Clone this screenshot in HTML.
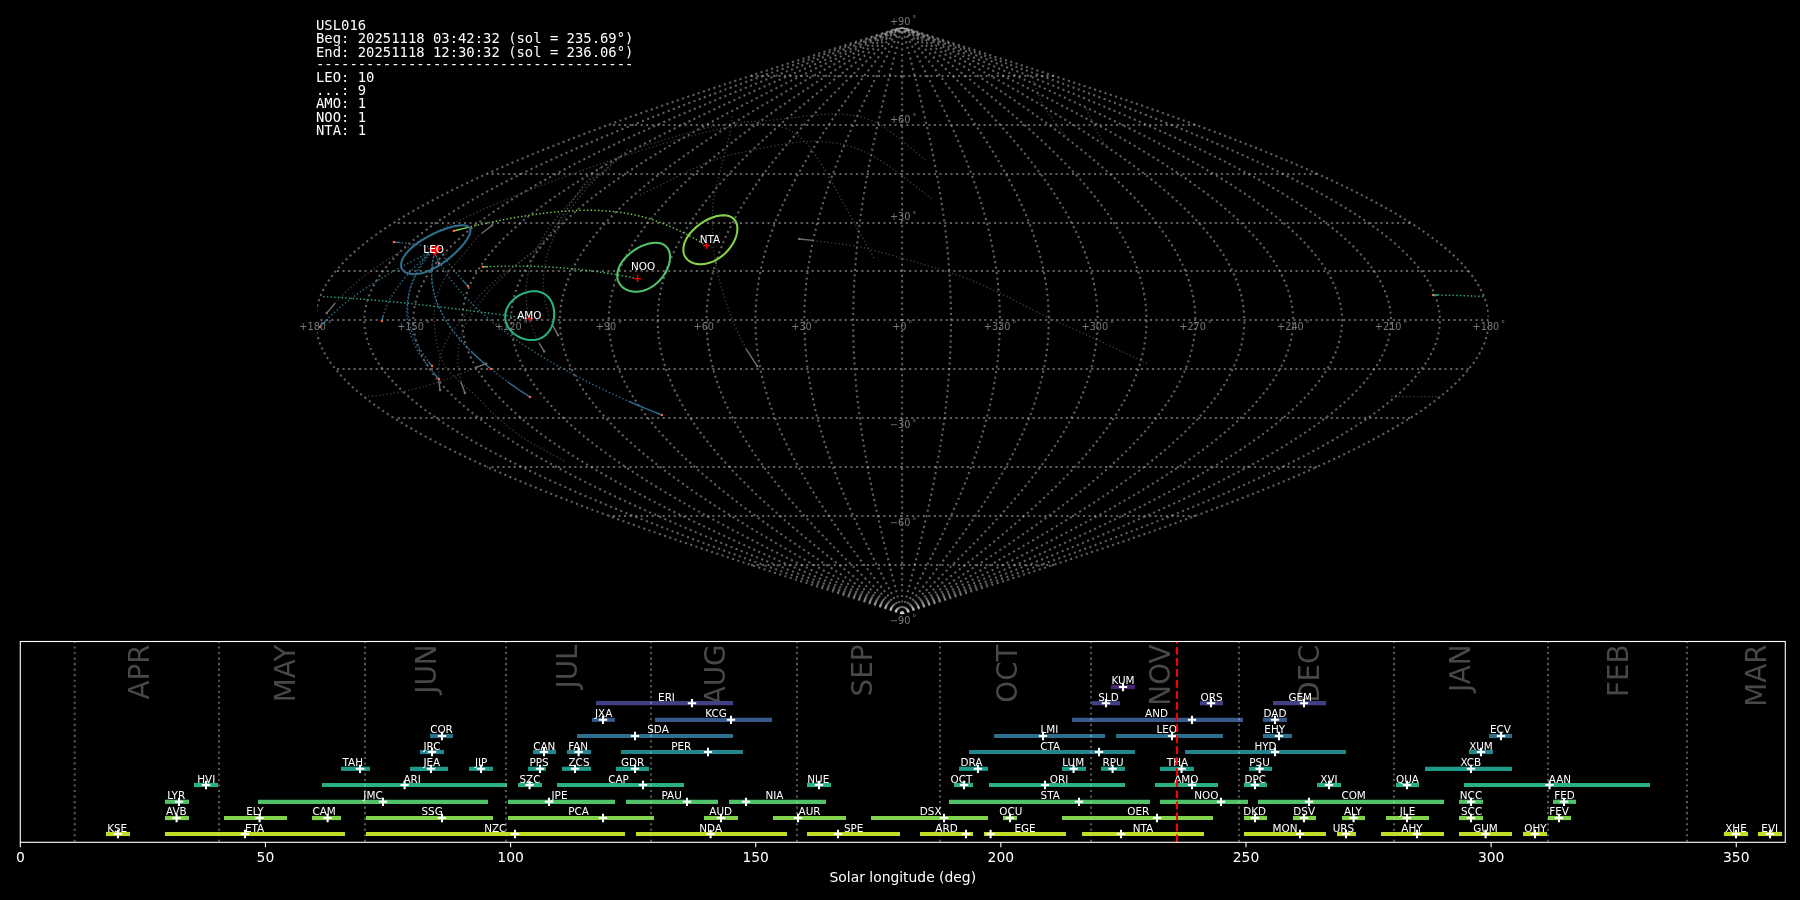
<!DOCTYPE html>
<html lang="en">
<head>
<meta charset="utf-8">
<title>USL016 meteor radiants</title>
<style>
html,body{margin:0;padding:0;background:#000;overflow:hidden}
body{width:1800px;height:900px}
svg{display:block;position:absolute;left:0;top:0;will-change:transform}
text{white-space:pre}
</style>
</head>
<body>
<svg width="1800" height="900" viewBox="0 0 1800 900">
<rect x="0" y="0" width="1800" height="900" fill="#000"/>
<defs><clipPath id="skyclip"><rect x="317" y="27.8" width="1171.7" height="586.4"/></clipPath></defs>
<g id="grid" clip-path="url(#skyclip)" fill="none" stroke="#c8c8c8" stroke-opacity="0.48" stroke-width="2.08" stroke-dasharray="2.08 3.44">
<path d="M902.1 613.61 L912.34 610.35 L922.57 607.09 L932.8 603.83 L943.02 600.57 L953.23 597.32 L963.42 594.06 L973.59 590.8 L983.74 587.54 L993.87 584.28 L1003.97 581.02 L1014.03 577.76 L1024.07 574.5 L1034.06 571.24 L1044.02 567.98 L1053.93 564.73 L1063.79 561.47 L1073.61 558.21 L1083.38 554.95 L1093.08 551.69 L1102.74 548.43 L1112.33 545.17 L1121.85 541.91 L1131.31 538.65 L1140.7 535.39 L1150.02 532.13 L1159.26 528.88 L1168.42 525.62 L1177.5 522.36 L1186.5 519.1 L1195.41 515.84 L1204.23 512.58 L1212.96 509.32 L1221.6 506.06 L1230.13 502.8 L1238.57 499.55 L1246.91 496.29 L1255.14 493.03 L1263.26 489.77 L1271.27 486.51 L1279.17 483.25 L1286.96 479.99 L1294.63 476.73 L1302.17 473.47 L1309.6 470.21 L1316.9 466.96 L1324.08 463.7 L1331.13 460.44 L1338.04 457.18 L1344.83 453.92 L1351.48 450.66 L1357.99 447.4 L1364.36 444.14 L1370.6 440.88 L1376.69 437.62 L1382.63 434.37 L1388.43 431.11 L1394.08 427.85 L1399.58 424.59 L1404.93 421.33 L1410.13 418.07 L1415.17 414.81 L1420.05 411.55 L1424.78 408.29 L1429.35 405.03 L1433.76 401.77 L1438 398.52 L1442.09 395.26 L1446 392 L1449.76 388.74 L1453.34 385.48 L1456.76 382.22 L1460.01 378.96 L1463.09 375.7 L1466 372.44 L1468.73 369.19 L1471.29 365.93 L1473.68 362.67 L1475.9 359.41 L1477.94 356.15 L1479.81 352.89 L1481.5 349.63 L1483.01 346.37 L1484.35 343.11 L1485.51 339.85 L1486.49 336.6 L1487.29 333.34 L1487.92 330.08 L1488.36 326.82 L1488.63 323.56 L1488.72 320.3 L1488.63 317.04 L1488.36 313.78 L1487.92 310.52 L1487.29 307.26 L1486.49 304 L1485.51 300.75 L1484.35 297.49 L1483.01 294.23 L1481.5 290.97 L1479.81 287.71 L1477.94 284.45 L1475.9 281.19 L1473.68 277.93 L1471.29 274.67 L1468.73 271.42 L1466 268.16 L1463.09 264.9 L1460.01 261.64 L1456.76 258.38 L1453.34 255.12 L1449.76 251.86 L1446 248.6 L1442.09 245.34 L1438 242.08 L1433.76 238.83 L1429.35 235.57 L1424.78 232.31 L1420.05 229.05 L1415.17 225.79 L1410.13 222.53 L1404.93 219.27 L1399.58 216.01 L1394.08 212.75 L1388.43 209.49 L1382.63 206.24 L1376.69 202.98 L1370.6 199.72 L1364.36 196.46 L1357.99 193.2 L1351.48 189.94 L1344.83 186.68 L1338.04 183.42 L1331.13 180.16 L1324.08 176.9 L1316.9 173.65 L1309.6 170.39 L1302.17 167.13 L1294.63 163.87 L1286.96 160.61 L1279.17 157.35 L1271.27 154.09 L1263.26 150.83 L1255.14 147.57 L1246.91 144.31 L1238.57 141.06 L1230.13 137.8 L1221.6 134.54 L1212.96 131.28 L1204.23 128.02 L1195.41 124.76 L1186.5 121.5 L1177.5 118.24 L1168.42 114.98 L1159.26 111.72 L1150.02 108.47 L1140.7 105.21 L1131.31 101.95 L1121.85 98.69 L1112.33 95.43 L1102.74 92.17 L1093.08 88.91 L1083.38 85.65 L1073.61 82.39 L1063.79 79.13 L1053.93 75.88 L1044.02 72.62 L1034.06 69.36 L1024.07 66.1 L1014.03 62.84 L1003.97 59.58 L993.87 56.32 L983.74 53.06 L973.59 49.8 L963.42 46.54 L953.23 43.29 L943.02 40.03 L932.8 36.77 L922.57 33.51 L912.34 30.25 L902.1 26.99"/>
<path d="M902.1 613.61 L911.48 610.35 L920.87 607.09 L930.24 603.83 L939.61 600.57 L948.97 597.32 L958.31 594.06 L967.63 590.8 L976.94 587.54 L986.22 584.28 L995.48 581.02 L1004.7 577.76 L1013.9 574.5 L1023.06 571.24 L1032.19 567.98 L1041.28 564.73 L1050.32 561.47 L1059.32 558.21 L1068.27 554.95 L1077.17 551.69 L1086.02 548.43 L1094.81 545.17 L1103.54 541.91 L1112.21 538.65 L1120.82 535.39 L1129.36 532.13 L1137.83 528.88 L1146.23 525.62 L1154.55 522.36 L1162.8 519.1 L1170.97 515.84 L1179.05 512.58 L1187.06 509.32 L1194.97 506.06 L1202.8 502.8 L1210.53 499.55 L1218.17 496.29 L1225.72 493.03 L1233.16 489.77 L1240.51 486.51 L1247.75 483.25 L1254.89 479.99 L1261.91 476.73 L1268.83 473.47 L1275.64 470.21 L1282.34 466.96 L1288.91 463.7 L1295.37 460.44 L1301.71 457.18 L1307.93 453.92 L1314.03 450.66 L1320 447.4 L1325.84 444.14 L1331.55 440.88 L1337.14 437.62 L1342.59 434.37 L1347.9 431.11 L1353.08 427.85 L1358.13 424.59 L1363.03 421.33 L1367.79 418.07 L1372.41 414.81 L1376.89 411.55 L1381.23 408.29 L1385.41 405.03 L1389.45 401.77 L1393.35 398.52 L1397.09 395.26 L1400.68 392 L1404.12 388.74 L1407.41 385.48 L1410.54 382.22 L1413.52 378.96 L1416.34 375.7 L1419 372.44 L1421.51 369.19 L1423.86 365.93 L1426.05 362.67 L1428.08 359.41 L1429.96 356.15 L1431.67 352.89 L1433.21 349.63 L1434.6 346.37 L1435.83 343.11 L1436.89 339.85 L1437.79 336.6 L1438.53 333.34 L1439.1 330.08 L1439.51 326.82 L1439.75 323.56 L1439.84 320.3 L1439.75 317.04 L1439.51 313.78 L1439.1 310.52 L1438.53 307.26 L1437.79 304 L1436.89 300.75 L1435.83 297.49 L1434.6 294.23 L1433.21 290.97 L1431.67 287.71 L1429.96 284.45 L1428.08 281.19 L1426.05 277.93 L1423.86 274.67 L1421.51 271.42 L1419 268.16 L1416.34 264.9 L1413.52 261.64 L1410.54 258.38 L1407.41 255.12 L1404.12 251.86 L1400.68 248.6 L1397.09 245.34 L1393.35 242.08 L1389.45 238.83 L1385.41 235.57 L1381.23 232.31 L1376.89 229.05 L1372.41 225.79 L1367.79 222.53 L1363.03 219.27 L1358.13 216.01 L1353.08 212.75 L1347.9 209.49 L1342.59 206.24 L1337.14 202.98 L1331.55 199.72 L1325.84 196.46 L1320 193.2 L1314.03 189.94 L1307.93 186.68 L1301.71 183.42 L1295.37 180.16 L1288.91 176.9 L1282.34 173.65 L1275.64 170.39 L1268.83 167.13 L1261.91 163.87 L1254.89 160.61 L1247.75 157.35 L1240.51 154.09 L1233.16 150.83 L1225.72 147.57 L1218.17 144.31 L1210.53 141.06 L1202.8 137.8 L1194.97 134.54 L1187.06 131.28 L1179.05 128.02 L1170.97 124.76 L1162.8 121.5 L1154.55 118.24 L1146.23 114.98 L1137.83 111.72 L1129.36 108.47 L1120.82 105.21 L1112.21 101.95 L1103.54 98.69 L1094.81 95.43 L1086.02 92.17 L1077.17 88.91 L1068.27 85.65 L1059.32 82.39 L1050.32 79.13 L1041.28 75.88 L1032.19 72.62 L1023.06 69.36 L1013.9 66.1 L1004.7 62.84 L995.48 59.58 L986.22 56.32 L976.94 53.06 L967.63 49.8 L958.31 46.54 L948.97 43.29 L939.61 40.03 L930.24 36.77 L920.87 33.51 L911.48 30.25 L902.1 26.99"/>
<path d="M902.1 613.61 L910.63 610.35 L919.16 607.09 L927.68 603.83 L936.2 600.57 L944.71 597.32 L953.2 594.06 L961.68 590.8 L970.13 587.54 L978.57 584.28 L986.99 581.02 L995.38 577.76 L1003.74 574.5 L1012.07 571.24 L1020.36 567.98 L1028.62 564.73 L1036.85 561.47 L1045.03 558.21 L1053.16 554.95 L1061.25 551.69 L1069.3 548.43 L1077.29 545.17 L1085.23 541.91 L1093.11 538.65 L1100.93 535.39 L1108.7 532.13 L1116.4 528.88 L1124.03 525.62 L1131.6 522.36 L1139.1 519.1 L1146.53 515.84 L1153.88 512.58 L1161.15 509.32 L1168.35 506.06 L1175.46 502.8 L1182.49 499.55 L1189.44 496.29 L1196.3 493.03 L1203.07 489.77 L1209.74 486.51 L1216.33 483.25 L1222.81 479.99 L1229.2 476.73 L1235.49 473.47 L1241.68 470.21 L1247.77 466.96 L1253.75 463.7 L1259.62 460.44 L1265.39 457.18 L1271.04 453.92 L1276.58 450.66 L1282.01 447.4 L1287.32 444.14 L1292.51 440.88 L1297.59 437.62 L1302.54 434.37 L1307.38 431.11 L1312.08 427.85 L1316.67 424.59 L1321.13 421.33 L1325.46 418.07 L1329.66 414.81 L1333.73 411.55 L1337.67 408.29 L1341.48 405.03 L1345.15 401.77 L1348.69 398.52 L1352.09 395.26 L1355.35 392 L1358.48 388.74 L1361.47 385.48 L1364.32 382.22 L1367.02 378.96 L1369.59 375.7 L1372.01 372.44 L1374.29 369.19 L1376.43 365.93 L1378.42 362.67 L1380.27 359.41 L1381.97 356.15 L1383.52 352.89 L1384.93 349.63 L1386.19 346.37 L1387.31 343.11 L1388.27 339.85 L1389.09 336.6 L1389.76 333.34 L1390.28 330.08 L1390.65 326.82 L1390.88 323.56 L1390.95 320.3 L1390.88 317.04 L1390.65 313.78 L1390.28 310.52 L1389.76 307.26 L1389.09 304 L1388.27 300.75 L1387.31 297.49 L1386.19 294.23 L1384.93 290.97 L1383.52 287.71 L1381.97 284.45 L1380.27 281.19 L1378.42 277.93 L1376.43 274.67 L1374.29 271.42 L1372.01 268.16 L1369.59 264.9 L1367.02 261.64 L1364.32 258.38 L1361.47 255.12 L1358.48 251.86 L1355.35 248.6 L1352.09 245.34 L1348.69 242.08 L1345.15 238.83 L1341.48 235.57 L1337.67 232.31 L1333.73 229.05 L1329.66 225.79 L1325.46 222.53 L1321.13 219.27 L1316.67 216.01 L1312.08 212.75 L1307.38 209.49 L1302.54 206.24 L1297.59 202.98 L1292.51 199.72 L1287.32 196.46 L1282.01 193.2 L1276.58 189.94 L1271.04 186.68 L1265.39 183.42 L1259.62 180.16 L1253.75 176.9 L1247.77 173.65 L1241.68 170.39 L1235.49 167.13 L1229.2 163.87 L1222.81 160.61 L1216.33 157.35 L1209.74 154.09 L1203.07 150.83 L1196.3 147.57 L1189.44 144.31 L1182.49 141.06 L1175.46 137.8 L1168.35 134.54 L1161.15 131.28 L1153.88 128.02 L1146.53 124.76 L1139.1 121.5 L1131.6 118.24 L1124.03 114.98 L1116.4 111.72 L1108.7 108.47 L1100.93 105.21 L1093.11 101.95 L1085.23 98.69 L1077.29 95.43 L1069.3 92.17 L1061.25 88.91 L1053.16 85.65 L1045.03 82.39 L1036.85 79.13 L1028.62 75.88 L1020.36 72.62 L1012.07 69.36 L1003.74 66.1 L995.38 62.84 L986.99 59.58 L978.57 56.32 L970.13 53.06 L961.68 49.8 L953.2 46.54 L944.71 43.29 L936.2 40.03 L927.68 36.77 L919.16 33.51 L910.63 30.25 L902.1 26.99"/>
<path d="M902.1 613.61 L909.78 610.35 L917.45 607.09 L925.13 603.83 L932.79 600.57 L940.45 597.32 L948.09 594.06 L955.72 590.8 L963.33 587.54 L970.93 584.28 L978.5 581.02 L986.05 577.76 L993.57 574.5 L1001.07 571.24 L1008.54 567.98 L1015.97 564.73 L1023.37 561.47 L1030.73 558.21 L1038.06 554.95 L1045.34 551.69 L1052.58 548.43 L1059.77 545.17 L1066.91 541.91 L1074.01 538.65 L1081.05 535.39 L1088.04 532.13 L1094.97 528.88 L1101.84 525.62 L1108.65 522.36 L1115.4 519.1 L1122.08 515.84 L1128.7 512.58 L1135.25 509.32 L1141.72 506.06 L1148.13 502.8 L1154.45 499.55 L1160.7 496.29 L1166.88 493.03 L1172.97 489.77 L1178.98 486.51 L1184.9 483.25 L1190.74 479.99 L1196.49 476.73 L1202.16 473.47 L1207.73 470.21 L1213.2 466.96 L1218.58 463.7 L1223.87 460.44 L1229.06 457.18 L1234.15 453.92 L1239.13 450.66 L1244.02 447.4 L1248.8 444.14 L1253.47 440.88 L1258.04 437.62 L1262.5 434.37 L1266.85 431.11 L1271.09 427.85 L1275.21 424.59 L1279.22 421.33 L1283.12 418.07 L1286.9 414.81 L1290.57 411.55 L1294.11 408.29 L1297.54 405.03 L1300.84 401.77 L1304.03 398.52 L1307.09 395.26 L1310.03 392 L1312.84 388.74 L1315.53 385.48 L1318.1 382.22 L1320.53 378.96 L1322.84 375.7 L1325.02 372.44 L1327.07 369.19 L1329 365.93 L1330.79 362.67 L1332.45 359.41 L1333.98 356.15 L1335.38 352.89 L1336.65 349.63 L1337.78 346.37 L1338.79 343.11 L1339.65 339.85 L1340.39 336.6 L1340.99 333.34 L1341.46 330.08 L1341.8 326.82 L1342 323.56 L1342.07 320.3 L1342 317.04 L1341.8 313.78 L1341.46 310.52 L1340.99 307.26 L1340.39 304 L1339.65 300.75 L1338.79 297.49 L1337.78 294.23 L1336.65 290.97 L1335.38 287.71 L1333.98 284.45 L1332.45 281.19 L1330.79 277.93 L1329 274.67 L1327.07 271.42 L1325.02 268.16 L1322.84 264.9 L1320.53 261.64 L1318.1 258.38 L1315.53 255.12 L1312.84 251.86 L1310.03 248.6 L1307.09 245.34 L1304.03 242.08 L1300.84 238.83 L1297.54 235.57 L1294.11 232.31 L1290.57 229.05 L1286.9 225.79 L1283.12 222.53 L1279.22 219.27 L1275.21 216.01 L1271.09 212.75 L1266.85 209.49 L1262.5 206.24 L1258.04 202.98 L1253.47 199.72 L1248.8 196.46 L1244.02 193.2 L1239.13 189.94 L1234.15 186.68 L1229.06 183.42 L1223.87 180.16 L1218.58 176.9 L1213.2 173.65 L1207.73 170.39 L1202.16 167.13 L1196.49 163.87 L1190.74 160.61 L1184.9 157.35 L1178.98 154.09 L1172.97 150.83 L1166.88 147.57 L1160.7 144.31 L1154.45 141.06 L1148.13 137.8 L1141.72 134.54 L1135.25 131.28 L1128.7 128.02 L1122.08 124.76 L1115.4 121.5 L1108.65 118.24 L1101.84 114.98 L1094.97 111.72 L1088.04 108.47 L1081.05 105.21 L1074.01 101.95 L1066.91 98.69 L1059.77 95.43 L1052.58 92.17 L1045.34 88.91 L1038.06 85.65 L1030.73 82.39 L1023.37 79.13 L1015.97 75.88 L1008.54 72.62 L1001.07 69.36 L993.57 66.1 L986.05 62.84 L978.5 59.58 L970.93 56.32 L963.33 53.06 L955.72 49.8 L948.09 46.54 L940.45 43.29 L932.79 40.03 L925.13 36.77 L917.45 33.51 L909.78 30.25 L902.1 26.99"/>
<path d="M902.1 613.61 L908.93 610.35 L915.75 607.09 L922.57 603.83 L929.38 600.57 L936.18 597.32 L942.98 594.06 L949.76 590.8 L956.53 587.54 L963.28 584.28 L970.01 581.02 L976.72 577.76 L983.41 574.5 L990.07 571.24 L996.71 567.98 L1003.32 564.73 L1009.9 561.47 L1016.44 558.21 L1022.95 554.95 L1029.42 551.69 L1035.86 548.43 L1042.25 545.17 L1048.6 541.91 L1054.91 538.65 L1061.17 535.39 L1067.38 532.13 L1073.54 528.88 L1079.65 525.62 L1085.7 522.36 L1091.7 519.1 L1097.64 515.84 L1103.52 512.58 L1109.34 509.32 L1115.1 506.06 L1120.79 502.8 L1126.41 499.55 L1131.97 496.29 L1137.46 493.03 L1142.87 489.77 L1148.21 486.51 L1153.48 483.25 L1158.67 479.99 L1163.78 476.73 L1168.82 473.47 L1173.77 470.21 L1178.64 466.96 L1183.42 463.7 L1188.12 460.44 L1192.73 457.18 L1197.25 453.92 L1201.68 450.66 L1206.03 447.4 L1210.28 444.14 L1214.43 440.88 L1218.49 437.62 L1222.45 434.37 L1226.32 431.11 L1230.09 427.85 L1233.75 424.59 L1237.32 421.33 L1240.79 418.07 L1244.15 414.81 L1247.4 411.55 L1250.55 408.29 L1253.6 405.03 L1256.54 401.77 L1259.37 398.52 L1262.09 395.26 L1264.7 392 L1267.2 388.74 L1269.59 385.48 L1271.87 382.22 L1274.04 378.96 L1276.09 375.7 L1278.03 372.44 L1279.85 369.19 L1281.56 365.93 L1283.16 362.67 L1284.63 359.41 L1285.99 356.15 L1287.24 352.89 L1288.37 349.63 L1289.37 346.37 L1290.26 343.11 L1291.04 339.85 L1291.69 336.6 L1292.23 333.34 L1292.64 330.08 L1292.94 326.82 L1293.12 323.56 L1293.18 320.3 L1293.12 317.04 L1292.94 313.78 L1292.64 310.52 L1292.23 307.26 L1291.69 304 L1291.04 300.75 L1290.26 297.49 L1289.37 294.23 L1288.37 290.97 L1287.24 287.71 L1285.99 284.45 L1284.63 281.19 L1283.16 277.93 L1281.56 274.67 L1279.85 271.42 L1278.03 268.16 L1276.09 264.9 L1274.04 261.64 L1271.87 258.38 L1269.59 255.12 L1267.2 251.86 L1264.7 248.6 L1262.09 245.34 L1259.37 242.08 L1256.54 238.83 L1253.6 235.57 L1250.55 232.31 L1247.4 229.05 L1244.15 225.79 L1240.79 222.53 L1237.32 219.27 L1233.75 216.01 L1230.09 212.75 L1226.32 209.49 L1222.45 206.24 L1218.49 202.98 L1214.43 199.72 L1210.28 196.46 L1206.03 193.2 L1201.68 189.94 L1197.25 186.68 L1192.73 183.42 L1188.12 180.16 L1183.42 176.9 L1178.64 173.65 L1173.77 170.39 L1168.82 167.13 L1163.78 163.87 L1158.67 160.61 L1153.48 157.35 L1148.21 154.09 L1142.87 150.83 L1137.46 147.57 L1131.97 144.31 L1126.41 141.06 L1120.79 137.8 L1115.1 134.54 L1109.34 131.28 L1103.52 128.02 L1097.64 124.76 L1091.7 121.5 L1085.7 118.24 L1079.65 114.98 L1073.54 111.72 L1067.38 108.47 L1061.17 105.21 L1054.91 101.95 L1048.6 98.69 L1042.25 95.43 L1035.86 92.17 L1029.42 88.91 L1022.95 85.65 L1016.44 82.39 L1009.9 79.13 L1003.32 75.88 L996.71 72.62 L990.07 69.36 L983.41 66.1 L976.72 62.84 L970.01 59.58 L963.28 56.32 L956.53 53.06 L949.76 49.8 L942.98 46.54 L936.18 43.29 L929.38 40.03 L922.57 36.77 L915.75 33.51 L908.93 30.25 L902.1 26.99"/>
<path d="M902.1 613.61 L908.07 610.35 L914.04 607.09 L920.01 603.83 L925.97 600.57 L931.92 597.32 L937.87 594.06 L943.8 590.8 L949.72 587.54 L955.63 584.28 L961.52 581.02 L967.39 577.76 L973.25 574.5 L979.08 571.24 L984.88 567.98 L990.67 564.73 L996.42 561.47 L1002.15 558.21 L1007.84 554.95 L1013.51 551.69 L1019.14 548.43 L1024.73 545.17 L1030.29 541.91 L1035.81 538.65 L1041.28 535.39 L1046.72 532.13 L1052.11 528.88 L1057.45 525.62 L1062.75 522.36 L1068 519.1 L1073.2 515.84 L1078.34 512.58 L1083.44 509.32 L1088.47 506.06 L1093.45 502.8 L1098.37 499.55 L1103.24 496.29 L1108.04 493.03 L1112.78 489.77 L1117.45 486.51 L1122.06 483.25 L1126.6 479.99 L1131.07 476.73 L1135.48 473.47 L1139.81 470.21 L1144.07 466.96 L1148.25 463.7 L1152.37 460.44 L1156.4 457.18 L1160.36 453.92 L1164.24 450.66 L1168.04 447.4 L1171.75 444.14 L1175.39 440.88 L1178.94 437.62 L1182.41 434.37 L1185.79 431.11 L1189.09 427.85 L1192.3 424.59 L1195.42 421.33 L1198.45 418.07 L1201.39 414.81 L1204.24 411.55 L1207 408.29 L1209.66 405.03 L1212.23 401.77 L1214.71 398.52 L1217.09 395.26 L1219.38 392 L1221.57 388.74 L1223.66 385.48 L1225.65 382.22 L1227.55 378.96 L1229.34 375.7 L1231.04 372.44 L1232.63 369.19 L1234.13 365.93 L1235.52 362.67 L1236.82 359.41 L1238.01 356.15 L1239.1 352.89 L1240.08 349.63 L1240.96 346.37 L1241.74 343.11 L1242.42 339.85 L1242.99 336.6 L1243.46 333.34 L1243.83 330.08 L1244.09 326.82 L1244.24 323.56 L1244.3 320.3 L1244.24 317.04 L1244.09 313.78 L1243.83 310.52 L1243.46 307.26 L1242.99 304 L1242.42 300.75 L1241.74 297.49 L1240.96 294.23 L1240.08 290.97 L1239.1 287.71 L1238.01 284.45 L1236.82 281.19 L1235.52 277.93 L1234.13 274.67 L1232.63 271.42 L1231.04 268.16 L1229.34 264.9 L1227.55 261.64 L1225.65 258.38 L1223.66 255.12 L1221.57 251.86 L1219.38 248.6 L1217.09 245.34 L1214.71 242.08 L1212.23 238.83 L1209.66 235.57 L1207 232.31 L1204.24 229.05 L1201.39 225.79 L1198.45 222.53 L1195.42 219.27 L1192.3 216.01 L1189.09 212.75 L1185.79 209.49 L1182.41 206.24 L1178.94 202.98 L1175.39 199.72 L1171.75 196.46 L1168.04 193.2 L1164.24 189.94 L1160.36 186.68 L1156.4 183.42 L1152.37 180.16 L1148.25 176.9 L1144.07 173.65 L1139.81 170.39 L1135.48 167.13 L1131.07 163.87 L1126.6 160.61 L1122.06 157.35 L1117.45 154.09 L1112.78 150.83 L1108.04 147.57 L1103.24 144.31 L1098.37 141.06 L1093.45 137.8 L1088.47 134.54 L1083.44 131.28 L1078.34 128.02 L1073.2 124.76 L1068 121.5 L1062.75 118.24 L1057.45 114.98 L1052.11 111.72 L1046.72 108.47 L1041.28 105.21 L1035.81 101.95 L1030.29 98.69 L1024.73 95.43 L1019.14 92.17 L1013.51 88.91 L1007.84 85.65 L1002.15 82.39 L996.42 79.13 L990.67 75.88 L984.88 72.62 L979.08 69.36 L973.25 66.1 L967.39 62.84 L961.52 59.58 L955.63 56.32 L949.72 53.06 L943.8 49.8 L937.87 46.54 L931.92 43.29 L925.97 40.03 L920.01 36.77 L914.04 33.51 L908.07 30.25 L902.1 26.99"/>
<path d="M902.1 613.61 L907.22 610.35 L912.34 607.09 L917.45 603.83 L922.56 600.57 L927.66 597.32 L932.76 594.06 L937.85 590.8 L942.92 587.54 L947.98 584.28 L953.03 581.02 L958.07 577.76 L963.08 574.5 L968.08 571.24 L973.06 567.98 L978.01 564.73 L982.95 561.47 L987.86 558.21 L992.74 554.95 L997.59 551.69 L1002.42 548.43 L1007.21 545.17 L1011.98 541.91 L1016.71 538.65 L1021.4 535.39 L1026.06 532.13 L1030.68 528.88 L1035.26 525.62 L1039.8 522.36 L1044.3 519.1 L1048.76 515.84 L1053.17 512.58 L1057.53 509.32 L1061.85 506.06 L1066.12 502.8 L1070.34 499.55 L1074.5 496.29 L1078.62 493.03 L1082.68 489.77 L1086.69 486.51 L1090.64 483.25 L1094.53 479.99 L1098.36 476.73 L1102.14 473.47 L1105.85 470.21 L1109.5 466.96 L1113.09 463.7 L1116.61 460.44 L1120.07 457.18 L1123.46 453.92 L1126.79 450.66 L1130.04 447.4 L1133.23 444.14 L1136.35 440.88 L1139.39 437.62 L1142.37 434.37 L1145.27 431.11 L1148.09 427.85 L1150.84 424.59 L1153.52 421.33 L1156.11 418.07 L1158.63 414.81 L1161.08 411.55 L1163.44 408.29 L1165.73 405.03 L1167.93 401.77 L1170.05 398.52 L1172.09 395.26 L1174.05 392 L1175.93 388.74 L1177.72 385.48 L1179.43 382.22 L1181.05 378.96 L1182.59 375.7 L1184.05 372.44 L1185.42 369.19 L1186.7 365.93 L1187.89 362.67 L1189 359.41 L1190.02 356.15 L1190.95 352.89 L1191.8 349.63 L1192.56 346.37 L1193.22 343.11 L1193.8 339.85 L1194.29 336.6 L1194.7 333.34 L1195.01 330.08 L1195.23 326.82 L1195.37 323.56 L1195.41 320.3 L1195.37 317.04 L1195.23 313.78 L1195.01 310.52 L1194.7 307.26 L1194.29 304 L1193.8 300.75 L1193.22 297.49 L1192.56 294.23 L1191.8 290.97 L1190.95 287.71 L1190.02 284.45 L1189 281.19 L1187.89 277.93 L1186.7 274.67 L1185.42 271.42 L1184.05 268.16 L1182.59 264.9 L1181.05 261.64 L1179.43 258.38 L1177.72 255.12 L1175.93 251.86 L1174.05 248.6 L1172.09 245.34 L1170.05 242.08 L1167.93 238.83 L1165.73 235.57 L1163.44 232.31 L1161.08 229.05 L1158.63 225.79 L1156.11 222.53 L1153.52 219.27 L1150.84 216.01 L1148.09 212.75 L1145.27 209.49 L1142.37 206.24 L1139.39 202.98 L1136.35 199.72 L1133.23 196.46 L1130.04 193.2 L1126.79 189.94 L1123.46 186.68 L1120.07 183.42 L1116.61 180.16 L1113.09 176.9 L1109.5 173.65 L1105.85 170.39 L1102.14 167.13 L1098.36 163.87 L1094.53 160.61 L1090.64 157.35 L1086.69 154.09 L1082.68 150.83 L1078.62 147.57 L1074.5 144.31 L1070.34 141.06 L1066.12 137.8 L1061.85 134.54 L1057.53 131.28 L1053.17 128.02 L1048.76 124.76 L1044.3 121.5 L1039.8 118.24 L1035.26 114.98 L1030.68 111.72 L1026.06 108.47 L1021.4 105.21 L1016.71 101.95 L1011.98 98.69 L1007.21 95.43 L1002.42 92.17 L997.59 88.91 L992.74 85.65 L987.86 82.39 L982.95 79.13 L978.01 75.88 L973.06 72.62 L968.08 69.36 L963.08 66.1 L958.07 62.84 L953.03 59.58 L947.98 56.32 L942.92 53.06 L937.85 49.8 L932.76 46.54 L927.66 43.29 L922.56 40.03 L917.45 36.77 L912.34 33.51 L907.22 30.25 L902.1 26.99"/>
<path d="M902.1 613.61 L906.37 610.35 L910.63 607.09 L914.89 603.83 L919.15 600.57 L923.4 597.32 L927.65 594.06 L931.89 590.8 L936.12 587.54 L940.34 584.28 L944.54 581.02 L948.74 577.76 L952.92 574.5 L957.08 571.24 L961.23 567.98 L965.36 564.73 L969.47 561.47 L973.56 558.21 L977.63 554.95 L981.68 551.69 L985.7 548.43 L989.69 545.17 L993.66 541.91 L997.6 538.65 L1001.52 535.39 L1005.4 532.13 L1009.25 528.88 L1013.07 525.62 L1016.85 522.36 L1020.6 519.1 L1024.31 515.84 L1027.99 512.58 L1031.63 509.32 L1035.22 506.06 L1038.78 502.8 L1042.3 499.55 L1045.77 496.29 L1049.2 493.03 L1052.58 489.77 L1055.92 486.51 L1059.21 483.25 L1062.46 479.99 L1065.65 476.73 L1068.8 473.47 L1071.89 470.21 L1074.93 466.96 L1077.92 463.7 L1080.86 460.44 L1083.74 457.18 L1086.57 453.92 L1089.34 450.66 L1092.05 447.4 L1094.71 444.14 L1097.31 440.88 L1099.84 437.62 L1102.32 434.37 L1104.74 431.11 L1107.09 427.85 L1109.38 424.59 L1111.61 421.33 L1113.78 418.07 L1115.88 414.81 L1117.91 411.55 L1119.88 408.29 L1121.79 405.03 L1123.62 401.77 L1125.39 398.52 L1127.09 395.26 L1128.73 392 L1130.29 388.74 L1131.78 385.48 L1133.21 382.22 L1134.56 378.96 L1135.84 375.7 L1137.06 372.44 L1138.2 369.19 L1139.26 365.93 L1140.26 362.67 L1141.18 359.41 L1142.03 356.15 L1142.81 352.89 L1143.52 349.63 L1144.15 346.37 L1144.7 343.11 L1145.19 339.85 L1145.59 336.6 L1145.93 333.34 L1146.19 330.08 L1146.38 326.82 L1146.49 323.56 L1146.53 320.3 L1146.49 317.04 L1146.38 313.78 L1146.19 310.52 L1145.93 307.26 L1145.59 304 L1145.19 300.75 L1144.7 297.49 L1144.15 294.23 L1143.52 290.97 L1142.81 287.71 L1142.03 284.45 L1141.18 281.19 L1140.26 277.93 L1139.26 274.67 L1138.2 271.42 L1137.06 268.16 L1135.84 264.9 L1134.56 261.64 L1133.21 258.38 L1131.78 255.12 L1130.29 251.86 L1128.73 248.6 L1127.09 245.34 L1125.39 242.08 L1123.62 238.83 L1121.79 235.57 L1119.88 232.31 L1117.91 229.05 L1115.88 225.79 L1113.78 222.53 L1111.61 219.27 L1109.38 216.01 L1107.09 212.75 L1104.74 209.49 L1102.32 206.24 L1099.84 202.98 L1097.31 199.72 L1094.71 196.46 L1092.05 193.2 L1089.34 189.94 L1086.57 186.68 L1083.74 183.42 L1080.86 180.16 L1077.92 176.9 L1074.93 173.65 L1071.89 170.39 L1068.8 167.13 L1065.65 163.87 L1062.46 160.61 L1059.21 157.35 L1055.92 154.09 L1052.58 150.83 L1049.2 147.57 L1045.77 144.31 L1042.3 141.06 L1038.78 137.8 L1035.22 134.54 L1031.63 131.28 L1027.99 128.02 L1024.31 124.76 L1020.6 121.5 L1016.85 118.24 L1013.07 114.98 L1009.25 111.72 L1005.4 108.47 L1001.52 105.21 L997.6 101.95 L993.66 98.69 L989.69 95.43 L985.7 92.17 L981.68 88.91 L977.63 85.65 L973.56 82.39 L969.47 79.13 L965.36 75.88 L961.23 72.62 L957.08 69.36 L952.92 66.1 L948.74 62.84 L944.54 59.58 L940.34 56.32 L936.12 53.06 L931.89 49.8 L927.65 46.54 L923.4 43.29 L919.15 40.03 L914.89 36.77 L910.63 33.51 L906.37 30.25 L902.1 26.99"/>
<path d="M902.1 613.61 L905.51 610.35 L908.92 607.09 L912.33 603.83 L915.74 600.57 L919.14 597.32 L922.54 594.06 L925.93 590.8 L929.31 587.54 L932.69 584.28 L936.06 581.02 L939.41 577.76 L942.76 574.5 L946.09 571.24 L949.41 567.98 L952.71 564.73 L956 561.47 L959.27 558.21 L962.53 554.95 L965.76 551.69 L968.98 548.43 L972.18 545.17 L975.35 541.91 L978.5 538.65 L981.63 535.39 L984.74 532.13 L987.82 528.88 L990.87 525.62 L993.9 522.36 L996.9 519.1 L999.87 515.84 L1002.81 512.58 L1005.72 509.32 L1008.6 506.06 L1011.44 502.8 L1014.26 499.55 L1017.04 496.29 L1019.78 493.03 L1022.49 489.77 L1025.16 486.51 L1027.79 483.25 L1030.39 479.99 L1032.94 476.73 L1035.46 473.47 L1037.93 470.21 L1040.37 466.96 L1042.76 463.7 L1045.11 460.44 L1047.41 457.18 L1049.68 453.92 L1051.89 450.66 L1054.06 447.4 L1056.19 444.14 L1058.27 440.88 L1060.3 437.62 L1062.28 434.37 L1064.21 431.11 L1066.09 427.85 L1067.93 424.59 L1069.71 421.33 L1071.44 418.07 L1073.12 414.81 L1074.75 411.55 L1076.33 408.29 L1077.85 405.03 L1079.32 401.77 L1080.73 398.52 L1082.1 395.26 L1083.4 392 L1084.65 388.74 L1085.85 385.48 L1086.99 382.22 L1088.07 378.96 L1089.1 375.7 L1090.07 372.44 L1090.98 369.19 L1091.83 365.93 L1092.63 362.67 L1093.37 359.41 L1094.05 356.15 L1094.67 352.89 L1095.23 349.63 L1095.74 346.37 L1096.18 343.11 L1096.57 339.85 L1096.9 336.6 L1097.16 333.34 L1097.37 330.08 L1097.52 326.82 L1097.61 323.56 L1097.64 320.3 L1097.61 317.04 L1097.52 313.78 L1097.37 310.52 L1097.16 307.26 L1096.9 304 L1096.57 300.75 L1096.18 297.49 L1095.74 294.23 L1095.23 290.97 L1094.67 287.71 L1094.05 284.45 L1093.37 281.19 L1092.63 277.93 L1091.83 274.67 L1090.98 271.42 L1090.07 268.16 L1089.1 264.9 L1088.07 261.64 L1086.99 258.38 L1085.85 255.12 L1084.65 251.86 L1083.4 248.6 L1082.1 245.34 L1080.73 242.08 L1079.32 238.83 L1077.85 235.57 L1076.33 232.31 L1074.75 229.05 L1073.12 225.79 L1071.44 222.53 L1069.71 219.27 L1067.93 216.01 L1066.09 212.75 L1064.21 209.49 L1062.28 206.24 L1060.3 202.98 L1058.27 199.72 L1056.19 196.46 L1054.06 193.2 L1051.89 189.94 L1049.68 186.68 L1047.41 183.42 L1045.11 180.16 L1042.76 176.9 L1040.37 173.65 L1037.93 170.39 L1035.46 167.13 L1032.94 163.87 L1030.39 160.61 L1027.79 157.35 L1025.16 154.09 L1022.49 150.83 L1019.78 147.57 L1017.04 144.31 L1014.26 141.06 L1011.44 137.8 L1008.6 134.54 L1005.72 131.28 L1002.81 128.02 L999.87 124.76 L996.9 121.5 L993.9 118.24 L990.87 114.98 L987.82 111.72 L984.74 108.47 L981.63 105.21 L978.5 101.95 L975.35 98.69 L972.18 95.43 L968.98 92.17 L965.76 88.91 L962.53 85.65 L959.27 82.39 L956 79.13 L952.71 75.88 L949.41 72.62 L946.09 69.36 L942.76 66.1 L939.41 62.84 L936.06 59.58 L932.69 56.32 L929.31 53.06 L925.93 49.8 L922.54 46.54 L919.14 43.29 L915.74 40.03 L912.33 36.77 L908.92 33.51 L905.51 30.25 L902.1 26.99"/>
<path d="M902.1 613.61 L904.66 610.35 L907.22 607.09 L909.78 603.83 L912.33 600.57 L914.88 597.32 L917.43 594.06 L919.97 590.8 L922.51 587.54 L925.04 584.28 L927.57 581.02 L930.08 577.76 L932.59 574.5 L935.09 571.24 L937.58 567.98 L940.06 564.73 L942.52 561.47 L944.98 558.21 L947.42 554.95 L949.85 551.69 L952.26 548.43 L954.66 545.17 L957.04 541.91 L959.4 538.65 L961.75 535.39 L964.08 532.13 L966.39 528.88 L968.68 525.62 L970.95 522.36 L973.2 519.1 L975.43 515.84 L977.63 512.58 L979.82 509.32 L981.97 506.06 L984.11 502.8 L986.22 499.55 L988.3 496.29 L990.36 493.03 L992.39 489.77 L994.39 486.51 L996.37 483.25 L998.31 479.99 L1000.23 476.73 L1002.12 473.47 L1003.98 470.21 L1005.8 466.96 L1007.59 463.7 L1009.36 460.44 L1011.09 457.18 L1012.78 453.92 L1014.44 450.66 L1016.07 447.4 L1017.67 444.14 L1019.22 440.88 L1020.75 437.62 L1022.23 434.37 L1023.68 431.11 L1025.1 427.85 L1026.47 424.59 L1027.81 421.33 L1029.11 418.07 L1030.37 414.81 L1031.59 411.55 L1032.77 408.29 L1033.91 405.03 L1035.01 401.77 L1036.08 398.52 L1037.1 395.26 L1038.08 392 L1039.01 388.74 L1039.91 385.48 L1040.77 382.22 L1041.58 378.96 L1042.35 375.7 L1043.07 372.44 L1043.76 369.19 L1044.4 365.93 L1045 362.67 L1045.55 359.41 L1046.06 356.15 L1046.53 352.89 L1046.95 349.63 L1047.33 346.37 L1047.66 343.11 L1047.95 339.85 L1048.2 336.6 L1048.4 333.34 L1048.55 330.08 L1048.67 326.82 L1048.73 323.56 L1048.76 320.3 L1048.73 317.04 L1048.67 313.78 L1048.55 310.52 L1048.4 307.26 L1048.2 304 L1047.95 300.75 L1047.66 297.49 L1047.33 294.23 L1046.95 290.97 L1046.53 287.71 L1046.06 284.45 L1045.55 281.19 L1045 277.93 L1044.4 274.67 L1043.76 271.42 L1043.07 268.16 L1042.35 264.9 L1041.58 261.64 L1040.77 258.38 L1039.91 255.12 L1039.01 251.86 L1038.08 248.6 L1037.1 245.34 L1036.08 242.08 L1035.01 238.83 L1033.91 235.57 L1032.77 232.31 L1031.59 229.05 L1030.37 225.79 L1029.11 222.53 L1027.81 219.27 L1026.47 216.01 L1025.1 212.75 L1023.68 209.49 L1022.23 206.24 L1020.75 202.98 L1019.22 199.72 L1017.67 196.46 L1016.07 193.2 L1014.44 189.94 L1012.78 186.68 L1011.09 183.42 L1009.36 180.16 L1007.59 176.9 L1005.8 173.65 L1003.98 170.39 L1002.12 167.13 L1000.23 163.87 L998.31 160.61 L996.37 157.35 L994.39 154.09 L992.39 150.83 L990.36 147.57 L988.3 144.31 L986.22 141.06 L984.11 137.8 L981.97 134.54 L979.82 131.28 L977.63 128.02 L975.43 124.76 L973.2 121.5 L970.95 118.24 L968.68 114.98 L966.39 111.72 L964.08 108.47 L961.75 105.21 L959.4 101.95 L957.04 98.69 L954.66 95.43 L952.26 92.17 L949.85 88.91 L947.42 85.65 L944.98 82.39 L942.52 79.13 L940.06 75.88 L937.58 72.62 L935.09 69.36 L932.59 66.1 L930.08 62.84 L927.57 59.58 L925.04 56.32 L922.51 53.06 L919.97 49.8 L917.43 46.54 L914.88 43.29 L912.33 40.03 L909.78 36.77 L907.22 33.51 L904.66 30.25 L902.1 26.99"/>
<path d="M902.1 613.61 L903.81 610.35 L905.51 607.09 L907.22 603.83 L908.92 600.57 L910.62 597.32 L912.32 594.06 L914.02 590.8 L915.71 587.54 L917.39 584.28 L919.08 581.02 L920.76 577.76 L922.43 574.5 L924.09 571.24 L925.75 567.98 L927.4 564.73 L929.05 561.47 L930.69 558.21 L932.31 554.95 L933.93 551.69 L935.54 548.43 L937.14 545.17 L938.73 541.91 L940.3 538.65 L941.87 535.39 L943.42 532.13 L944.96 528.88 L946.49 525.62 L948 522.36 L949.5 519.1 L950.99 515.84 L952.46 512.58 L953.91 509.32 L955.35 506.06 L956.77 502.8 L958.18 499.55 L959.57 496.29 L960.94 493.03 L962.29 489.77 L963.63 486.51 L964.95 483.25 L966.24 479.99 L967.52 476.73 L968.78 473.47 L970.02 470.21 L971.23 466.96 L972.43 463.7 L973.6 460.44 L974.76 457.18 L975.89 453.92 L977 450.66 L978.08 447.4 L979.14 444.14 L980.18 440.88 L981.2 437.62 L982.19 434.37 L983.16 431.11 L984.1 427.85 L985.01 424.59 L985.91 421.33 L986.77 418.07 L987.61 414.81 L988.43 411.55 L989.21 408.29 L989.98 405.03 L990.71 401.77 L991.42 398.52 L992.1 395.26 L992.75 392 L993.38 388.74 L993.97 385.48 L994.54 382.22 L995.08 378.96 L995.6 375.7 L996.08 372.44 L996.54 369.19 L996.97 365.93 L997.36 362.67 L997.73 359.41 L998.07 356.15 L998.38 352.89 L998.67 349.63 L998.92 346.37 L999.14 343.11 L999.33 339.85 L999.5 336.6 L999.63 333.34 L999.74 330.08 L999.81 326.82 L999.86 323.56 L999.87 320.3 L999.86 317.04 L999.81 313.78 L999.74 310.52 L999.63 307.26 L999.5 304 L999.33 300.75 L999.14 297.49 L998.92 294.23 L998.67 290.97 L998.38 287.71 L998.07 284.45 L997.73 281.19 L997.36 277.93 L996.97 274.67 L996.54 271.42 L996.08 268.16 L995.6 264.9 L995.08 261.64 L994.54 258.38 L993.97 255.12 L993.38 251.86 L992.75 248.6 L992.1 245.34 L991.42 242.08 L990.71 238.83 L989.98 235.57 L989.21 232.31 L988.43 229.05 L987.61 225.79 L986.77 222.53 L985.91 219.27 L985.01 216.01 L984.1 212.75 L983.16 209.49 L982.19 206.24 L981.2 202.98 L980.18 199.72 L979.14 196.46 L978.08 193.2 L977 189.94 L975.89 186.68 L974.76 183.42 L973.6 180.16 L972.43 176.9 L971.23 173.65 L970.02 170.39 L968.78 167.13 L967.52 163.87 L966.24 160.61 L964.95 157.35 L963.63 154.09 L962.29 150.83 L960.94 147.57 L959.57 144.31 L958.18 141.06 L956.77 137.8 L955.35 134.54 L953.91 131.28 L952.46 128.02 L950.99 124.76 L949.5 121.5 L948 118.24 L946.49 114.98 L944.96 111.72 L943.42 108.47 L941.87 105.21 L940.3 101.95 L938.73 98.69 L937.14 95.43 L935.54 92.17 L933.93 88.91 L932.31 85.65 L930.69 82.39 L929.05 79.13 L927.4 75.88 L925.75 72.62 L924.09 69.36 L922.43 66.1 L920.76 62.84 L919.08 59.58 L917.39 56.32 L915.71 53.06 L914.02 49.8 L912.32 46.54 L910.62 43.29 L908.92 40.03 L907.22 36.77 L905.51 33.51 L903.81 30.25 L902.1 26.99"/>
<path d="M902.1 613.61 L902.95 610.35 L903.81 607.09 L904.66 603.83 L905.51 600.57 L906.36 597.32 L907.21 594.06 L908.06 590.8 L908.9 587.54 L909.75 584.28 L910.59 581.02 L911.43 577.76 L912.26 574.5 L913.1 571.24 L913.93 567.98 L914.75 564.73 L915.57 561.47 L916.39 558.21 L917.21 554.95 L918.02 551.69 L918.82 548.43 L919.62 545.17 L920.41 541.91 L921.2 538.65 L921.98 535.39 L922.76 532.13 L923.53 528.88 L924.29 525.62 L925.05 522.36 L925.8 519.1 L926.54 515.84 L927.28 512.58 L928.01 509.32 L928.72 506.06 L929.44 502.8 L930.14 499.55 L930.83 496.29 L931.52 493.03 L932.2 489.77 L932.86 486.51 L933.52 483.25 L934.17 479.99 L934.81 476.73 L935.44 473.47 L936.06 470.21 L936.67 466.96 L937.26 463.7 L937.85 460.44 L938.43 457.18 L938.99 453.92 L939.55 450.66 L940.09 447.4 L940.62 444.14 L941.14 440.88 L941.65 437.62 L942.14 434.37 L942.63 431.11 L943.1 427.85 L943.56 424.59 L944 421.33 L944.44 418.07 L944.86 414.81 L945.26 411.55 L945.66 408.29 L946.04 405.03 L946.4 401.77 L946.76 398.52 L947.1 395.26 L947.43 392 L947.74 388.74 L948.04 385.48 L948.32 382.22 L948.59 378.96 L948.85 375.7 L949.09 372.44 L949.32 369.19 L949.53 365.93 L949.73 362.67 L949.92 359.41 L950.09 356.15 L950.24 352.89 L950.38 349.63 L950.51 346.37 L950.62 343.11 L950.72 339.85 L950.8 336.6 L950.87 333.34 L950.92 330.08 L950.96 326.82 L950.98 323.56 L950.99 320.3 L950.98 317.04 L950.96 313.78 L950.92 310.52 L950.87 307.26 L950.8 304 L950.72 300.75 L950.62 297.49 L950.51 294.23 L950.38 290.97 L950.24 287.71 L950.09 284.45 L949.92 281.19 L949.73 277.93 L949.53 274.67 L949.32 271.42 L949.09 268.16 L948.85 264.9 L948.59 261.64 L948.32 258.38 L948.04 255.12 L947.74 251.86 L947.43 248.6 L947.1 245.34 L946.76 242.08 L946.4 238.83 L946.04 235.57 L945.66 232.31 L945.26 229.05 L944.86 225.79 L944.44 222.53 L944 219.27 L943.56 216.01 L943.1 212.75 L942.63 209.49 L942.14 206.24 L941.65 202.98 L941.14 199.72 L940.62 196.46 L940.09 193.2 L939.55 189.94 L938.99 186.68 L938.43 183.42 L937.85 180.16 L937.26 176.9 L936.67 173.65 L936.06 170.39 L935.44 167.13 L934.81 163.87 L934.17 160.61 L933.52 157.35 L932.86 154.09 L932.2 150.83 L931.52 147.57 L930.83 144.31 L930.14 141.06 L929.44 137.8 L928.72 134.54 L928.01 131.28 L927.28 128.02 L926.54 124.76 L925.8 121.5 L925.05 118.24 L924.29 114.98 L923.53 111.72 L922.76 108.47 L921.98 105.21 L921.2 101.95 L920.41 98.69 L919.62 95.43 L918.82 92.17 L918.02 88.91 L917.21 85.65 L916.39 82.39 L915.57 79.13 L914.75 75.88 L913.93 72.62 L913.1 69.36 L912.26 66.1 L911.43 62.84 L910.59 59.58 L909.75 56.32 L908.9 53.06 L908.06 49.8 L907.21 46.54 L906.36 43.29 L905.51 40.03 L904.66 36.77 L903.81 33.51 L902.95 30.25 L902.1 26.99"/>
<path d="M902.1 613.61 L902.1 610.35 L902.1 607.09 L902.1 603.83 L902.1 600.57 L902.1 597.32 L902.1 594.06 L902.1 590.8 L902.1 587.54 L902.1 584.28 L902.1 581.02 L902.1 577.76 L902.1 574.5 L902.1 571.24 L902.1 567.98 L902.1 564.73 L902.1 561.47 L902.1 558.21 L902.1 554.95 L902.1 551.69 L902.1 548.43 L902.1 545.17 L902.1 541.91 L902.1 538.65 L902.1 535.39 L902.1 532.13 L902.1 528.88 L902.1 525.62 L902.1 522.36 L902.1 519.1 L902.1 515.84 L902.1 512.58 L902.1 509.32 L902.1 506.06 L902.1 502.8 L902.1 499.55 L902.1 496.29 L902.1 493.03 L902.1 489.77 L902.1 486.51 L902.1 483.25 L902.1 479.99 L902.1 476.73 L902.1 473.47 L902.1 470.21 L902.1 466.96 L902.1 463.7 L902.1 460.44 L902.1 457.18 L902.1 453.92 L902.1 450.66 L902.1 447.4 L902.1 444.14 L902.1 440.88 L902.1 437.62 L902.1 434.37 L902.1 431.11 L902.1 427.85 L902.1 424.59 L902.1 421.33 L902.1 418.07 L902.1 414.81 L902.1 411.55 L902.1 408.29 L902.1 405.03 L902.1 401.77 L902.1 398.52 L902.1 395.26 L902.1 392 L902.1 388.74 L902.1 385.48 L902.1 382.22 L902.1 378.96 L902.1 375.7 L902.1 372.44 L902.1 369.19 L902.1 365.93 L902.1 362.67 L902.1 359.41 L902.1 356.15 L902.1 352.89 L902.1 349.63 L902.1 346.37 L902.1 343.11 L902.1 339.85 L902.1 336.6 L902.1 333.34 L902.1 330.08 L902.1 326.82 L902.1 323.56 L902.1 320.3 L902.1 317.04 L902.1 313.78 L902.1 310.52 L902.1 307.26 L902.1 304 L902.1 300.75 L902.1 297.49 L902.1 294.23 L902.1 290.97 L902.1 287.71 L902.1 284.45 L902.1 281.19 L902.1 277.93 L902.1 274.67 L902.1 271.42 L902.1 268.16 L902.1 264.9 L902.1 261.64 L902.1 258.38 L902.1 255.12 L902.1 251.86 L902.1 248.6 L902.1 245.34 L902.1 242.08 L902.1 238.83 L902.1 235.57 L902.1 232.31 L902.1 229.05 L902.1 225.79 L902.1 222.53 L902.1 219.27 L902.1 216.01 L902.1 212.75 L902.1 209.49 L902.1 206.24 L902.1 202.98 L902.1 199.72 L902.1 196.46 L902.1 193.2 L902.1 189.94 L902.1 186.68 L902.1 183.42 L902.1 180.16 L902.1 176.9 L902.1 173.65 L902.1 170.39 L902.1 167.13 L902.1 163.87 L902.1 160.61 L902.1 157.35 L902.1 154.09 L902.1 150.83 L902.1 147.57 L902.1 144.31 L902.1 141.06 L902.1 137.8 L902.1 134.54 L902.1 131.28 L902.1 128.02 L902.1 124.76 L902.1 121.5 L902.1 118.24 L902.1 114.98 L902.1 111.72 L902.1 108.47 L902.1 105.21 L902.1 101.95 L902.1 98.69 L902.1 95.43 L902.1 92.17 L902.1 88.91 L902.1 85.65 L902.1 82.39 L902.1 79.13 L902.1 75.88 L902.1 72.62 L902.1 69.36 L902.1 66.1 L902.1 62.84 L902.1 59.58 L902.1 56.32 L902.1 53.06 L902.1 49.8 L902.1 46.54 L902.1 43.29 L902.1 40.03 L902.1 36.77 L902.1 33.51 L902.1 30.25 L902.1 26.99"/>
<path d="M902.1 613.61 L901.25 610.35 L900.39 607.09 L899.54 603.83 L898.69 600.57 L897.84 597.32 L896.99 594.06 L896.14 590.8 L895.3 587.54 L894.45 584.28 L893.61 581.02 L892.77 577.76 L891.94 574.5 L891.1 571.24 L890.27 567.98 L889.45 564.73 L888.63 561.47 L887.81 558.21 L886.99 554.95 L886.18 551.69 L885.38 548.43 L884.58 545.17 L883.79 541.91 L883 538.65 L882.22 535.39 L881.44 532.13 L880.67 528.88 L879.91 525.62 L879.15 522.36 L878.4 519.1 L877.66 515.84 L876.92 512.58 L876.19 509.32 L875.48 506.06 L874.76 502.8 L874.06 499.55 L873.37 496.29 L872.68 493.03 L872 489.77 L871.34 486.51 L870.68 483.25 L870.03 479.99 L869.39 476.73 L868.76 473.47 L868.14 470.21 L867.53 466.96 L866.94 463.7 L866.35 460.44 L865.77 457.18 L865.21 453.92 L864.65 450.66 L864.11 447.4 L863.58 444.14 L863.06 440.88 L862.55 437.62 L862.06 434.37 L861.57 431.11 L861.1 427.85 L860.64 424.59 L860.2 421.33 L859.76 418.07 L859.34 414.81 L858.94 411.55 L858.54 408.29 L858.16 405.03 L857.8 401.77 L857.44 398.52 L857.1 395.26 L856.77 392 L856.46 388.74 L856.16 385.48 L855.88 382.22 L855.61 378.96 L855.35 375.7 L855.11 372.44 L854.88 369.19 L854.67 365.93 L854.47 362.67 L854.28 359.41 L854.11 356.15 L853.96 352.89 L853.82 349.63 L853.69 346.37 L853.58 343.11 L853.48 339.85 L853.4 336.6 L853.33 333.34 L853.28 330.08 L853.24 326.82 L853.22 323.56 L853.22 320.3 L853.22 317.04 L853.24 313.78 L853.28 310.52 L853.33 307.26 L853.4 304 L853.48 300.75 L853.58 297.49 L853.69 294.23 L853.82 290.97 L853.96 287.71 L854.11 284.45 L854.28 281.19 L854.47 277.93 L854.67 274.67 L854.88 271.42 L855.11 268.16 L855.35 264.9 L855.61 261.64 L855.88 258.38 L856.16 255.12 L856.46 251.86 L856.77 248.6 L857.1 245.34 L857.44 242.08 L857.8 238.83 L858.16 235.57 L858.54 232.31 L858.94 229.05 L859.34 225.79 L859.76 222.53 L860.2 219.27 L860.64 216.01 L861.1 212.75 L861.57 209.49 L862.06 206.24 L862.55 202.98 L863.06 199.72 L863.58 196.46 L864.11 193.2 L864.65 189.94 L865.21 186.68 L865.77 183.42 L866.35 180.16 L866.94 176.9 L867.53 173.65 L868.14 170.39 L868.76 167.13 L869.39 163.87 L870.03 160.61 L870.68 157.35 L871.34 154.09 L872 150.83 L872.68 147.57 L873.37 144.31 L874.06 141.06 L874.76 137.8 L875.48 134.54 L876.19 131.28 L876.92 128.02 L877.66 124.76 L878.4 121.5 L879.15 118.24 L879.91 114.98 L880.67 111.72 L881.44 108.47 L882.22 105.21 L883 101.95 L883.79 98.69 L884.58 95.43 L885.38 92.17 L886.18 88.91 L886.99 85.65 L887.81 82.39 L888.63 79.13 L889.45 75.88 L890.27 72.62 L891.1 69.36 L891.94 66.1 L892.77 62.84 L893.61 59.58 L894.45 56.32 L895.3 53.06 L896.14 49.8 L896.99 46.54 L897.84 43.29 L898.69 40.03 L899.54 36.77 L900.39 33.51 L901.25 30.25 L902.1 26.99"/>
<path d="M902.1 613.61 L900.39 610.35 L898.69 607.09 L896.98 603.83 L895.28 600.57 L893.58 597.32 L891.88 594.06 L890.18 590.8 L888.49 587.54 L886.81 584.28 L885.12 581.02 L883.44 577.76 L881.77 574.5 L880.11 571.24 L878.45 567.98 L876.8 564.73 L875.15 561.47 L873.51 558.21 L871.89 554.95 L870.27 551.69 L868.66 548.43 L867.06 545.17 L865.47 541.91 L863.9 538.65 L862.33 535.39 L860.78 532.13 L859.24 528.88 L857.71 525.62 L856.2 522.36 L854.7 519.1 L853.22 515.84 L851.74 512.58 L850.29 509.32 L848.85 506.06 L847.43 502.8 L846.02 499.55 L844.63 496.29 L843.26 493.03 L841.91 489.77 L840.57 486.51 L839.25 483.25 L837.96 479.99 L836.68 476.73 L835.42 473.47 L834.18 470.21 L832.97 466.96 L831.77 463.7 L830.6 460.44 L829.44 457.18 L828.31 453.92 L827.2 450.66 L826.12 447.4 L825.06 444.14 L824.02 440.88 L823 437.62 L822.01 434.37 L821.04 431.11 L820.1 427.85 L819.19 424.59 L818.29 421.33 L817.43 418.07 L816.59 414.81 L815.77 411.55 L814.99 408.29 L814.22 405.03 L813.49 401.77 L812.78 398.52 L812.1 395.26 L811.45 392 L810.82 388.74 L810.23 385.48 L809.66 382.22 L809.12 378.96 L808.6 375.7 L808.12 372.44 L807.66 369.19 L807.23 365.93 L806.84 362.67 L806.47 359.41 L806.13 356.15 L805.82 352.89 L805.53 349.63 L805.28 346.37 L805.06 343.11 L804.87 339.85 L804.7 336.6 L804.57 333.34 L804.46 330.08 L804.39 326.82 L804.34 323.56 L804.33 320.3 L804.34 317.04 L804.39 313.78 L804.46 310.52 L804.57 307.26 L804.7 304 L804.87 300.75 L805.06 297.49 L805.28 294.23 L805.53 290.97 L805.82 287.71 L806.13 284.45 L806.47 281.19 L806.84 277.93 L807.23 274.67 L807.66 271.42 L808.12 268.16 L808.6 264.9 L809.12 261.64 L809.66 258.38 L810.23 255.12 L810.82 251.86 L811.45 248.6 L812.1 245.34 L812.78 242.08 L813.49 238.83 L814.22 235.57 L814.99 232.31 L815.77 229.05 L816.59 225.79 L817.43 222.53 L818.29 219.27 L819.19 216.01 L820.1 212.75 L821.04 209.49 L822.01 206.24 L823 202.98 L824.02 199.72 L825.06 196.46 L826.12 193.2 L827.2 189.94 L828.31 186.68 L829.44 183.42 L830.6 180.16 L831.77 176.9 L832.97 173.65 L834.18 170.39 L835.42 167.13 L836.68 163.87 L837.96 160.61 L839.25 157.35 L840.57 154.09 L841.91 150.83 L843.26 147.57 L844.63 144.31 L846.02 141.06 L847.43 137.8 L848.85 134.54 L850.29 131.28 L851.74 128.02 L853.22 124.76 L854.7 121.5 L856.2 118.24 L857.71 114.98 L859.24 111.72 L860.78 108.47 L862.33 105.21 L863.9 101.95 L865.47 98.69 L867.06 95.43 L868.66 92.17 L870.27 88.91 L871.89 85.65 L873.51 82.39 L875.15 79.13 L876.8 75.88 L878.45 72.62 L880.11 69.36 L881.77 66.1 L883.44 62.84 L885.12 59.58 L886.81 56.32 L888.49 53.06 L890.18 49.8 L891.88 46.54 L893.58 43.29 L895.28 40.03 L896.98 36.77 L898.69 33.51 L900.39 30.25 L902.1 26.99"/>
<path d="M902.1 613.61 L899.54 610.35 L896.98 607.09 L894.42 603.83 L891.87 600.57 L889.32 597.32 L886.77 594.06 L884.23 590.8 L881.69 587.54 L879.16 584.28 L876.63 581.02 L874.12 577.76 L871.61 574.5 L869.11 571.24 L866.62 567.98 L864.14 564.73 L861.68 561.47 L859.22 558.21 L856.78 554.95 L854.35 551.69 L851.94 548.43 L849.54 545.17 L847.16 541.91 L844.8 538.65 L842.45 535.39 L840.12 532.13 L837.81 528.88 L835.52 525.62 L833.25 522.36 L831 519.1 L828.77 515.84 L826.57 512.58 L824.38 509.32 L822.23 506.06 L820.09 502.8 L817.98 499.55 L815.9 496.29 L813.84 493.03 L811.81 489.77 L809.81 486.51 L807.83 483.25 L805.89 479.99 L803.97 476.73 L802.08 473.47 L800.22 470.21 L798.4 466.96 L796.61 463.7 L794.84 460.44 L793.11 457.18 L791.42 453.92 L789.76 450.66 L788.13 447.4 L786.53 444.14 L784.98 440.88 L783.45 437.62 L781.97 434.37 L780.52 431.11 L779.1 427.85 L777.73 424.59 L776.39 421.33 L775.09 418.07 L773.83 414.81 L772.61 411.55 L771.43 408.29 L770.29 405.03 L769.19 401.77 L768.12 398.52 L767.1 395.26 L766.12 392 L765.19 388.74 L764.29 385.48 L763.43 382.22 L762.62 378.96 L761.85 375.7 L761.13 372.44 L760.44 369.19 L759.8 365.93 L759.2 362.67 L758.65 359.41 L758.14 356.15 L757.67 352.89 L757.25 349.63 L756.87 346.37 L756.54 343.11 L756.25 339.85 L756 336.6 L755.8 333.34 L755.65 330.08 L755.53 326.82 L755.47 323.56 L755.45 320.3 L755.47 317.04 L755.53 313.78 L755.65 310.52 L755.8 307.26 L756 304 L756.25 300.75 L756.54 297.49 L756.87 294.23 L757.25 290.97 L757.67 287.71 L758.14 284.45 L758.65 281.19 L759.2 277.93 L759.8 274.67 L760.44 271.42 L761.13 268.16 L761.85 264.9 L762.62 261.64 L763.43 258.38 L764.29 255.12 L765.19 251.86 L766.12 248.6 L767.1 245.34 L768.12 242.08 L769.19 238.83 L770.29 235.57 L771.43 232.31 L772.61 229.05 L773.83 225.79 L775.09 222.53 L776.39 219.27 L777.73 216.01 L779.1 212.75 L780.52 209.49 L781.97 206.24 L783.45 202.98 L784.98 199.72 L786.53 196.46 L788.13 193.2 L789.76 189.94 L791.42 186.68 L793.11 183.42 L794.84 180.16 L796.61 176.9 L798.4 173.65 L800.22 170.39 L802.08 167.13 L803.97 163.87 L805.89 160.61 L807.83 157.35 L809.81 154.09 L811.81 150.83 L813.84 147.57 L815.9 144.31 L817.98 141.06 L820.09 137.8 L822.23 134.54 L824.38 131.28 L826.57 128.02 L828.77 124.76 L831 121.5 L833.25 118.24 L835.52 114.98 L837.81 111.72 L840.12 108.47 L842.45 105.21 L844.8 101.95 L847.16 98.69 L849.54 95.43 L851.94 92.17 L854.35 88.91 L856.78 85.65 L859.22 82.39 L861.68 79.13 L864.14 75.88 L866.62 72.62 L869.11 69.36 L871.61 66.1 L874.12 62.84 L876.63 59.58 L879.16 56.32 L881.69 53.06 L884.23 49.8 L886.77 46.54 L889.32 43.29 L891.87 40.03 L894.42 36.77 L896.98 33.51 L899.54 30.25 L902.1 26.99"/>
<path d="M902.1 613.61 L898.69 610.35 L895.28 607.09 L891.87 603.83 L888.46 600.57 L885.06 597.32 L881.66 594.06 L878.27 590.8 L874.89 587.54 L871.51 584.28 L868.14 581.02 L864.79 577.76 L861.44 574.5 L858.11 571.24 L854.79 567.98 L851.49 564.73 L848.2 561.47 L844.93 558.21 L841.67 554.95 L838.44 551.69 L835.22 548.43 L832.02 545.17 L828.85 541.91 L825.7 538.65 L822.57 535.39 L819.46 532.13 L816.38 528.88 L813.33 525.62 L810.3 522.36 L807.3 519.1 L804.33 515.84 L801.39 512.58 L798.48 509.32 L795.6 506.06 L792.76 502.8 L789.94 499.55 L787.16 496.29 L784.42 493.03 L781.71 489.77 L779.04 486.51 L776.41 483.25 L773.81 479.99 L771.26 476.73 L768.74 473.47 L766.27 470.21 L763.83 466.96 L761.44 463.7 L759.09 460.44 L756.79 457.18 L754.52 453.92 L752.31 450.66 L750.14 447.4 L748.01 444.14 L745.93 440.88 L743.9 437.62 L741.92 434.37 L739.99 431.11 L738.11 427.85 L736.27 424.59 L734.49 421.33 L732.76 418.07 L731.08 414.81 L729.45 411.55 L727.87 408.29 L726.35 405.03 L724.88 401.77 L723.47 398.52 L722.1 395.26 L720.8 392 L719.55 388.74 L718.35 385.48 L717.21 382.22 L716.13 378.96 L715.1 375.7 L714.13 372.44 L713.22 369.19 L712.37 365.93 L711.57 362.67 L710.83 359.41 L710.15 356.15 L709.53 352.89 L708.97 349.63 L708.46 346.37 L708.02 343.11 L707.63 339.85 L707.3 336.6 L707.04 333.34 L706.83 330.08 L706.68 326.82 L706.59 323.56 L706.56 320.3 L706.59 317.04 L706.68 313.78 L706.83 310.52 L707.04 307.26 L707.3 304 L707.63 300.75 L708.02 297.49 L708.46 294.23 L708.97 290.97 L709.53 287.71 L710.15 284.45 L710.83 281.19 L711.57 277.93 L712.37 274.67 L713.22 271.42 L714.13 268.16 L715.1 264.9 L716.13 261.64 L717.21 258.38 L718.35 255.12 L719.55 251.86 L720.8 248.6 L722.1 245.34 L723.47 242.08 L724.88 238.83 L726.35 235.57 L727.87 232.31 L729.45 229.05 L731.08 225.79 L732.76 222.53 L734.49 219.27 L736.27 216.01 L738.11 212.75 L739.99 209.49 L741.92 206.24 L743.9 202.98 L745.93 199.72 L748.01 196.46 L750.14 193.2 L752.31 189.94 L754.52 186.68 L756.79 183.42 L759.09 180.16 L761.44 176.9 L763.83 173.65 L766.27 170.39 L768.74 167.13 L771.26 163.87 L773.81 160.61 L776.41 157.35 L779.04 154.09 L781.71 150.83 L784.42 147.57 L787.16 144.31 L789.94 141.06 L792.76 137.8 L795.6 134.54 L798.48 131.28 L801.39 128.02 L804.33 124.76 L807.3 121.5 L810.3 118.24 L813.33 114.98 L816.38 111.72 L819.46 108.47 L822.57 105.21 L825.7 101.95 L828.85 98.69 L832.02 95.43 L835.22 92.17 L838.44 88.91 L841.67 85.65 L844.93 82.39 L848.2 79.13 L851.49 75.88 L854.79 72.62 L858.11 69.36 L861.44 66.1 L864.79 62.84 L868.14 59.58 L871.51 56.32 L874.89 53.06 L878.27 49.8 L881.66 46.54 L885.06 43.29 L888.46 40.03 L891.87 36.77 L895.28 33.51 L898.69 30.25 L902.1 26.99"/>
<path d="M902.1 613.61 L897.83 610.35 L893.57 607.09 L889.31 603.83 L885.05 600.57 L880.8 597.32 L876.55 594.06 L872.31 590.8 L868.08 587.54 L863.86 584.28 L859.66 581.02 L855.46 577.76 L851.28 574.5 L847.12 571.24 L842.97 567.98 L838.84 564.73 L834.73 561.47 L830.64 558.21 L826.57 554.95 L822.52 551.69 L818.5 548.43 L814.51 545.17 L810.54 541.91 L806.6 538.65 L802.68 535.39 L798.8 532.13 L794.95 528.88 L791.13 525.62 L787.35 522.36 L783.6 519.1 L779.89 515.84 L776.21 512.58 L772.57 509.32 L768.98 506.06 L765.42 502.8 L761.9 499.55 L758.43 496.29 L755 493.03 L751.62 489.77 L748.28 486.51 L744.99 483.25 L741.74 479.99 L738.55 476.73 L735.4 473.47 L732.31 470.21 L729.27 466.96 L726.28 463.7 L723.34 460.44 L720.46 457.18 L717.63 453.92 L714.86 450.66 L712.15 447.4 L709.49 444.14 L706.89 440.88 L704.36 437.62 L701.88 434.37 L699.46 431.11 L697.11 427.85 L694.82 424.59 L692.59 421.33 L690.42 418.07 L688.32 414.81 L686.29 411.55 L684.32 408.29 L682.41 405.03 L680.58 401.77 L678.81 398.52 L677.11 395.26 L675.47 392 L673.91 388.74 L672.42 385.48 L670.99 382.22 L669.64 378.96 L668.36 375.7 L667.14 372.44 L666 369.19 L664.94 365.93 L663.94 362.67 L663.02 359.41 L662.17 356.15 L661.39 352.89 L660.68 349.63 L660.05 346.37 L659.5 343.11 L659.01 339.85 L658.61 336.6 L658.27 333.34 L658.01 330.08 L657.82 326.82 L657.71 323.56 L657.68 320.3 L657.71 317.04 L657.82 313.78 L658.01 310.52 L658.27 307.26 L658.61 304 L659.01 300.75 L659.5 297.49 L660.05 294.23 L660.68 290.97 L661.39 287.71 L662.17 284.45 L663.02 281.19 L663.94 277.93 L664.94 274.67 L666 271.42 L667.14 268.16 L668.36 264.9 L669.64 261.64 L670.99 258.38 L672.42 255.12 L673.91 251.86 L675.47 248.6 L677.11 245.34 L678.81 242.08 L680.58 238.83 L682.41 235.57 L684.32 232.31 L686.29 229.05 L688.32 225.79 L690.42 222.53 L692.59 219.27 L694.82 216.01 L697.11 212.75 L699.46 209.49 L701.88 206.24 L704.36 202.98 L706.89 199.72 L709.49 196.46 L712.15 193.2 L714.86 189.94 L717.63 186.68 L720.46 183.42 L723.34 180.16 L726.28 176.9 L729.27 173.65 L732.31 170.39 L735.4 167.13 L738.55 163.87 L741.74 160.61 L744.99 157.35 L748.28 154.09 L751.62 150.83 L755 147.57 L758.43 144.31 L761.9 141.06 L765.42 137.8 L768.98 134.54 L772.57 131.28 L776.21 128.02 L779.89 124.76 L783.6 121.5 L787.35 118.24 L791.13 114.98 L794.95 111.72 L798.8 108.47 L802.68 105.21 L806.6 101.95 L810.54 98.69 L814.51 95.43 L818.5 92.17 L822.52 88.91 L826.57 85.65 L830.64 82.39 L834.73 79.13 L838.84 75.88 L842.97 72.62 L847.12 69.36 L851.28 66.1 L855.46 62.84 L859.66 59.58 L863.86 56.32 L868.08 53.06 L872.31 49.8 L876.55 46.54 L880.8 43.29 L885.05 40.03 L889.31 36.77 L893.57 33.51 L897.83 30.25 L902.1 26.99"/>
<path d="M902.1 613.61 L896.98 610.35 L891.86 607.09 L886.75 603.83 L881.64 600.57 L876.54 597.32 L871.44 594.06 L866.35 590.8 L861.28 587.54 L856.22 584.28 L851.17 581.02 L846.13 577.76 L841.12 574.5 L836.12 571.24 L831.14 567.98 L826.19 564.73 L821.25 561.47 L816.34 558.21 L811.46 554.95 L806.61 551.69 L801.78 548.43 L796.99 545.17 L792.22 541.91 L787.49 538.65 L782.8 535.39 L778.14 532.13 L773.52 528.88 L768.94 525.62 L764.4 522.36 L759.9 519.1 L755.44 515.84 L751.03 512.58 L746.67 509.32 L742.35 506.06 L738.08 502.8 L733.86 499.55 L729.7 496.29 L725.58 493.03 L721.52 489.77 L717.51 486.51 L713.56 483.25 L709.67 479.99 L705.84 476.73 L702.06 473.47 L698.35 470.21 L694.7 466.96 L691.11 463.7 L687.59 460.44 L684.13 457.18 L680.74 453.92 L677.41 450.66 L674.16 447.4 L670.97 444.14 L667.85 440.88 L664.81 437.62 L661.83 434.37 L658.93 431.11 L656.11 427.85 L653.36 424.59 L650.68 421.33 L648.09 418.07 L645.57 414.81 L643.12 411.55 L640.76 408.29 L638.47 405.03 L636.27 401.77 L634.15 398.52 L632.11 395.26 L630.15 392 L628.27 388.74 L626.48 385.48 L624.77 382.22 L623.15 378.96 L621.61 375.7 L620.15 372.44 L618.78 369.19 L617.5 365.93 L616.31 362.67 L615.2 359.41 L614.18 356.15 L613.25 352.89 L612.4 349.63 L611.64 346.37 L610.98 343.11 L610.4 339.85 L609.91 336.6 L609.5 333.34 L609.19 330.08 L608.97 326.82 L608.83 323.56 L608.79 320.3 L608.83 317.04 L608.97 313.78 L609.19 310.52 L609.5 307.26 L609.91 304 L610.4 300.75 L610.98 297.49 L611.64 294.23 L612.4 290.97 L613.25 287.71 L614.18 284.45 L615.2 281.19 L616.31 277.93 L617.5 274.67 L618.78 271.42 L620.15 268.16 L621.61 264.9 L623.15 261.64 L624.77 258.38 L626.48 255.12 L628.27 251.86 L630.15 248.6 L632.11 245.34 L634.15 242.08 L636.27 238.83 L638.47 235.57 L640.76 232.31 L643.12 229.05 L645.57 225.79 L648.09 222.53 L650.68 219.27 L653.36 216.01 L656.11 212.75 L658.93 209.49 L661.83 206.24 L664.81 202.98 L667.85 199.72 L670.97 196.46 L674.16 193.2 L677.41 189.94 L680.74 186.68 L684.13 183.42 L687.59 180.16 L691.11 176.9 L694.7 173.65 L698.35 170.39 L702.06 167.13 L705.84 163.87 L709.67 160.61 L713.56 157.35 L717.51 154.09 L721.52 150.83 L725.58 147.57 L729.7 144.31 L733.86 141.06 L738.08 137.8 L742.35 134.54 L746.67 131.28 L751.03 128.02 L755.44 124.76 L759.9 121.5 L764.4 118.24 L768.94 114.98 L773.52 111.72 L778.14 108.47 L782.8 105.21 L787.49 101.95 L792.22 98.69 L796.99 95.43 L801.78 92.17 L806.61 88.91 L811.46 85.65 L816.34 82.39 L821.25 79.13 L826.19 75.88 L831.14 72.62 L836.12 69.36 L841.12 66.1 L846.13 62.84 L851.17 59.58 L856.22 56.32 L861.28 53.06 L866.35 49.8 L871.44 46.54 L876.54 43.29 L881.64 40.03 L886.75 36.77 L891.86 33.51 L896.98 30.25 L902.1 26.99"/>
<path d="M902.1 613.61 L896.13 610.35 L890.16 607.09 L884.19 603.83 L878.23 600.57 L872.28 597.32 L866.33 594.06 L860.4 590.8 L854.48 587.54 L848.57 584.28 L842.68 581.02 L836.81 577.76 L830.95 574.5 L825.12 571.24 L819.32 567.98 L813.53 564.73 L807.78 561.47 L802.05 558.21 L796.36 554.95 L790.69 551.69 L785.06 548.43 L779.47 545.17 L773.91 541.91 L768.39 538.65 L762.92 535.39 L757.48 532.13 L752.09 528.88 L746.75 525.62 L741.45 522.36 L736.2 519.1 L731 515.84 L725.86 512.58 L720.76 509.32 L715.73 506.06 L710.75 502.8 L705.83 499.55 L700.96 496.29 L696.16 493.03 L691.42 489.77 L686.75 486.51 L682.14 483.25 L677.6 479.99 L673.13 476.73 L668.72 473.47 L664.39 470.21 L660.13 466.96 L655.95 463.7 L651.83 460.44 L647.8 457.18 L643.84 453.92 L639.96 450.66 L636.16 447.4 L632.45 444.14 L628.81 440.88 L625.26 437.62 L621.79 434.37 L618.41 431.11 L615.11 427.85 L611.9 424.59 L608.78 421.33 L605.75 418.07 L602.81 414.81 L599.96 411.55 L597.2 408.29 L594.54 405.03 L591.97 401.77 L589.49 398.52 L587.11 395.26 L584.82 392 L582.63 388.74 L580.54 385.48 L578.55 382.22 L576.65 378.96 L574.86 375.7 L573.16 372.44 L571.57 369.19 L570.07 365.93 L568.68 362.67 L567.38 359.41 L566.19 356.15 L565.1 352.89 L564.12 349.63 L563.24 346.37 L562.46 343.11 L561.78 339.85 L561.21 336.6 L560.74 333.34 L560.37 330.08 L560.11 326.82 L559.96 323.56 L559.9 320.3 L559.96 317.04 L560.11 313.78 L560.37 310.52 L560.74 307.26 L561.21 304 L561.78 300.75 L562.46 297.49 L563.24 294.23 L564.12 290.97 L565.1 287.71 L566.19 284.45 L567.38 281.19 L568.68 277.93 L570.07 274.67 L571.57 271.42 L573.16 268.16 L574.86 264.9 L576.65 261.64 L578.55 258.38 L580.54 255.12 L582.63 251.86 L584.82 248.6 L587.11 245.34 L589.49 242.08 L591.97 238.83 L594.54 235.57 L597.2 232.31 L599.96 229.05 L602.81 225.79 L605.75 222.53 L608.78 219.27 L611.9 216.01 L615.11 212.75 L618.41 209.49 L621.79 206.24 L625.26 202.98 L628.81 199.72 L632.45 196.46 L636.16 193.2 L639.96 189.94 L643.84 186.68 L647.8 183.42 L651.83 180.16 L655.95 176.9 L660.13 173.65 L664.39 170.39 L668.72 167.13 L673.13 163.87 L677.6 160.61 L682.14 157.35 L686.75 154.09 L691.42 150.83 L696.16 147.57 L700.96 144.31 L705.83 141.06 L710.75 137.8 L715.73 134.54 L720.76 131.28 L725.86 128.02 L731 124.76 L736.2 121.5 L741.45 118.24 L746.75 114.98 L752.09 111.72 L757.48 108.47 L762.92 105.21 L768.39 101.95 L773.91 98.69 L779.47 95.43 L785.06 92.17 L790.69 88.91 L796.36 85.65 L802.05 82.39 L807.78 79.13 L813.53 75.88 L819.32 72.62 L825.12 69.36 L830.95 66.1 L836.81 62.84 L842.68 59.58 L848.57 56.32 L854.48 53.06 L860.4 49.8 L866.33 46.54 L872.28 43.29 L878.23 40.03 L884.19 36.77 L890.16 33.51 L896.13 30.25 L902.1 26.99"/>
<path d="M902.1 613.61 L895.27 610.35 L888.45 607.09 L881.63 603.83 L874.82 600.57 L868.02 597.32 L861.22 594.06 L854.44 590.8 L847.67 587.54 L840.92 584.28 L834.19 581.02 L827.48 577.76 L820.79 574.5 L814.13 571.24 L807.49 567.98 L800.88 564.73 L794.3 561.47 L787.76 558.21 L781.25 554.95 L774.78 551.69 L768.34 548.43 L761.95 545.17 L755.6 541.91 L749.29 538.65 L743.03 535.39 L736.82 532.13 L730.66 528.88 L724.55 525.62 L718.5 522.36 L712.5 519.1 L706.56 515.84 L700.68 512.58 L694.86 509.32 L689.1 506.06 L683.41 502.8 L677.79 499.55 L672.23 496.29 L666.74 493.03 L661.33 489.77 L655.99 486.51 L650.72 483.25 L645.53 479.99 L640.42 476.73 L635.38 473.47 L630.43 470.21 L625.56 466.96 L620.78 463.7 L616.08 460.44 L611.47 457.18 L606.95 453.92 L602.52 450.66 L598.17 447.4 L593.92 444.14 L589.77 440.88 L585.71 437.62 L581.75 434.37 L577.88 431.11 L574.11 427.85 L570.45 424.59 L566.88 421.33 L563.41 418.07 L560.05 414.81 L556.8 411.55 L553.65 408.29 L550.6 405.03 L547.66 401.77 L544.83 398.52 L542.11 395.26 L539.5 392 L537 388.74 L534.61 385.48 L532.33 382.22 L530.16 378.96 L528.11 375.7 L526.17 372.44 L524.35 369.19 L522.64 365.93 L521.04 362.67 L519.57 359.41 L518.21 356.15 L516.96 352.89 L515.83 349.63 L514.83 346.37 L513.94 343.11 L513.16 339.85 L512.51 336.6 L511.97 333.34 L511.56 330.08 L511.26 326.82 L511.08 323.56 L511.02 320.3 L511.08 317.04 L511.26 313.78 L511.56 310.52 L511.97 307.26 L512.51 304 L513.16 300.75 L513.94 297.49 L514.83 294.23 L515.83 290.97 L516.96 287.71 L518.21 284.45 L519.57 281.19 L521.04 277.93 L522.64 274.67 L524.35 271.42 L526.17 268.16 L528.11 264.9 L530.16 261.64 L532.33 258.38 L534.61 255.12 L537 251.86 L539.5 248.6 L542.11 245.34 L544.83 242.08 L547.66 238.83 L550.6 235.57 L553.65 232.31 L556.8 229.05 L560.05 225.79 L563.41 222.53 L566.88 219.27 L570.45 216.01 L574.11 212.75 L577.88 209.49 L581.75 206.24 L585.71 202.98 L589.77 199.72 L593.92 196.46 L598.17 193.2 L602.52 189.94 L606.95 186.68 L611.47 183.42 L616.08 180.16 L620.78 176.9 L625.56 173.65 L630.43 170.39 L635.38 167.13 L640.42 163.87 L645.53 160.61 L650.72 157.35 L655.99 154.09 L661.33 150.83 L666.74 147.57 L672.23 144.31 L677.79 141.06 L683.41 137.8 L689.1 134.54 L694.86 131.28 L700.68 128.02 L706.56 124.76 L712.5 121.5 L718.5 118.24 L724.55 114.98 L730.66 111.72 L736.82 108.47 L743.03 105.21 L749.29 101.95 L755.6 98.69 L761.95 95.43 L768.34 92.17 L774.78 88.91 L781.25 85.65 L787.76 82.39 L794.3 79.13 L800.88 75.88 L807.49 72.62 L814.13 69.36 L820.79 66.1 L827.48 62.84 L834.19 59.58 L840.92 56.32 L847.67 53.06 L854.44 49.8 L861.22 46.54 L868.02 43.29 L874.82 40.03 L881.63 36.77 L888.45 33.51 L895.27 30.25 L902.1 26.99"/>
<path d="M902.1 613.61 L894.42 610.35 L886.75 607.09 L879.07 603.83 L871.41 600.57 L863.75 597.32 L856.11 594.06 L848.48 590.8 L840.87 587.54 L833.27 584.28 L825.7 581.02 L818.15 577.76 L810.63 574.5 L803.13 571.24 L795.66 567.98 L788.23 564.73 L780.83 561.47 L773.47 558.21 L766.14 554.95 L758.86 551.69 L751.62 548.43 L744.43 545.17 L737.29 541.91 L730.19 538.65 L723.15 535.39 L716.16 532.13 L709.23 528.88 L702.36 525.62 L695.55 522.36 L688.8 519.1 L682.12 515.84 L675.5 512.58 L668.95 509.32 L662.48 506.06 L656.07 502.8 L649.75 499.55 L643.5 496.29 L637.32 493.03 L631.23 489.77 L625.22 486.51 L619.3 483.25 L613.46 479.99 L607.71 476.73 L602.04 473.47 L596.47 470.21 L591 466.96 L585.62 463.7 L580.33 460.44 L575.14 457.18 L570.05 453.92 L565.07 450.66 L560.18 447.4 L555.4 444.14 L550.73 440.88 L546.16 437.62 L541.7 434.37 L537.35 431.11 L533.11 427.85 L528.99 424.59 L524.98 421.33 L521.08 418.07 L517.3 414.81 L513.63 411.55 L510.09 408.29 L506.66 405.03 L503.36 401.77 L500.17 398.52 L497.11 395.26 L494.17 392 L491.36 388.74 L488.67 385.48 L486.1 382.22 L483.67 378.96 L481.36 375.7 L479.18 372.44 L477.13 369.19 L475.2 365.93 L473.41 362.67 L471.75 359.41 L470.22 356.15 L468.82 352.89 L467.55 349.63 L466.42 346.37 L465.41 343.11 L464.55 339.85 L463.81 336.6 L463.21 333.34 L462.74 330.08 L462.4 326.82 L462.2 323.56 L462.14 320.3 L462.2 317.04 L462.4 313.78 L462.74 310.52 L463.21 307.26 L463.81 304 L464.55 300.75 L465.41 297.49 L466.42 294.23 L467.55 290.97 L468.82 287.71 L470.22 284.45 L471.75 281.19 L473.41 277.93 L475.2 274.67 L477.13 271.42 L479.18 268.16 L481.36 264.9 L483.67 261.64 L486.1 258.38 L488.67 255.12 L491.36 251.86 L494.17 248.6 L497.11 245.34 L500.17 242.08 L503.36 238.83 L506.66 235.57 L510.09 232.31 L513.63 229.05 L517.3 225.79 L521.08 222.53 L524.98 219.27 L528.99 216.01 L533.11 212.75 L537.35 209.49 L541.7 206.24 L546.16 202.98 L550.73 199.72 L555.4 196.46 L560.18 193.2 L565.07 189.94 L570.05 186.68 L575.14 183.42 L580.33 180.16 L585.62 176.9 L591 173.65 L596.47 170.39 L602.04 167.13 L607.71 163.87 L613.46 160.61 L619.3 157.35 L625.22 154.09 L631.23 150.83 L637.32 147.57 L643.5 144.31 L649.75 141.06 L656.07 137.8 L662.48 134.54 L668.95 131.28 L675.5 128.02 L682.12 124.76 L688.8 121.5 L695.55 118.24 L702.36 114.98 L709.23 111.72 L716.16 108.47 L723.15 105.21 L730.19 101.95 L737.29 98.69 L744.43 95.43 L751.62 92.17 L758.86 88.91 L766.14 85.65 L773.47 82.39 L780.83 79.13 L788.23 75.88 L795.66 72.62 L803.13 69.36 L810.63 66.1 L818.15 62.84 L825.7 59.58 L833.27 56.32 L840.87 53.06 L848.48 49.8 L856.11 46.54 L863.75 43.29 L871.41 40.03 L879.07 36.77 L886.75 33.51 L894.42 30.25 L902.1 26.99"/>
<path d="M902.1 613.61 L893.57 610.35 L885.04 607.09 L876.52 603.83 L868 600.57 L859.49 597.32 L851 594.06 L842.52 590.8 L834.07 587.54 L825.63 584.28 L817.21 581.02 L808.82 577.76 L800.46 574.5 L792.13 571.24 L783.84 567.98 L775.58 564.73 L767.35 561.47 L759.17 558.21 L751.04 554.95 L742.95 551.69 L734.9 548.43 L726.91 545.17 L718.97 541.91 L711.09 538.65 L703.27 535.39 L695.5 532.13 L687.8 528.88 L680.17 525.62 L672.6 522.36 L665.1 519.1 L657.67 515.84 L650.32 512.58 L643.05 509.32 L635.85 506.06 L628.74 502.8 L621.71 499.55 L614.76 496.29 L607.9 493.03 L601.13 489.77 L594.46 486.51 L587.87 483.25 L581.39 479.99 L575 476.73 L568.71 473.47 L562.52 470.21 L556.43 466.96 L550.45 463.7 L544.58 460.44 L538.81 457.18 L533.16 453.92 L527.62 450.66 L522.19 447.4 L516.88 444.14 L511.69 440.88 L506.61 437.62 L501.66 434.37 L496.82 431.11 L492.12 427.85 L487.53 424.59 L483.07 421.33 L478.74 418.07 L474.54 414.81 L470.47 411.55 L466.53 408.29 L462.72 405.03 L459.05 401.77 L455.51 398.52 L452.11 395.26 L448.85 392 L445.72 388.74 L442.73 385.48 L439.88 382.22 L437.18 378.96 L434.61 375.7 L432.19 372.44 L429.91 369.19 L427.77 365.93 L425.78 362.67 L423.93 359.41 L422.23 356.15 L420.68 352.89 L419.27 349.63 L418.01 346.37 L416.89 343.11 L415.93 339.85 L415.11 336.6 L414.44 333.34 L413.92 330.08 L413.55 326.82 L413.32 323.56 L413.25 320.3 L413.32 317.04 L413.55 313.78 L413.92 310.52 L414.44 307.26 L415.11 304 L415.93 300.75 L416.89 297.49 L418.01 294.23 L419.27 290.97 L420.68 287.71 L422.23 284.45 L423.93 281.19 L425.78 277.93 L427.77 274.67 L429.91 271.42 L432.19 268.16 L434.61 264.9 L437.18 261.64 L439.88 258.38 L442.73 255.12 L445.72 251.86 L448.85 248.6 L452.11 245.34 L455.51 242.08 L459.05 238.83 L462.72 235.57 L466.53 232.31 L470.47 229.05 L474.54 225.79 L478.74 222.53 L483.07 219.27 L487.53 216.01 L492.12 212.75 L496.82 209.49 L501.66 206.24 L506.61 202.98 L511.69 199.72 L516.88 196.46 L522.19 193.2 L527.62 189.94 L533.16 186.68 L538.81 183.42 L544.58 180.16 L550.45 176.9 L556.43 173.65 L562.52 170.39 L568.71 167.13 L575 163.87 L581.39 160.61 L587.87 157.35 L594.46 154.09 L601.13 150.83 L607.9 147.57 L614.76 144.31 L621.71 141.06 L628.74 137.8 L635.85 134.54 L643.05 131.28 L650.32 128.02 L657.67 124.76 L665.1 121.5 L672.6 118.24 L680.17 114.98 L687.8 111.72 L695.5 108.47 L703.27 105.21 L711.09 101.95 L718.97 98.69 L726.91 95.43 L734.9 92.17 L742.95 88.91 L751.04 85.65 L759.17 82.39 L767.35 79.13 L775.58 75.88 L783.84 72.62 L792.13 69.36 L800.46 66.1 L808.82 62.84 L817.21 59.58 L825.63 56.32 L834.07 53.06 L842.52 49.8 L851 46.54 L859.49 43.29 L868 40.03 L876.52 36.77 L885.04 33.51 L893.57 30.25 L902.1 26.99"/>
<path d="M902.1 613.61 L892.72 610.35 L883.33 607.09 L873.96 603.83 L864.59 600.57 L855.23 597.32 L845.89 594.06 L836.57 590.8 L827.26 587.54 L817.98 584.28 L808.72 581.02 L799.5 577.76 L790.3 574.5 L781.14 571.24 L772.01 567.98 L762.92 564.73 L753.88 561.47 L744.88 558.21 L735.93 554.95 L727.03 551.69 L718.18 548.43 L709.39 545.17 L700.66 541.91 L691.99 538.65 L683.38 535.39 L674.84 532.13 L666.37 528.88 L657.97 525.62 L649.65 522.36 L641.4 519.1 L633.23 515.84 L625.15 512.58 L617.14 509.32 L609.23 506.06 L601.4 502.8 L593.67 499.55 L586.03 496.29 L578.48 493.03 L571.04 489.77 L563.69 486.51 L556.45 483.25 L549.31 479.99 L542.29 476.73 L535.37 473.47 L528.56 470.21 L521.86 466.96 L515.29 463.7 L508.83 460.44 L502.49 457.18 L496.27 453.92 L490.17 450.66 L484.2 447.4 L478.36 444.14 L472.65 440.88 L467.06 437.62 L461.61 434.37 L456.3 431.11 L451.12 427.85 L446.07 424.59 L441.17 421.33 L436.41 418.07 L431.79 414.81 L427.31 411.55 L422.97 408.29 L418.79 405.03 L414.75 401.77 L410.85 398.52 L407.11 395.26 L403.52 392 L400.08 388.74 L396.79 385.48 L393.66 382.22 L390.68 378.96 L387.86 375.7 L385.2 372.44 L382.69 369.19 L380.34 365.93 L378.15 362.67 L376.12 359.41 L374.24 356.15 L372.53 352.89 L370.99 349.63 L369.6 346.37 L368.37 343.11 L367.31 339.85 L366.41 336.6 L365.67 333.34 L365.1 330.08 L364.69 326.82 L364.45 323.56 L364.37 320.3 L364.45 317.04 L364.69 313.78 L365.1 310.52 L365.67 307.26 L366.41 304 L367.31 300.75 L368.37 297.49 L369.6 294.23 L370.99 290.97 L372.53 287.71 L374.24 284.45 L376.12 281.19 L378.15 277.93 L380.34 274.67 L382.69 271.42 L385.2 268.16 L387.86 264.9 L390.68 261.64 L393.66 258.38 L396.79 255.12 L400.08 251.86 L403.52 248.6 L407.11 245.34 L410.85 242.08 L414.75 238.83 L418.79 235.57 L422.97 232.31 L427.31 229.05 L431.79 225.79 L436.41 222.53 L441.17 219.27 L446.07 216.01 L451.12 212.75 L456.3 209.49 L461.61 206.24 L467.06 202.98 L472.65 199.72 L478.36 196.46 L484.2 193.2 L490.17 189.94 L496.27 186.68 L502.49 183.42 L508.83 180.16 L515.29 176.9 L521.86 173.65 L528.56 170.39 L535.37 167.13 L542.29 163.87 L549.31 160.61 L556.45 157.35 L563.69 154.09 L571.04 150.83 L578.48 147.57 L586.03 144.31 L593.67 141.06 L601.4 137.8 L609.23 134.54 L617.14 131.28 L625.15 128.02 L633.23 124.76 L641.4 121.5 L649.65 118.24 L657.97 114.98 L666.37 111.72 L674.84 108.47 L683.38 105.21 L691.99 101.95 L700.66 98.69 L709.39 95.43 L718.18 92.17 L727.03 88.91 L735.93 85.65 L744.88 82.39 L753.88 79.13 L762.92 75.88 L772.01 72.62 L781.14 69.36 L790.3 66.1 L799.5 62.84 L808.72 59.58 L817.98 56.32 L827.26 53.06 L836.57 49.8 L845.89 46.54 L855.23 43.29 L864.59 40.03 L873.96 36.77 L883.33 33.51 L892.72 30.25 L902.1 26.99"/>
<path d="M902.1 613.61 L891.86 610.35 L881.63 607.09 L871.4 603.83 L861.18 600.57 L850.97 597.32 L840.78 594.06 L830.61 590.8 L820.46 587.54 L810.33 584.28 L800.23 581.02 L790.17 577.76 L780.13 574.5 L770.14 571.24 L760.18 567.98 L750.27 564.73 L740.41 561.47 L730.59 558.21 L720.82 554.95 L711.12 551.69 L701.46 548.43 L691.87 545.17 L682.35 541.91 L672.89 538.65 L663.5 535.39 L654.18 532.13 L644.94 528.88 L635.78 525.62 L626.7 522.36 L617.7 519.1 L608.79 515.84 L599.97 512.58 L591.24 509.32 L582.6 506.06 L574.07 502.8 L565.63 499.55 L557.29 496.29 L549.06 493.03 L540.94 489.77 L532.93 486.51 L525.03 483.25 L517.24 479.99 L509.57 476.73 L502.03 473.47 L494.6 470.21 L487.3 466.96 L480.12 463.7 L473.07 460.44 L466.16 457.18 L459.37 453.92 L452.72 450.66 L446.21 447.4 L439.84 444.14 L433.6 440.88 L427.51 437.62 L421.57 434.37 L415.77 431.11 L410.12 427.85 L404.62 424.59 L399.27 421.33 L394.07 418.07 L389.03 414.81 L384.15 411.55 L379.42 408.29 L374.85 405.03 L370.44 401.77 L366.2 398.52 L362.11 395.26 L358.2 392 L354.44 388.74 L350.86 385.48 L347.44 382.22 L344.19 378.96 L341.11 375.7 L338.2 372.44 L335.47 369.19 L332.91 365.93 L330.52 362.67 L328.3 359.41 L326.26 356.15 L324.39 352.89 L322.7 349.63 L321.19 346.37 L319.85 343.11 L318.69 339.85 L317.71 336.6 L316.91 333.34 L316.28 330.08 L315.84 326.82 L315.57 323.56 L315.48 320.3 L315.57 317.04 L315.84 313.78 L316.28 310.52 L316.91 307.26 L317.71 304 L318.69 300.75 L319.85 297.49 L321.19 294.23 L322.7 290.97 L324.39 287.71 L326.26 284.45 L328.3 281.19 L330.52 277.93 L332.91 274.67 L335.47 271.42 L338.2 268.16 L341.11 264.9 L344.19 261.64 L347.44 258.38 L350.86 255.12 L354.44 251.86 L358.2 248.6 L362.11 245.34 L366.2 242.08 L370.44 238.83 L374.85 235.57 L379.42 232.31 L384.15 229.05 L389.03 225.79 L394.07 222.53 L399.27 219.27 L404.62 216.01 L410.12 212.75 L415.77 209.49 L421.57 206.24 L427.51 202.98 L433.6 199.72 L439.84 196.46 L446.21 193.2 L452.72 189.94 L459.37 186.68 L466.16 183.42 L473.07 180.16 L480.12 176.9 L487.3 173.65 L494.6 170.39 L502.03 167.13 L509.57 163.87 L517.24 160.61 L525.03 157.35 L532.93 154.09 L540.94 150.83 L549.06 147.57 L557.29 144.31 L565.63 141.06 L574.07 137.8 L582.6 134.54 L591.24 131.28 L599.97 128.02 L608.79 124.76 L617.7 121.5 L626.7 118.24 L635.78 114.98 L644.94 111.72 L654.18 108.47 L663.5 105.21 L672.89 101.95 L682.35 98.69 L691.87 95.43 L701.46 92.17 L711.12 88.91 L720.82 85.65 L730.59 82.39 L740.41 79.13 L750.27 75.88 L760.18 72.62 L770.14 69.36 L780.13 66.1 L790.17 62.84 L800.23 59.58 L810.33 56.32 L820.46 53.06 L830.61 49.8 L840.78 46.54 L850.97 43.29 L861.18 40.03 L871.4 36.77 L881.63 33.51 L891.86 30.25 L902.1 26.99"/>
<path d="M902.1 565L750.27 565"/>
<path d="M1053.93 565L902.1 565"/>
<path d="M902.1 516L608.79 516"/>
<path d="M1195.41 516L902.1 516"/>
<path d="M902.1 467L487.3 467"/>
<path d="M1316.9 467L902.1 467"/>
<path d="M902.1 418L394.07 418"/>
<path d="M1410.13 418L902.1 418"/>
<path d="M902.1 369L335.47 369"/>
<path d="M1468.73 369L902.1 369"/>
<path d="M902.1 320L315.48 320"/>
<path d="M1488.72 320L902.1 320"/>
<path d="M902.1 271L335.47 271"/>
<path d="M1468.73 271L902.1 271"/>
<path d="M902.1 223L394.07 223"/>
<path d="M1410.13 223L902.1 223"/>
<path d="M902.1 174L487.3 174"/>
<path d="M1316.9 174L902.1 174"/>
<path d="M902.1 125L608.79 125"/>
<path d="M1195.41 125L902.1 125"/>
<path d="M902.1 76L750.27 76"/>
<path d="M1053.93 76L902.1 76"/>
</g>
<g id="tracks" clip-path="url(#skyclip)" fill="none" stroke-width="1.39">
<g stroke="#707070" stroke-opacity="0.5" stroke-dasharray="1.389 2.292">
<path d="M481.9 233.3 L481.5 233.65 L481.14 233.93 L480.82 234.16 L480.52 234.37 L480.21 234.58 L479.89 234.82 L479.54 235.1 L479.14 235.45 L478.67 235.89 L478.12 236.45 L477.47 237.14 L476.7 238 L475.81 239.03 L474.8 240.23 L473.7 241.57 L472.51 243.02 L471.25 244.56 L469.95 246.18 L468.61 247.83 L467.26 249.51 L465.9 251.2 L464.57 252.85 L463.26 254.46 L462 256 L460.75 257.48 L459.48 258.95 L458.19 260.41 L456.89 261.86 L455.58 263.3 L454.29 264.76 L453.01 266.22 L451.76 267.7 L450.54 269.2 L449.37 270.73 L448.26 272.3 L447.2 273.9 L446.19 275.57 L445.21 277.31 L444.26 279.12 L443.34 280.96 L442.46 282.82 L441.62 284.69 L440.82 286.55 L440.06 288.37 L439.34 290.15 L438.68 291.86 L438.06 293.48 L437.5 295 L437 296.42 L436.57 297.78 L436.19 299.07 L435.86 300.3 L435.58 301.49 L435.34 302.63 L435.14 303.74 L434.96 304.82 L434.8 305.88 L434.66 306.92 L434.53 307.96 L434.4 309 L434.29 310.02 L434.21 311.01 L434.17 311.96 L434.15 312.89 L434.15 313.8 L434.17 314.69 L434.2 315.57 L434.24 316.44 L434.29 317.32 L434.33 318.2 L434.37 319.09 L434.4 320 L434.42 320.9 L434.44 321.76 L434.46 322.61 L434.47 323.44 L434.5 324.28 L434.52 325.12 L434.56 325.99 L434.61 326.89 L434.68 327.83 L434.77 328.82 L434.87 329.87 L435 331 L435.14 332.2 L435.29 333.47 L435.44 334.8 L435.61 336.19 L435.79 337.61 L435.99 339.06 L436.21 340.54 L436.46 342.04 L436.74 343.54 L437.05 345.04 L437.41 346.53 L437.8 348 L438.23 349.48 L438.68 350.99 L439.16 352.52 L439.67 354.07 L440.2 355.63 L440.77 357.19 L441.38 358.73 L442.02 360.26 L442.7 361.76 L443.43 363.22 L444.19 364.64 L445 366 L445.85 367.3 L446.75 368.55 L447.69 369.74 L448.67 370.9 L449.68 372.04 L450.74 373.15 L451.83 374.26 L452.96 375.36 L454.12 376.48 L455.31 377.62 L456.54 378.79 L457.8 380 L459.09 381.22 L460.43 382.43 L461.8 383.63 L463.2 384.84 L464.64 386.05 L466.11 387.29 L467.62 388.55 L469.16 389.85 L470.72 391.2 L472.32 392.6 L473.95 394.06 L475.6 395.6 L477.3 397.23 L479.05 398.97 L480.84 400.79 L482.67 402.67 L484.54 404.6 L486.43 406.56 L488.33 408.53 L490.24 410.48 L492.15 412.4 L494.05 414.28 L495.94 416.08 L497.8 417.8 L499.65 419.45 L501.5 421.07 L503.35 422.66 L505.2 424.23 L507.05 425.76 L508.9 427.26 L510.75 428.73 L512.6 430.16 L514.45 431.57 L516.3 432.94 L518.15 434.29 L520 435.6 L521.85 436.87 L523.7 438.09 L525.55 439.27 L527.4 440.41 L529.25 441.52 L531.1 442.6 L532.95 443.66 L534.8 444.71 L536.65 445.76 L538.5 446.8 L540.35 447.84 L542.2 448.9 L544.05 449.96 L545.9 451 L547.75 452.03 L549.6 453.05 L551.45 454.06 L553.3 455.07 L555.15 456.07 L557 457.07 L558.85 458.08 L560.7 459.08 L562.55 460.09 L564.4 461.1"/>
<path d="M335 303.3 L336.22 301.89 L337.47 300.48 L338.76 299.06 L340.07 297.65 L341.42 296.24 L342.8 294.83 L344.21 293.42 L345.66 292.01 L347.13 290.6 L348.64 289.19 L350.18 287.79 L351.74 286.38 L353.34 284.97 L354.97 283.57 L356.63 282.16 L358.32 280.76 L360.05 279.35 L361.8 277.95 L363.58 276.55 L365.39 275.15 L367.23 273.75 L369.1 272.35 L371 270.95 L372.93 269.55 L374.88 268.16 L376.87 266.76 L378.88 265.37 L380.92 263.97 L382.99 262.58 L385.09 261.19 L387.22 259.8 L389.37 258.42 L391.55 257.03 L393.75 255.64 L395.99 254.26 L398.25 252.88 L400.53 251.5 L402.84 250.12 L405.18 248.74 L407.54 247.37 L409.92 245.99 L412.34 244.62 L414.77 243.25 L417.23 241.88 L419.71 240.51 L422.22 239.15 L424.75 237.79 L427.31 236.42 L429.88 235.07 L432.48 233.71 L435.1 232.35 L437.74 231 L440.4 229.65 L443.09 228.3 L445.79 226.96 L448.52 225.62 L451.26 224.28 L454.03 222.94 L456.81 221.6 L459.62 220.27 L462.44 218.94 L465.28 217.62 L468.13 216.29 L471.01 214.97 L473.9 213.65 L476.81 212.34 L479.73 211.03 L482.67 209.72 L485.63 208.42 L488.6 207.12 L491.58 205.82 L494.58 204.53 L497.6 203.24 L500.62 201.95 L503.66 200.67 L506.71 199.39 L509.77 198.12 L512.85 196.85 L515.93 195.58 L519.03 194.32 L522.13 193.07 L525.25 191.82 L528.37 190.57 L531.5 189.33 L534.64 188.09 L537.79 186.86 L540.94 185.64 L544.1 184.41 L547.27 183.2 L550.44 181.99 L553.61 180.79 L556.79 179.59 L559.97 178.4 L563.16 177.22 L566.34 176.04 L569.53 174.87 L572.72 173.7 L575.91 172.54 L579.1 171.39 L582.29 170.25 L585.48 169.11 L588.67 167.99 L591.85 166.87 L595.03 165.75 L598.2 164.65 L601.37 163.56 L604.54 162.47 L607.7 161.39 L610.85 160.33 L614 159.27 L617.13 158.22 L620.26 157.18 L623.38 156.15 L626.48 155.13 L629.58 154.12 L632.67 153.13 L635.74 152.14 L638.8 151.17 L641.84 150.2 L644.87 149.25 L647.89 148.31 L650.89 147.39 L653.87 146.48 L656.83 145.58 L659.78 144.69 L662.7 143.82 L665.61 142.96 L668.49 142.12 L671.36 141.29 L674.2 140.47 L677.02 139.68 L679.81 138.89 L682.58 138.13 L685.33 137.38 L688.05 136.64 L690.75 135.93 L693.41 135.23 L696.05 134.55 L698.67 133.89 L701.25 133.24 L703.8 132.62 L706.32 132.01 L708.82 131.42 L711.28 130.86 L713.71 130.31 L716.11 129.78 L718.47 129.28 L720.81 128.8 L723.11 128.33 L725.37 127.89 L727.61 127.47 L729.81 127.08 L731.97 126.7 L734.1 126.35 L736.19 126.03 L738.25 125.72 L740.28 125.44 L742.27 125.18 L744.22 124.95 L746.14 124.74 L748.03 124.56 L749.88 124.4 L751.69 124.26 L753.48 124.15 L755.22 124.06 L756.93 124 L758.61 123.97 L760.26 123.95 L761.87 123.97 L763.45 124 L765 124.07 L766.51 124.15 L768 124.27 L769.45 124.4 L770.87 124.56 L772.27 124.75 L773.63 124.96 L774.97 125.19 L776.28 125.45 L777.56 125.73 L778.81 126.04 L780.04 126.37 L781.24 126.72 L782.42 127.1 L783.58 127.49 L784.71 127.91 L785.82 128.35 L786.91 128.82 L787.97 129.3 L789.02 129.81 L790.05 130.33 L791.05 130.88 L792.04 131.45 L793.01 132.04 L793.97 132.64 L794.91 133.27 L795.83 133.91 L796.74 134.58 L797.63 135.26 L798.51 135.96 L799.38 136.68 L800.23 137.41 L801.07 138.16 L801.9 138.93 L802.72 139.71 L803.53 140.51 L804.33 141.32 L805.12 142.15 L805.9 143 L806.67 143.86 L807.43 144.73 L808.19 145.62 L808.94 146.52 L809.68 147.43 L810.42 148.36 L811.15 149.3 L811.88 150.25 L812.6 151.21 L813.31 152.18 L814.02 153.17 L814.73 154.17 L815.43 155.18 L816.13 156.2 L816.83 157.22 L817.53 158.26 L818.22 159.31 L818.91 160.37 L819.59 161.44 L820.28 162.52 L820.96 163.6 L821.64 164.7 L822.32 165.8 L823 166.92 L823.68 168.04 L824.36 169.16 L825.04 170.3 L825.71 171.44 L826.39 172.59 L827.07 173.75 L827.74 174.92 L828.42 176.09 L829.1 177.27 L829.78 178.45 L830.45 179.64 L831.13 180.84 L831.81 182.04 L832.49 183.25 L833.18 184.47 L833.86 185.69 L834.54 186.92 L835.23 188.15 L835.92 189.38 L836.6 190.62 L837.29 191.87 L837.98 193.12 L838.68 194.38 L839.37 195.64 L840.07 196.9 L840.77 198.17 L841.47 199.45 L842.17 200.73 L842.87 202.01 L843.58 203.29 L844.28 204.58 L844.99 205.88 L845.7 207.17 L846.41 208.48 L847.13 209.78 L847.85 211.09 L848.57 212.4 L849.29 213.71 L850.01 215.03 L850.73 216.35 L851.46 217.67 L852.19 219 L852.92 220.33 L853.66 221.66 L854.39 223 L855.13 224.34 L855.87 225.68 L856.61 227.02 L857.35 228.36 L858.1 229.71 L858.85 231.06 L859.6 232.41 L860.35 233.77 L861.1 235.13 L861.86 236.48 L862.61 237.85 L863.37 239.21 L864.13 240.57 L864.9 241.94 L865.66 243.31 L866.43 244.68 L867.2 246.05 L867.97 247.43 L868.74 248.8 L869.51 250.18 L870.29 251.56 L871.06 252.94 L871.84 254.32 L872.62 255.71 L873.4 257.09 L874.19 258.48"/>
<path d="M553.1 326.1 L552.44 324.58 L551.8 323.06 L551.18 321.54 L550.59 320.02 L550.01 318.5 L549.47 316.98 L548.94 315.46 L548.44 313.94 L547.97 312.42 L547.51 310.9 L547.08 309.38 L546.68 307.86 L546.29 306.34 L545.93 304.82 L545.6 303.3 L545.28 301.78 L545 300.26 L544.73 298.74 L544.49 297.22 L544.27 295.71 L544.08 294.19 L543.91 292.67 L543.76 291.15 L543.63 289.63 L543.53 288.12 L543.46 286.6 L543.41 285.08 L543.38 283.57 L543.37 282.05 L543.39 280.54 L543.43 279.02 L543.49 277.51 L543.58 275.99 L543.69 274.48 L543.83 272.97 L543.98 271.46 L544.16 269.94 L544.37 268.43 L544.59 266.92 L544.84 265.41 L545.12 263.9 L545.41 262.39 L545.73 260.89 L546.07 259.38 L546.44 257.87 L546.83 256.36 L547.24 254.86 L547.67 253.35 L548.12 251.85 L548.6 250.35 L549.1 248.84 L549.62 247.34 L550.17 245.84 L550.73 244.34 L551.32 242.84 L551.93 241.35 L552.56 239.85 L553.21 238.35 L553.89 236.86 L554.58 235.37 L555.3 233.87 L556.03 232.38 L556.79 230.89 L557.57 229.4 L558.37 227.92 L559.19 226.43 L560.03 224.95 L560.9 223.46 L561.78 221.98 L562.68 220.5 L563.6 219.02 L564.54 217.54 L565.5 216.06 L566.48 214.59 L567.48 213.12 L568.49 211.65 L569.53 210.18 L570.58 208.71 L571.65 207.24 L572.74 205.78 L573.85 204.32 L574.98 202.86 L576.12 201.4 L577.28 199.94 L578.46 198.49 L579.65 197.04 L580.86 195.59 L582.09 194.14 L583.33 192.7 L584.59 191.25 L585.86 189.81 L587.15 188.38 L588.45 186.94 L589.77 185.51 L591.1 184.08 L592.44 182.66 L593.8 181.24 L595.17 179.82 L596.56 178.4 L597.95 176.99 L599.36 175.58 L600.78 174.17 L602.21 172.77 L603.66 171.37 L605.11 169.98 L606.57 168.59 L608.04 167.2 L609.52 165.82 L611.01 164.44 L612.51 163.07 L614.01 161.7 L615.52 160.34 L617.04 158.98 L618.57 157.62 L620.1 156.27 L621.63 154.93 L623.17 153.59 L624.71 152.26 L626.25 150.94 L627.8 149.62"/>
<path d="M539.3 343.4 L538.48 341.83 L537.69 340.27 L536.92 338.7 L536.18 337.14 L535.47 335.57 L534.78 334 L534.12 332.44 L533.48 330.87 L532.87 329.31 L532.28 327.74 L531.72 326.17 L531.19 324.61 L530.68 323.04 L530.2 321.47 L529.74 319.91 L529.31 318.34 L528.91 316.77 L528.54 315.21 L528.19 313.64 L527.86 312.07 L527.56 310.51 L527.29 308.94 L527.05 307.38 L526.83 305.81 L526.64 304.24 L526.47 302.68 L526.33 301.11 L526.22 299.55 L526.13 297.98 L526.07 296.41 L526.04 294.85 L526.03 293.28 L526.05 291.72 L526.1 290.15 L526.17 288.59 L526.27 287.02 L526.39 285.46 L526.54 283.9 L526.72 282.33 L526.92 280.77 L527.15 279.2 L527.41 277.64 L527.69 276.08 L528 274.52 L528.33 272.95 L528.69 271.39 L529.08 269.83 L529.49 268.27 L529.93 266.71 L530.39 265.15 L530.88 263.59 L531.39 262.03 L531.93 260.47 L532.5 258.91 L533.09 257.35 L533.71 255.79 L534.35 254.23 L535.02 252.67 L535.71 251.12 L536.43 249.56 L537.17 248 L537.94 246.45 L538.73 244.89 L539.55 243.34 L540.39 241.79 L541.26 240.23 L542.15 238.68 L543.07 237.13 L544 235.58 L544.97 234.03 L545.96 232.48 L546.97 230.93 L548 229.38 L549.06 227.83 L550.14 226.28 L551.25 224.74 L552.38 223.19 L553.53 221.64 L554.7 220.1 L555.9 218.56 L557.12 217.01 L558.37 215.47 L559.63 213.93 L560.92 212.39 L562.23 210.86 L563.56 209.32 L564.91 207.78 L566.28 206.25 L567.68 204.71 L569.1 203.18 L570.53 201.65 L571.99 200.12 L573.47 198.59 L574.97 197.06 L576.49 195.53 L578.03 194.01 L579.59 192.48 L581.16 190.96 L582.76 189.44 L584.38 187.92 L586.01 186.4 L587.66 184.89 L589.33 183.37 L591.02 181.86 L592.73 180.35 L594.45 178.84 L596.19 177.33 L597.95 175.83 L599.73 174.33 L601.52 172.82 L603.32 171.33 L605.14 169.83 L606.98 168.34 L608.83 166.84 L610.7 165.35 L612.58 163.87 L614.47 162.38 L616.38 160.9 L618.3 159.43 L620.23 157.95"/>
<path d="M475.6 367.7 L474.37 368.23 L473.15 368.75 L471.92 369.27 L470.7 369.79 L469.48 370.3 L468.26 370.81 L467.03 371.32 L465.82 371.82 L464.6 372.32 L463.38 372.82 L462.16 373.31 L460.94 373.8 L459.73 374.28 L458.51 374.76 L457.29 375.24 L456.08 375.71 L454.86 376.18 L453.64 376.64 L452.43 377.1 L451.21 377.56 L449.99 378.01 L448.77 378.46 L447.55 378.9 L446.33 379.34 L445.11 379.78 L443.89 380.21 L442.67 380.63 L441.44 381.05 L440.22 381.47 L438.99 381.89 L437.76 382.29 L436.53 382.7 L435.3 383.1 L434.06 383.49 L432.82 383.88 L431.58 384.27 L430.34 384.65 L429.1 385.02 L427.85 385.39 L426.6 385.76 L425.35 386.12 L424.1 386.47 L422.84 386.82 L421.58 387.17 L420.31 387.51 L419.05 387.84 L417.78 388.18 L416.5 388.5 L415.22 388.82 L413.94 389.13 L412.65 389.44 L411.36 389.75 L410.07 390.05 L408.77 390.34 L407.47 390.63 L406.16 390.91 L404.84 391.19 L403.53 391.46 L402.2 391.72 L400.88 391.98 L399.54 392.24 L398.21 392.49 L396.86 392.73 L395.52 392.97 L394.16 393.2 L392.8 393.43 L391.44 393.65 L390.06 393.86 L388.69 394.07 L387.3 394.27 L385.91 394.47 L384.52 394.66 L383.12 394.85 L381.71 395.03 L380.29 395.2 L378.87 395.37 L377.44 395.53 L376.01 395.68 L374.56 395.83 L373.11 395.98 L371.66 396.11 L370.19 396.24 L368.72 396.37 L367.25 396.49 L365.76 396.6 L364.4 396.7"/>
<path d="M438.7 379.9 L438.7 379.24 L438.68 378.61 L438.67 378.01 L438.65 377.42 L438.63 376.83 L438.62 376.22 L438.61 375.6 L438.6 374.94 L438.61 374.23 L438.62 373.46 L438.65 372.62 L438.7 371.7 L438.75 370.68 L438.81 369.55 L438.86 368.34 L438.92 367.06 L438.99 365.73 L439.07 364.38 L439.17 363.02 L439.29 361.66 L439.43 360.34 L439.59 359.05 L439.78 357.84 L440 356.7 L440.25 355.64 L440.54 354.63 L440.85 353.65 L441.19 352.71 L441.55 351.8 L441.93 350.91 L442.32 350.03 L442.73 349.16 L443.14 348.29 L443.56 347.41 L443.98 346.52 L444.4 345.6 L444.8 344.69 L445.17 343.8 L445.54 342.93 L445.89 342.07 L446.26 341.21 L446.64 340.34 L447.06 339.45 L447.52 338.54 L448.03 337.58 L448.61 336.58 L449.26 335.52 L450 334.4 L450.83 333.22 L451.76 331.99 L452.76 330.71 L453.82 329.39 L454.94 328.04 L456.09 326.65 L457.28 325.23 L458.49 323.79 L459.71 322.32 L460.92 320.83 L462.13 319.32 L463.3 317.8 L464.45 316.25 L465.58 314.66 L466.71 313.03 L467.84 311.37 L468.98 309.68 L470.13 307.98 L471.31 306.27 L472.51 304.56 L473.76 302.84 L475.05 301.14 L476.4 299.46 L477.8 297.8 L479.27 296.15 L480.79 294.48 L482.36 292.81 L483.98 291.14 L485.63 289.48 L487.32 287.82 L489.03 286.17 L490.77 284.54 L492.52 282.94 L494.28 281.36 L496.04 279.81 L497.8 278.3 L499.58 276.83 L501.4 275.39 L503.25 273.99 L505.12 272.62 L507.01 271.27 L508.9 269.93 L510.79 268.61 L512.68 267.29 L514.55 265.98 L516.4 264.66 L518.22 263.34 L520 262 L521.75 260.68 L523.49 259.39 L525.22 258.14 L526.93 256.89 L528.63 255.65 L530.31 254.4 L531.97 253.13 L533.61 251.82 L535.24 250.46 L536.85 249.05 L538.43 247.57 L540 246 L541.54 244.35 L543.05 242.62 L544.55 240.83 L546.01 238.98 L547.47 237.08 L548.9 235.15 L550.32 233.19 L551.73 231.21 L553.13 229.22 L554.52 227.24 L555.91 225.26 L557.3 223.3 L558.68 221.33 L560.03 219.32 L561.38 217.28 L562.7 215.22 L564.02 213.15 L565.34 211.09 L566.65 209.03 L567.96 207 L569.28 205 L570.61 203.04 L571.95 201.14 L573.3 199.3 L574.65 197.5 L575.98 195.73 L577.3 193.97 L578.62 192.25 L579.94 190.56 L581.27 188.9 L582.63 187.29 L584.01 185.72 L585.44 184.2 L586.9 182.74 L588.42 181.34 L590 180 L591.65 178.74 L593.36 177.58 L595.13 176.49 L596.94 175.46 L598.79 174.48 L600.67 173.54 L602.56 172.63 L604.47 171.73 L606.38 170.83 L608.27 169.92 L610.15 168.98 L612 168"/>
<path d="M460.9 381.7 L460.69 380.73 L460.48 379.77 L460.26 378.81 L460.03 377.86 L459.8 376.91 L459.58 375.96 L459.37 375 L459.16 374.03 L458.97 373.04 L458.79 372.05 L458.63 371.03 L458.5 370 L458.38 368.95 L458.28 367.9 L458.18 366.84 L458.1 365.78 L458.03 364.7 L457.98 363.61 L457.93 362.5 L457.91 361.37 L457.9 360.21 L457.92 359.04 L457.95 357.83 L458 356.6 L458.07 355.33 L458.14 354.01 L458.23 352.66 L458.33 351.28 L458.45 349.88 L458.59 348.46 L458.76 347.04 L458.94 345.61 L459.16 344.18 L459.41 342.77 L459.69 341.37 L460 340 L460.35 338.65 L460.72 337.3 L461.12 335.96 L461.56 334.62 L462.01 333.29 L462.5 331.96 L463.01 330.64 L463.56 329.31 L464.12 327.99 L464.72 326.66 L465.35 325.33 L466 324 L466.68 322.67 L467.39 321.36 L468.12 320.05 L468.89 318.74 L469.68 317.43 L470.5 316.12 L471.35 314.81 L472.22 313.48 L473.12 312.14 L474.06 310.78 L475.01 309.4 L476 308 L477.02 306.57 L478.07 305.1 L479.15 303.62 L480.26 302.11 L481.4 300.59 L482.56 299.06 L483.75 297.53 L484.96 296 L486.2 294.48 L487.45 292.97 L488.72 291.47 L490 290 L491.32 288.54 L492.68 287.06 L494.09 285.59 L495.52 284.11 L496.97 282.64 L498.44 281.19 L499.91 279.75 L501.37 278.33 L502.82 276.95 L504.25 275.59 L505.64 274.27 L507 273 L508.32 271.77 L509.63 270.58 L510.91 269.43 L512.19 268.31 L513.44 267.21 L514.69 266.14 L515.92 265.09 L517.15 264.06 L518.37 263.04 L519.58 262.02 L520.79 261.01 L522 260 L523.19 259.02 L524.35 258.1 L525.49 257.23 L526.62 256.38 L527.74 255.55 L528.86 254.71 L529.98 253.85 L531.13 252.95 L532.29 252.01 L533.49 250.99 L534.72 249.9 L536 248.7 L537.34 247.4 L538.74 246.03 L540.18 244.58 L541.67 243.06 L543.17 241.5 L544.69 239.89 L546.2 238.26 L547.7 236.6 L549.17 234.94 L550.6 233.28 L551.98 231.63 L553.3 230 L554.55 228.38 L555.76 226.74 L556.93 225.09 L558.06 223.43 L559.16 221.76 L560.25 220.08 L561.32 218.4 L562.39 216.71 L563.45 215.03 L564.52 213.35 L565.6 211.67 L566.7 210 L567.81 208.32 L568.92 206.62 L570.03 204.91 L571.14 203.19 L572.25 201.46 L573.36 199.75 L574.46 198.05 L575.57 196.37 L576.68 194.72 L577.78 193.1 L578.89 191.53 L580 190 L581.11 188.51 L582.22 187.04 L583.32 185.59 L584.43 184.17 L585.54 182.78 L586.64 181.42 L587.75 180.09 L588.86 178.79 L589.97 177.53 L591.08 176.31 L592.19 175.14 L593.3 174 L594.41 172.92 L595.53 171.91 L596.64 170.95 L597.76 170.04 L598.88 169.17 L599.99 168.32 L601.11 167.49 L602.23 166.67 L603.35 165.85 L604.47 165.02 L605.58 164.17 L606.7 163.3"/>
<path d="M746.1 348.9 L745.88 348.46 L745.68 348.06 L745.49 347.68 L745.31 347.32 L745.13 346.96 L744.94 346.58 L744.74 346.18 L744.51 345.74 L744.27 345.24 L743.99 344.68 L743.67 344.04 L743.3 343.3 L742.89 342.5 L742.46 341.66 L741.99 340.79 L741.5 339.87 L740.98 338.9 L740.43 337.86 L739.86 336.76 L739.27 335.59 L738.66 334.33 L738.02 332.98 L737.37 331.54 L736.7 330 L736 328.34 L735.25 326.57 L734.48 324.69 L733.67 322.72 L732.84 320.67 L732 318.54 L731.15 316.36 L730.3 314.14 L729.45 311.88 L728.61 309.59 L727.79 307.3 L727 305 L726.21 302.68 L725.41 300.29 L724.61 297.85 L723.8 295.37 L723 292.85 L722.21 290.31 L721.43 287.75 L720.68 285.19 L719.95 282.62 L719.26 280.06 L718.61 277.52 L718 275 L717.43 272.52 L716.88 270.07 L716.36 267.65 L715.86 265.23 L715.4 262.82 L714.96 260.39 L714.55 257.95 L714.17 255.47 L713.83 252.94 L713.52 250.36 L713.24 247.72 L713 245 L712.8 242.13 L712.65 239.06 L712.54 235.86 L712.47 232.57 L712.43 229.23 L712.41 225.89 L712.42 222.61 L712.46 219.43 L712.5 216.4 L712.56 213.57 L712.63 210.99 L712.7 208.7 L712.78 206.73 L712.88 205.03 L712.99 203.57 L713.12 202.3 L713.27 201.18 L713.43 200.16 L713.61 199.22 L713.8 198.29 L714.01 197.35 L714.22 196.35 L714.46 195.25 L714.7 194 L714.96 192.64 L715.25 191.24 L715.56 189.8 L715.89 188.33 L716.22 186.84 L716.58 185.35 L716.93 183.86 L717.29 182.37 L717.65 180.9 L718.01 179.46 L718.36 178.06 L718.7 176.7 L719.03 175.39 L719.37 174.11 L719.7 172.87 L720.03 171.66 L720.37 170.46 L720.7 169.27 L721.03 168.09 L721.37 166.9 L721.7 165.71 L722.03 164.5 L722.37 163.26 L722.7 162 L723.03 160.71 L723.37 159.41 L723.7 158.09 L724.03 156.76 L724.37 155.43 L724.7 154.08 L725.03 152.73 L725.37 151.38 L725.7 150.03 L726.03 148.68 L726.37 147.34 L726.7 146 L727.04 144.66 L727.4 143.31 L727.76 141.95 L728.13 140.59 L728.5 139.23 L728.87 137.88 L729.22 136.52 L729.57 135.19 L729.89 133.86 L730.19 132.55 L730.46 131.26 L730.7 130 L730.9 128.76 L731.07 127.55 L731.21 126.36 L731.33 125.19 L731.43 124.02 L731.52 122.88 L731.6 121.73 L731.67 120.59 L731.74 119.45 L731.81 118.31 L731.9 117.16 L732 116"/>
<path d="M812.8 240.4 L816.22 240.85 L819.71 241.29 L823.25 241.73 L826.81 242.17 L830.37 242.61 L833.91 243.05 L837.4 243.49 L840.82 243.94 L844.15 244.39 L847.35 244.85 L850.41 245.32 L853.3 245.8 L855.87 246.24 L858.06 246.63 L859.96 246.97 L861.66 247.29 L863.27 247.62 L864.87 247.98 L866.58 248.38 L868.49 248.87 L870.68 249.45 L873.27 250.15 L876.34 250.99 L880 252 L884.34 253.2 L889.32 254.58 L894.83 256.12 L900.75 257.79 L906.96 259.55 L913.34 261.38 L919.79 263.24 L926.19 265.13 L932.41 266.99 L938.35 268.81 L943.88 270.56 L948.9 272.2 L953.42 273.74 L957.59 275.19 L961.46 276.58 L965.1 277.94 L968.57 279.28 L971.93 280.62 L975.25 282 L978.58 283.41 L981.99 284.9 L985.54 286.48 L989.29 288.17 L993.3 290 L997.57 291.99 L1002.02 294.13 L1006.62 296.4 L1011.33 298.77 L1016.12 301.21 L1020.96 303.69 L1025.8 306.19 L1030.61 308.66 L1035.36 311.09 L1040.02 313.44 L1044.54 315.69 L1048.9 317.8 L1053.09 319.78 L1057.14 321.66 L1061.09 323.46 L1064.95 325.2 L1068.75 326.89 L1072.51 328.55 L1076.26 330.2 L1080.01 331.86 L1083.8 333.54 L1087.65 335.26 L1091.57 337.04 L1095.6 338.9 L1099.72 340.83 L1103.89 342.8 L1108.12 344.8 L1112.39 346.84 L1116.68 348.9 L1121.01 350.98 L1125.35 353.07 L1129.69 355.17 L1134.04 357.27 L1138.38 359.36 L1142.7 361.44 L1147 363.5"/>
<path d="M640 147 L642.23 146.36 L644.45 145.72 L646.68 145.08 L648.9 144.44 L651.13 143.81 L653.36 143.17 L655.58 142.53 L657.81 141.89 L660.03 141.25 L662.26 140.6 L664.48 139.95 L666.7 139.3 L668.92 138.64 L671.14 137.96 L673.35 137.27 L675.57 136.58 L677.79 135.89 L680 135.19 L682.21 134.51 L684.43 133.83 L686.65 133.17 L688.86 132.52 L691.08 131.9 L693.3 131.3 L695.52 130.72 L697.74 130.15 L699.97 129.6 L702.19 129.05 L704.42 128.52 L706.64 128.01 L708.87 127.51 L711.1 127.03 L713.32 126.56 L715.55 126.12 L717.77 125.7 L720 125.3 L722.23 124.93 L724.45 124.58 L726.68 124.25 L728.9 123.95 L731.13 123.67 L733.36 123.4 L735.58 123.15 L737.81 122.9 L740.03 122.67 L742.26 122.44 L744.48 122.22 L746.7 122 L748.92 121.79 L751.14 121.61 L753.35 121.44 L755.57 121.29 L757.79 121.14 L760 121 L762.21 120.86 L764.43 120.71 L766.65 120.56 L768.86 120.39 L771.08 120.21 L773.3 120 L775.54 119.77 L777.82 119.51 L780.12 119.24 L782.44 118.95 L784.76 118.65 L787.06 118.35 L789.34 118.05 L791.59 117.75 L793.79 117.46 L795.94 117.19 L798.01 116.93 L800 116.7 L801.92 116.48 L803.8 116.28 L805.63 116.08 L807.41 115.89 L809.15 115.71 L810.84 115.54 L812.48 115.38 L814.08 115.22 L815.63 115.08 L817.13 114.94 L818.59 114.82 L820 114.7 L821.34 114.59 L822.6 114.49 L823.79 114.4 L824.93 114.32 L826.01 114.25 L827.06 114.18 L828.09 114.13 L829.11 114.08 L830.12 114.05 L831.16 114.02 L832.21 114.01 L833.3 114 L834.41 114.01 L835.53 114.02 L836.65 114.05 L837.76 114.08 L838.88 114.13 L840 114.18 L841.12 114.25 L842.24 114.32 L843.35 114.4 L844.47 114.49 L845.59 114.59 L846.7 114.7 L847.81 114.81 L848.92 114.93 L850.03 115.05 L851.14 115.17 L852.25 115.31 L853.36 115.46 L854.46 115.62 L855.57 115.79 L856.68 115.99 L857.78 116.2 L858.89 116.44 L860 116.7 L861.13 117 L862.29 117.33 L863.48 117.7 L864.68 118.09 L865.88 118.49 L867.06 118.91 L868.23 119.34 L869.36 119.76 L870.44 120.17 L871.47 120.57 L872.42 120.95 L873.3 121.3 L874.05 121.59 L874.64 121.81 L875.13 121.98 L875.53 122.12 L875.89 122.25 L876.23 122.4 L876.6 122.58 L877.03 122.81 L877.54 123.12 L878.19 123.52 L879 124.04 L880 124.7 L881.18 125.48 L882.49 126.35 L883.91 127.3 L885.43 128.34 L887.05 129.45 L888.75 130.62 L890.52 131.87 L892.34 133.17 L894.22 134.53 L896.12 135.95 L898.06 137.4 L900 138.9 L901.99 140.47 L904.06 142.14 L906.2 143.89 L908.4 145.71 L910.65 147.58 L912.93 149.5 L915.24 151.44 L917.55 153.4 L919.87 155.36 L922.17 157.31 L924.45 159.22 L926.7 161.1"/>
<path d="M640 195 L642.23 193.92 L644.45 192.84 L646.68 191.76 L648.9 190.68 L651.13 189.6 L653.36 188.52 L655.58 187.44 L657.81 186.36 L660.03 185.27 L662.26 184.18 L664.48 183.09 L666.7 182 L668.92 180.89 L671.14 179.77 L673.35 178.64 L675.57 177.49 L677.79 176.35 L680 175.21 L682.21 174.07 L684.43 172.95 L686.65 171.85 L688.86 170.77 L691.08 169.72 L693.3 168.7 L695.52 167.7 L697.74 166.72 L699.97 165.75 L702.19 164.79 L704.42 163.85 L706.64 162.94 L708.87 162.04 L711.1 161.17 L713.32 160.33 L715.55 159.52 L717.77 158.74 L720 158 L722.23 157.3 L724.45 156.64 L726.68 156.01 L728.9 155.42 L731.13 154.85 L733.36 154.31 L735.58 153.79 L737.81 153.28 L740.03 152.78 L742.26 152.29 L744.48 151.8 L746.7 151.3 L748.94 150.8 L751.22 150.31 L753.51 149.83 L755.82 149.36 L758.12 148.89 L760.42 148.44 L762.69 148 L764.93 147.57 L767.12 147.15 L769.25 146.75 L771.31 146.37 L773.3 146 L775.2 145.65 L777.02 145.31 L778.76 144.99 L780.46 144.68 L782.1 144.39 L783.71 144.11 L785.3 143.84 L786.88 143.59 L788.45 143.34 L790.04 143.12 L791.65 142.9 L793.3 142.7 L794.99 142.51 L796.71 142.33 L798.45 142.17 L800.21 142.01 L801.97 141.88 L803.71 141.75 L805.43 141.64 L807.12 141.54 L808.76 141.46 L810.35 141.39 L811.86 141.34 L813.3 141.3 L814.65 141.28 L815.92 141.28 L817.12 141.3 L818.26 141.33 L819.36 141.38 L820.42 141.44 L821.46 141.51 L822.49 141.59 L823.51 141.68 L824.55 141.78 L825.61 141.89 L826.7 142 L827.81 142.12 L828.92 142.24 L830.03 142.38 L831.14 142.52 L832.25 142.68 L833.36 142.84 L834.46 143.01 L835.57 143.19 L836.68 143.38 L837.78 143.58 L838.89 143.78 L840 144 L841.11 144.22 L842.22 144.45 L843.32 144.68 L844.43 144.93 L845.54 145.18 L846.64 145.44 L847.75 145.71 L848.86 146 L849.97 146.3 L851.08 146.61 L852.19 146.95 L853.3 147.3 L854.41 147.67 L855.53 148.06 L856.65 148.46 L857.76 148.87 L858.88 149.3 L860 149.75 L861.12 150.21 L862.24 150.68 L863.35 151.17 L864.47 151.67 L865.59 152.18 L866.7 152.7 L867.79 153.22 L868.84 153.72 L869.88 154.22 L870.89 154.73 L871.91 155.25 L872.94 155.79 L873.99 156.36 L875.07 156.97 L876.21 157.63 L877.4 158.35 L878.66 159.14 L880 160 L881.39 160.92 L882.79 161.86 L884.22 162.84 L885.68 163.86 L887.18 164.93 L888.75 166.06 L890.38 167.25 L892.1 168.51 L893.91 169.85 L895.82 171.27 L897.85 172.79 L900 174.4 L902.31 176.14 L904.78 178.02 L907.39 180.01 L910.11 182.1 L912.93 184.27 L915.82 186.5 L918.75 188.77 L921.71 191.05 L924.66 193.34 L927.6 195.6 L930.48 197.83 L933.3 200"/>
<path d="M1033.3 81.1 L1034.03 82.96 L1034.73 84.83 L1035.42 86.7 L1036.1 88.58 L1036.78 90.46 L1037.47 92.34 L1038.17 94.21 L1038.9 96.06 L1039.66 97.9 L1040.46 99.73 L1041.3 101.53 L1042.2 103.3 L1043.17 105.06 L1044.2 106.84 L1045.29 108.61 L1046.42 110.37 L1047.58 112.12 L1048.76 113.85 L1049.95 115.55 L1051.14 117.2 L1052.31 118.82 L1053.45 120.37 L1054.55 121.87 L1055.6 123.3 L1056.61 124.65 L1057.58 125.92 L1058.54 127.11 L1059.47 128.26 L1060.39 129.35 L1061.29 130.41 L1062.19 131.45 L1063.09 132.48 L1063.98 133.5 L1064.88 134.54 L1065.78 135.6 L1066.7 136.7"/>
<path d="M1084.4 105.6 L1084.95 106.69 L1085.49 107.76 L1086.02 108.82 L1086.55 109.87 L1087.08 110.91 L1087.61 111.97 L1088.15 113.04 L1088.7 114.13 L1089.27 115.26 L1089.86 116.42 L1090.46 117.63 L1091.1 118.9 L1091.77 120.25 L1092.48 121.71 L1093.22 123.24 L1093.99 124.83 L1094.76 126.45 L1095.55 128.07 L1096.34 129.69 L1097.11 131.26 L1097.88 132.77 L1098.62 134.2 L1099.33 135.51 L1100 136.7 L1100.64 137.75 L1101.24 138.7 L1101.83 139.55 L1102.4 140.33 L1102.95 141.04 L1103.49 141.71 L1104.02 142.34 L1104.55 142.96 L1105.08 143.58 L1105.61 144.22 L1106.15 144.89 L1106.7 145.6"/>
<path d="M1440.4 396.7 L1438.28 396.69 L1436.15 396.68 L1434.02 396.68 L1431.88 396.67 L1429.75 396.66 L1427.61 396.65 L1425.48 396.64 L1423.36 396.63 L1421.25 396.62 L1419.15 396.62 L1417.07 396.61 L1415 396.6 L1412.95 396.59 L1410.92 396.58 L1408.9 396.58 L1406.9 396.57 L1404.9 396.56 L1402.91 396.55 L1400.93 396.54 L1398.95 396.53 L1396.97 396.53 L1394.98 396.52 L1393 396.51 L1391 396.5"/>
</g>
<g stroke="#2e6f8e">
<path d="M435.6 248.2 L434.29 247.91 L432.98 247.63 L431.66 247.35 L430.33 247.08 L429.01 246.81 L427.67 246.55 L426.33 246.3 L424.99 246.05 L423.64 245.81 L422.28 245.57 L420.92 245.34 L419.56 245.11 L418.18 244.89 L416.8 244.68 L415.42 244.47 L414.03 244.27 L412.63 244.08 L411.23 243.89 L409.82 243.7 L408.4 243.53 L406.98 243.36 L405.55 243.19 L404.11 243.03 L402.67 242.88 L401.22 242.73 L400.32 242.65" stroke-opacity="1" stroke-dasharray="1.389 2.292"/>
<path d="M400.32 242.65 L398.86 242.51 L397.39 242.38 L395.91 242.26 L394.43 242.14 L393.9 242.1"/>
</g>
<g stroke="#2e6f8e">
<path d="M434.75 250 L432.47 251.08 L430.2 252.17 L427.94 253.26 L425.7 254.35 L423.47 255.44 L421.25 256.54 L419.05 257.64 L416.86 258.74 L414.69 259.85 L412.53 260.95 L410.39 262.06 L408.26 263.18 L406.15 264.29 L404.05 265.41 L401.97 266.53 L399.91 267.65 L397.86 268.78 L395.83 269.9 L393.82 271.03 L391.82 272.16 L389.84 273.29 L387.88 274.43 L385.94 275.56 L384.01 276.7 L382.1 277.84 L380.21 278.98 L378.34 280.12 L376.49 281.27 L374.66 282.41 L372.84 283.56 L371.05 284.71 L369.27 285.86 L367.51 287.01 L365.78 288.16 L364.06 289.32 L362.36 290.47 L360.68 291.63 L359.03 292.79 L357.39 293.94 L355.78 295.1 L354.18 296.26 L352.61 297.43 L351.05 298.59 L349.52 299.75 L348.01 300.91 L346.52 302.08 L345.05 303.24 L343.61 304.41 L342.18 305.58 L340.78 306.74 L339.4 307.91 L338.04 309.08 L336.7 310.25 L335.39 311.42 L334.09 312.58 L332.82 313.75 L331.57 314.92 L330.35 316.09 L329.14 317.26 L327.96 318.43 L326.8 319.6 L326.49 319.92" stroke-opacity="1" stroke-dasharray="1.389 2.292"/>
<path d="M326.49 319.92 L325.36 321.09 L324.26 322.26 L323.17 323.43 L322.11 324.6 L321.07 325.77 L320.05 326.94 L320 327"/>
</g>
<g stroke="#2e6f8e">
<path d="M434.5 249.5 L432.55 251.08 L430.64 252.67 L428.76 254.25 L426.91 255.84 L425.1 257.42 L423.32 259.01 L421.58 260.59 L419.87 262.18 L418.19 263.76 L416.55 265.35 L414.95 266.94 L413.38 268.52 L411.84 270.11 L410.34 271.7 L408.88 273.28 L407.45 274.87 L406.05 276.46 L404.69 278.05 L403.37 279.63 L402.09 281.22 L400.84 282.81 L399.62 284.4 L398.45 285.99 L397.3 287.58 L396.2 289.17 L395.13 290.75 L394.1 292.34 L393.11 293.93 L392.15 295.52 L391.23 297.11 L390.34 298.7 L389.5 300.29 L388.69 301.88 L387.92 303.47 L387.18 305.06 L386.48 306.65 L385.82 308.24 L385.2 309.83 L384.61 311.42 L384.06 313.01 L383.55 314.6 L383.44 314.96" stroke-opacity="1" stroke-dasharray="1.389 2.292"/>
<path d="M383.44 314.96 L382.98 316.55 L382.55 318.14 L382.16 319.73 L381.9 320.9"/>
</g>
<g stroke="#2e6f8e">
<path d="M431.8 248.6 L430.51 250.2 L429.26 251.8 L428.04 253.39 L426.86 254.99 L425.71 256.59 L424.59 258.19 L423.51 259.79 L422.47 261.39 L421.46 262.99 L420.48 264.59 L419.54 266.19 L418.64 267.78 L417.77 269.38 L416.93 270.98 L416.14 272.58 L415.37 274.19 L414.65 275.79 L413.96 277.39 L413.3 278.99 L412.68 280.59 L412.1 282.19 L411.55 283.79 L411.04 285.39 L410.56 286.99 L410.12 288.59 L409.72 290.19 L409.35 291.8 L409.02 293.4 L408.73 295 L408.47 296.6 L408.25 298.2 L408.06 299.8 L407.91 301.41 L407.8 303.01 L407.72 304.61 L407.68 306.21 L407.68 307.81 L407.71 309.41 L407.78 311.02 L407.88 312.62 L408.03 314.22 L408.2 315.82 L408.42 317.42 L408.67 319.03 L408.96 320.63 L409.28 322.23 L409.64 323.83 L410.03 325.44 L410.47 327.04 L410.93 328.64 L411.44 330.24 L411.98 331.84 L412.56 333.45 L413.17 335.05 L413.82 336.65 L414.5 338.25 L415.22 339.85 L415.98 341.45 L416.77 343.06 L417.6 344.66 L418.46 346.26 L419.36 347.86 L420.29 349.46 L421.26 351.06 L422.27 352.66 L423.31 354.27 L424.38 355.87 L425.49 357.47 L426.64 359.07 L427.82 360.67 L428.54 361.63" stroke-opacity="1" stroke-dasharray="1.389 2.292"/>
<path d="M428.54 361.63 L429.78 363.23 L431.05 364.83 L432 366"/>
</g>
<g stroke="#2e6f8e">
<path d="M434.5 248.5 L433.11 250.11 L431.75 251.73 L430.42 253.34 L429.13 254.96 L427.88 256.57 L426.66 258.19 L425.47 259.8 L424.33 261.42 L423.21 263.03 L422.14 264.65 L421.1 266.26 L420.09 267.88 L419.12 269.49 L418.19 271.11 L417.29 272.72 L416.43 274.34 L415.61 275.95 L414.82 277.57 L414.07 279.18 L413.36 280.8 L412.68 282.42 L412.04 284.03 L411.43 285.65 L410.86 287.26 L410.33 288.88 L409.84 290.49 L409.38 292.11 L408.96 293.73 L408.58 295.34 L408.23 296.96 L407.92 298.57 L407.65 300.19 L407.41 301.81 L407.21 303.42 L407.05 305.04 L406.93 306.66 L406.84 308.27 L406.79 309.89 L406.78 311.5 L406.8 313.12 L406.86 314.74 L406.96 316.35 L407.09 317.97 L407.27 319.59 L407.47 321.2 L407.72 322.82 L408 324.43 L408.32 326.05 L408.68 327.67 L409.08 329.28 L409.51 330.9 L409.98 332.52 L410.48 334.13 L411.02 335.75 L411.6 337.36 L412.22 338.98 L412.87 340.6 L413.56 342.21 L414.28 343.83 L415.04 345.44 L415.84 347.06 L416.68 348.68 L417.55 350.29 L418.46 351.91 L419.4 353.52 L420.38 355.14 L421.4 356.76 L422.45 358.37 L423.53 359.99 L424.66 361.6 L425.82 363.22 L427.01 364.83 L428.24 366.45 L429.51 368.07 L430.81 369.68 L432.14 371.3 L433.21 372.55" stroke-opacity="1" stroke-dasharray="1.389 2.292"/>
<path d="M433.21 372.55 L434.61 374.17 L436.04 375.78 L437.51 377.4 L439 379"/>
</g>
<g stroke="#2e6f8e">
<path d="M438.4 248.6 L438.96 249.44 L439.53 250.28 L440.1 251.13 L440.68 251.98 L441.27 252.83 L441.86 253.69 L442.46 254.55 L443.06 255.42 L443.67 256.29 L444.29 257.16 L444.91 258.03 L445.54 258.91 L446.18 259.8 L446.83 260.69 L447.48 261.58 L448.14 262.47 L448.81 263.36 L449.49 264.26 L450.18 265.17 L450.87 266.07 L451.57 266.98 L452.29 267.89 L453.01 268.81 L453.73 269.72 L454.47 270.64 L455.22 271.57 L455.98 272.49 L456.74 273.42 L457.52 274.35 L458.3 275.28 L459.1 276.22 L459.9 277.15 L460.72 278.09 L461.54 279.03 L462.38 279.98 L462.42 280.02" stroke-opacity="1" stroke-dasharray="1.389 2.292"/>
<path d="M462.42 280.02 L463.26 280.97 L464.12 281.92 L464.99 282.87 L465.86 283.82 L466.75 284.77 L467.65 285.73 L468 286.1"/>
</g>
<g stroke="#2e6f8e">
<path d="M435.6 252.6 L435.85 253.65 L436.12 254.71 L436.39 255.77 L436.68 256.84 L436.98 257.9 L437.3 258.97 L437.62 260.04 L437.7 260.31" stroke-opacity="1" stroke-dasharray="1.389 2.292"/>
<path d="M437.7 260.31 L438.05 261.38 L438.4 262.46 L438.77 263.54 L438.9 263.9"/>
</g>
<g stroke="#2e6f8e">
<path d="M435.25 250 L434.84 251.35 L434.46 252.7 L434.1 254.05 L433.77 255.41 L433.45 256.76 L433.16 258.12 L432.89 259.48 L432.65 260.84 L432.43 262.2 L432.24 263.56 L432.07 264.92 L431.92 266.29 L431.79 267.66 L431.7 269.02 L431.62 270.39 L431.57 271.76 L431.55 273.14 L431.55 274.51 L431.57 275.88 L431.62 277.26 L431.69 278.63 L431.79 280.01 L431.92 281.38 L432.07 282.76 L432.24 284.14 L432.44 285.52 L432.67 286.9 L432.92 288.28 L433.19 289.66 L433.49 291.05 L433.82 292.43 L434.17 293.81 L434.55 295.2 L434.95 296.58 L435.38 297.97 L435.83 299.35 L436.31 300.74 L436.82 302.13 L437.35 303.51 L437.91 304.9 L438.49 306.29 L439.1 307.68 L439.73 309.07 L440.39 310.45 L441.07 311.84 L441.78 313.23 L442.52 314.62 L443.28 316.01 L444.06 317.4 L444.88 318.79 L445.71 320.18 L446.57 321.57 L447.46 322.96 L448.37 324.35 L449.31 325.73 L450.27 327.12 L451.26 328.51 L452.27 329.9 L453.31 331.29 L454.37 332.68 L455.46 334.07 L456.57 335.45 L457.71 336.84 L458.87 338.23 L460.05 339.62 L461.26 341 L462.49 342.39 L463.75 343.77 L465.03 345.16 L466.34 346.54 L467.66 347.93 L469.02 349.31 L470.39 350.69 L471.79 352.07 L473.21 353.46 L474.66 354.84 L476.13 356.22 L477.62 357.59 L479.14 358.97 L480.67 360.35 L482.23 361.73 L483.81 363.1 L485.42 364.48 L487.04 365.85 L488.69 367.22 L490.36 368.59 L492.05 369.96 L493.77 371.33 L495.5 372.7 L497.25 374.07 L499.03 375.43 L500.83 376.8 L502.64 378.16 L504.48 379.52 L506.34 380.88 L507.68 381.85" stroke-opacity="1" stroke-dasharray="1.389 2.292"/>
<path d="M507.68 381.85 L509.57 383.21 L511.48 384.57 L513.41 385.92 L515.36 387.28 L517.33 388.63 L519.32 389.98 L521.32 391.33 L523.35 392.67 L525.39 394.02 L527.45 395.36 L529.53 396.7 L530 397"/>
</g>
<g stroke="#2e6f8e">
<path d="M435.75 249 L435.33 250.35 L434.93 251.7 L434.55 253.05 L434.2 254.4 L433.87 255.76 L433.56 257.11 L433.27 258.47 L433.01 259.83 L432.78 261.19 L432.56 262.55 L432.37 263.92 L432.21 265.28 L432.07 266.65 L431.95 268.01 L431.86 269.38 L431.79 270.75 L431.74 272.12 L431.72 273.49 L431.73 274.87 L431.76 276.24 L431.82 277.62 L431.9 278.99 L432 280.37 L432.13 281.75 L432.29 283.13 L432.47 284.5 L432.67 285.88 L432.91 287.27 L433.16 288.65 L433.44 290.03 L433.75 291.41 L434.09 292.8 L434.44 294.18 L434.83 295.56 L435.24 296.95 L435.67 298.34 L436.13 299.72 L436.62 301.11 L437.13 302.5 L437.67 303.88 L438.23 305.27 L438.82 306.66 L439.43 308.05 L440.07 309.44 L440.74 310.82 L441.43 312.21 L442.15 313.6 L442.89 314.99 L443.65 316.38 L444.45 317.77 L445.26 319.16 L446.11 320.55 L446.97 321.94 L447.87 323.33 L448.79 324.72 L449.73 326.11 L450.7 327.5 L451.69 328.89 L452.71 330.28 L453.75 331.66 L454.82 333.05 L455.92 334.44 L457.03 335.83 L458.18 337.22 L459.34 338.6 L460.53 339.99 L461.75 341.38 L462.99 342.76 L464.25 344.15 L465.54 345.53 L466.85 346.92 L468.18 348.3 L469.54 349.69 L470.92 351.07 L471.02 351.17" stroke-opacity="1" stroke-dasharray="1.389 2.292"/>
<path d="M471.02 351.17 L472.43 352.55 L473.86 353.93 L475.31 355.31 L476.79 356.69 L478.29 358.07 L479.81 359.45 L481.35 360.82 L482.92 362.2 L484.51 363.58 L486.12 364.95 L487.75 366.32 L489.41 367.7 L491 369"/>
</g>
<g stroke="#2e6f8e">
<path d="M434 252 L434.46 252.93 L434.93 253.85 L435.4 254.79 L435.89 255.72 L436.38 256.66 L436.89 257.6 L437.4 258.55 L437.92 259.5 L438.45 260.45 L438.99 261.41 L439.54 262.37 L440.09 263.33 L440.66 264.29 L441.24 265.26 L441.83 266.23 L442.43 267.2 L443.04 268.18 L443.66 269.16 L444.3 270.14 L444.94 271.12 L445.59 272.11 L446.26 273.09 L446.94 274.08 L447.63 275.08 L448.33 276.07 L449.04 277.07 L449.76 278.07 L450.49 279.07 L451.24 280.07 L452 281.08 L452.77 282.08 L453.55 283.09 L454.35 284.1 L455.16 285.11 L455.98 286.13 L456.81 287.14 L457.66 288.16 L458.51 289.18 L459.38 290.2 L460.27 291.22 L461.16 292.24 L462.07 293.27 L462.99 294.29 L463.93 295.32 L464.87 296.35 L465.84 297.37 L466.81 298.4 L467.79 299.44 L468.79 300.47 L469.81 301.5 L470.83 302.53 L471.87 303.57 L472.92 304.6 L473.98 305.64 L475.06 306.67 L476.15 307.71 L477.25 308.75 L478.37 309.79 L479.5 310.83 L480.64 311.87 L481.8 312.9 L482.97 313.94 L484.15 314.98 L485.34 316.03 L486.55 317.07 L487.77 318.11 L489 319.15 L490.25 320.19 L491.51 321.23 L492.78 322.27 L494.06 323.31 L495.36 324.35 L496.67 325.39 L497.99 326.43 L499.33 327.47 L500.68 328.51 L502.03 329.55 L503.41 330.59 L504.79 331.63 L506.19 332.66 L507.6 333.7 L509.02 334.74 L510.45 335.77 L511.89 336.81 L513.35 337.84 L514.82 338.88 L516.3 339.91 L517.79 340.94 L519.29 341.97 L520.81 343 L522.33 344.03 L523.87 345.06 L525.42 346.09 L526.98 347.11 L528.54 348.14 L530.13 349.16 L531.72 350.18 L533.32 351.2 L534.93 352.22 L536.56 353.24 L538.19 354.25 L539.83 355.27 L541.49 356.28 L543.15 357.29 L544.82 358.3 L546.51 359.31 L548.2 360.31 L549.9 361.32 L551.61 362.32 L553.33 363.32 L555.06 364.31 L556.8 365.31 L558.55 366.3 L560.3 367.29 L562.07 368.28 L563.84 369.27 L565.62 370.25 L567.41 371.23 L569.21 372.21 L571.01 373.19 L572.83 374.16 L574.65 375.13 L576.47 376.1 L578.31 377.06 L580.15 378.03 L582 378.99 L583.86 379.94 L585.72 380.9 L587.59 381.84 L589.46 382.79 L591.34 383.74 L593.23 384.68 L595.12 385.61 L597.02 386.55 L598.92 387.47 L600.83 388.4 L602.74 389.32 L604.66 390.24 L606.59 391.16 L608.52 392.07 L610.45 392.97 L612.38 393.88 L614.33 394.78 L616.27 395.67 L618.22 396.56 L620.17 397.45 L622.13 398.33 L624.09 399.21 L626.05 400.08 L628.01 400.95 L628.31 401.08" stroke-opacity="1" stroke-dasharray="1.389 2.292"/>
<path d="M628.31 401.08 L630.28 401.94 L632.25 402.8 L634.22 403.65 L636.19 404.5 L638.17 405.34 L640.15 406.18 L642.13 407.01 L644.11 407.84 L646.1 408.66 L648.08 409.48 L650.07 410.29 L652.05 411.09 L654.04 411.89 L656.02 412.69 L658.01 413.48 L660 414.26 L661.9 415"/>
</g>
<g stroke="#86d549">
<path d="M706.55 245.6 L705.39 244.9 L704.23 244.21 L703.07 243.52 L701.91 242.84 L700.75 242.16 L699.6 241.48 L698.44 240.82 L697.28 240.15 L696.12 239.5 L694.96 238.84 L693.8 238.2 L692.64 237.56 L691.48 236.92 L690.32 236.29 L689.16 235.67 L687.99 235.05 L686.83 234.44 L685.66 233.84 L684.5 233.24 L683.33 232.65 L682.16 232.06 L680.99 231.48 L679.82 230.91 L678.64 230.34 L677.47 229.78 L676.29 229.22 L675.1 228.68 L673.92 228.14 L672.73 227.6 L671.55 227.07 L670.35 226.55 L669.16 226.04 L667.96 225.54 L666.76 225.04 L665.55 224.55 L664.34 224.06 L663.13 223.58 L661.92 223.11 L660.7 222.65 L659.47 222.2 L658.24 221.75 L657.01 221.31 L655.77 220.88 L654.53 220.46 L653.28 220.04 L652.03 219.63 L650.77 219.23 L649.51 218.84 L648.24 218.46 L646.97 218.08 L645.68 217.72 L644.4 217.36 L643.11 217.01 L641.81 216.66 L640.5 216.33 L639.19 216 L637.87 215.69 L636.55 215.38 L635.21 215.08 L633.88 214.79 L632.53 214.51 L631.17 214.23 L629.81 213.97 L628.44 213.71 L627.07 213.47 L625.68 213.23 L624.29 213 L622.88 212.78 L621.47 212.57 L620.05 212.37 L618.63 212.18 L617.19 211.99 L615.74 211.82 L614.29 211.65 L612.83 211.5 L611.35 211.35 L609.87 211.21 L608.38 211.09 L606.88 210.97 L605.37 210.86 L603.84 210.76 L602.31 210.67 L600.77 210.59 L599.22 210.52 L597.66 210.46 L596.09 210.4 L594.51 210.36 L592.91 210.33 L591.31 210.3 L589.7 210.29 L588.07 210.28 L586.44 210.29 L584.79 210.3 L583.14 210.33 L581.47 210.36 L579.79 210.4 L578.1 210.46 L576.4 210.52 L574.69 210.59 L572.97 210.67 L571.24 210.76 L569.49 210.86 L567.74 210.97 L565.97 211.09 L564.2 211.21 L562.41 211.35 L560.61 211.5 L558.8 211.65 L556.98 211.82 L555.15 211.99 L553.3 212.17 L551.45 212.37 L549.59 212.57 L547.71 212.78 L545.83 213 L543.93 213.23 L542.02 213.46 L540.11 213.71 L538.18 213.97 L536.24 214.23 L534.29 214.5 L532.33 214.79 L530.36 215.08 L528.38 215.38 L526.4 215.69 L524.4 216 L522.39 216.33 L520.37 216.66 L518.34 217 L516.31 217.35 L514.26 217.71 L512.21 218.08 L510.14 218.46 L508.07 218.84 L505.99 219.23 L503.9 219.63 L501.8 220.04 L499.7 220.45 L497.58 220.88 L495.46 221.31 L493.33 221.75 L491.19 222.19 L489.05 222.65 L486.9 223.11 L484.74 223.58 L482.57 224.06 L480.4 224.54 L478.22 225.03 L476.04 225.53 L473.85 226.04 L471.65 226.55 L469.45 227.07 L468.48 227.3" stroke-opacity="1" stroke-dasharray="1.389 2.292"/>
<path d="M468.48 227.3 L466.27 227.83 L464.06 228.37 L461.84 228.91 L459.62 229.46 L457.39 230.02 L455.15 230.58 L453.9 230.9"/>
</g>
<g stroke="#50c46a">
<path d="M637.57 278.6 L636.07 278.3 L634.56 278 L633.06 277.7 L631.55 277.41 L630.05 277.12 L628.54 276.84 L627.04 276.55 L625.53 276.28 L624.02 276 L622.51 275.73 L621.01 275.46 L619.5 275.19 L617.99 274.93 L616.48 274.67 L614.97 274.42 L613.45 274.16 L611.94 273.92 L610.43 273.67 L608.91 273.43 L607.4 273.19 L605.88 272.96 L604.36 272.73 L602.84 272.5 L601.32 272.28 L599.8 272.06 L598.28 271.84 L596.76 271.63 L595.23 271.42 L593.7 271.21 L592.18 271.01 L590.65 270.82 L589.12 270.62 L587.59 270.43 L586.05 270.25 L584.52 270.06 L582.98 269.89 L581.45 269.71 L579.91 269.54 L578.37 269.38 L576.82 269.21 L575.28 269.06 L573.74 268.9 L572.19 268.75 L570.64 268.6 L569.09 268.46 L567.53 268.32 L565.98 268.19 L564.42 268.06 L562.86 267.93 L561.3 267.81 L559.74 267.69 L558.18 267.58 L556.61 267.47 L555.04 267.36 L553.47 267.26 L551.9 267.16 L550.32 267.07 L548.74 266.98 L547.16 266.89 L545.58 266.81 L544 266.74 L542.41 266.66 L540.82 266.59 L539.23 266.53 L537.64 266.47 L536.04 266.41 L534.44 266.36 L532.84 266.32 L531.24 266.27 L529.63 266.23 L528.02 266.2 L526.41 266.17 L524.8 266.14 L523.18 266.12 L521.56 266.1 L519.94 266.09 L518.32 266.08 L516.69 266.07 L515.06 266.07 L513.43 266.08 L511.8 266.09 L510.16 266.1 L508.52 266.11 L506.88 266.13 L505.23 266.16 L503.59 266.19 L501.93 266.22 L500.28 266.26 L498.63 266.3 L496.97 266.35 L495.31 266.4 L493.64 266.45 L491.98 266.51 L490.31 266.57 L488.63 266.64 L488.15 266.66" stroke-opacity="1" stroke-dasharray="1.389 2.292"/>
<path d="M488.15 266.66 L486.47 266.73 L484.79 266.81 L483.11 266.89 L482.9 266.9"/>
</g>
<g stroke="#2ab07f">
<path d="M529.5 318.65 L527.89 318.43 L526.28 318.21 L524.67 317.99 L523.06 317.77 L521.45 317.55 L519.85 317.33 L518.24 317.11 L516.63 316.89 L515.03 316.67 L513.42 316.45 L511.81 316.24 L510.21 316.02 L508.61 315.8 L507 315.58 L505.4 315.37 L503.8 315.15 L502.19 314.93 L500.59 314.72 L498.99 314.5 L497.39 314.29 L495.79 314.07 L494.19 313.86 L492.59 313.64 L490.99 313.43 L489.4 313.22 L487.8 313.01 L486.2 312.8 L484.6 312.58 L483.01 312.37 L481.41 312.16 L479.82 311.96 L478.22 311.75 L476.63 311.54 L475.04 311.33 L473.44 311.13 L471.85 310.92 L470.26 310.71 L468.66 310.51 L467.07 310.31 L465.48 310.1 L463.89 309.9 L462.3 309.7 L460.71 309.5 L459.12 309.3 L457.53 309.1 L455.94 308.9 L454.35 308.71 L452.77 308.51 L451.18 308.31 L449.59 308.12 L448 307.92 L446.42 307.73 L444.83 307.54 L443.25 307.35 L441.66 307.16 L440.07 306.97 L438.49 306.78 L436.9 306.6 L435.32 306.41 L433.74 306.23 L432.15 306.04 L430.57 305.86 L428.98 305.68 L427.4 305.5 L425.82 305.32 L424.24 305.14 L422.65 304.96 L421.07 304.79 L419.49 304.61 L417.91 304.44 L416.32 304.27 L414.74 304.09 L413.16 303.92 L411.58 303.76 L410 303.59 L408.42 303.42 L406.83 303.26 L405.25 303.09 L403.67 302.93 L402.09 302.77 L400.51 302.61 L398.93 302.45 L397.35 302.3 L395.77 302.14 L394.18 301.99 L392.6 301.83 L391.02 301.68 L389.44 301.53 L387.86 301.38 L386.28 301.24 L384.7 301.09 L383.11 300.95 L381.53 300.8 L379.95 300.66 L378.37 300.52 L376.79 300.38 L375.2 300.25 L373.62 300.11 L372.04 299.98 L370.46 299.84 L368.87 299.71 L367.29 299.58 L365.71 299.46 L364.12 299.33 L362.54 299.21 L360.95 299.08 L359.37 298.96 L357.78 298.84 L356.2 298.73 L354.61 298.61 L353.03 298.49 L351.44 298.38 L349.85 298.27 L348.27 298.16 L346.68 298.05 L345.09 297.95 L343.5 297.84 L341.91 297.74 L340.32 297.64 L338.73 297.54 L337.14 297.44 L335.55 297.35 L333.96 297.25 L332.37 297.16 L330.78 297.07 L329.18 296.98 L327.59 296.89 L326 296.81 L324.4 296.72 L322.81 296.64 L321.21 296.56" stroke-opacity="1" stroke-dasharray="1.389 2.292"/>
<path d="M1483.32 296.48 L1481.67 296.41 L1480.01 296.33 L1478.35 296.26 L1476.7 296.19 L1475.04 296.12 L1473.38 296.05 L1471.73 295.99 L1470.08 295.93 L1468.42 295.86 L1466.77 295.8 L1465.12 295.75 L1463.47 295.69 L1461.82 295.64 L1460.17 295.58 L1458.52 295.53 L1456.87 295.49 L1455.23 295.44 L1453.58 295.4 L1451.93 295.35 L1450.29 295.31 L1448.64 295.27 L1447 295.24 L1445.36 295.2 L1443.72 295.17 L1442.07 295.14 L1440.43 295.11 L1439.09 295.09" stroke-opacity="1" stroke-dasharray="1.389 2.292"/>
<path d="M1439.09 295.09 L1437.46 295.06 L1435.82 295.04 L1434.18 295.01 L1433 295"/>
</g>
<path d="M481.9 233.3L492.2 225.3M335 303.3L326.7 313.1M553.1 326.1L558 335.2M539.3 343.4L544.2 351.4M475.6 367.7L486.2 363.7M438.7 379.9L440 390.1M460.9 381.7L464.9 393M746.1 348.9L757.2 366.1M812.8 240.4L799.2 239" stroke="#707070"/>
</g>
<g id="endmarks" clip-path="url(#skyclip)">
<rect x="491.1" y="224.2" width="2.2" height="2.2" fill="#707070"/>
<rect x="325.6" y="312" width="2.2" height="2.2" fill="#707070"/>
<rect x="556.9" y="334.1" width="2.2" height="2.2" fill="#707070"/>
<rect x="543.1" y="350.3" width="2.2" height="2.2" fill="#707070"/>
<rect x="485.1" y="362.6" width="2.2" height="2.2" fill="#707070"/>
<rect x="438.9" y="389" width="2.2" height="2.2" fill="#707070"/>
<rect x="463.8" y="391.9" width="2.2" height="2.2" fill="#707070"/>
<rect x="756.1" y="365" width="2.2" height="2.2" fill="#707070"/>
<rect x="798.1" y="237.9" width="2.2" height="2.2" fill="#707070"/>
<rect x="392.8" y="241" width="2.2" height="2.2" fill="#ff6347"/>
<rect x="318.9" y="325.9" width="2.2" height="2.2" fill="#ff6347"/>
<rect x="380.8" y="319.8" width="2.2" height="2.2" fill="#ff6347"/>
<rect x="430.9" y="364.9" width="2.2" height="2.2" fill="#ff6347"/>
<rect x="437.9" y="377.9" width="2.2" height="2.2" fill="#ff6347"/>
<rect x="466.9" y="285" width="2.2" height="2.2" fill="#ff6347"/>
<rect x="437.8" y="262.8" width="2.2" height="2.2" fill="#ff6347"/>
<rect x="528.9" y="395.9" width="2.2" height="2.2" fill="#ff6347"/>
<rect x="489.9" y="367.9" width="2.2" height="2.2" fill="#ff6347"/>
<rect x="660.8" y="413.9" width="2.2" height="2.2" fill="#ff6347"/>
<rect x="452.8" y="229.8" width="2.2" height="2.2" fill="#ff6347"/>
<rect x="481.8" y="265.8" width="2.2" height="2.2" fill="#ff6347"/>
<rect x="1431.9" y="293.9" width="2.2" height="2.2" fill="#ff6347"/>
</g>
<g id="gridlabels" font-family="'DejaVu Sans','Liberation Sans',sans-serif" font-size="9.72" fill="#787878" text-anchor="middle">
<text x="902.3" y="329.9">+0<tspan font-size="8.26" dx="1.8" dy="-2.6">°</tspan></text>
<text x="804.53" y="329.9">+30<tspan font-size="8.26" dx="1.8" dy="-2.6">°</tspan></text>
<text x="706.76" y="329.9">+60<tspan font-size="8.26" dx="1.8" dy="-2.6">°</tspan></text>
<text x="608.99" y="329.9">+90<tspan font-size="8.26" dx="1.8" dy="-2.6">°</tspan></text>
<text x="511.22" y="329.9">+120<tspan font-size="8.26" dx="1.8" dy="-2.6">°</tspan></text>
<text x="413.45" y="329.9">+150<tspan font-size="8.26" dx="1.8" dy="-2.6">°</tspan></text>
<text x="315.68" y="329.9">+180<tspan font-size="8.26" dx="1.8" dy="-2.6">°</tspan></text>
<text x="1391.15" y="329.9">+210<tspan font-size="8.26" dx="1.8" dy="-2.6">°</tspan></text>
<text x="1293.38" y="329.9">+240<tspan font-size="8.26" dx="1.8" dy="-2.6">°</tspan></text>
<text x="1195.61" y="329.9">+270<tspan font-size="8.26" dx="1.8" dy="-2.6">°</tspan></text>
<text x="1097.84" y="329.9">+300<tspan font-size="8.26" dx="1.8" dy="-2.6">°</tspan></text>
<text x="1000.07" y="329.9">+330<tspan font-size="8.26" dx="1.8" dy="-2.6">°</tspan></text>
<text x="1488.92" y="329.9">+180<tspan font-size="8.26" dx="1.8" dy="-2.6">°</tspan></text>
<text x="903.2" y="24.89">+90<tspan font-size="8.26" dx="1.8" dy="-2.6">°</tspan></text>
<text x="903.2" y="122.66">+60<tspan font-size="8.26" dx="1.8" dy="-2.6">°</tspan></text>
<text x="903.2" y="220.43">+30<tspan font-size="8.26" dx="1.8" dy="-2.6">°</tspan></text>
<text x="903.2" y="428.37">−30<tspan font-size="8.26" dx="1.8" dy="-2.6">°</tspan></text>
<text x="903.2" y="526.14">−60<tspan font-size="8.26" dx="1.8" dy="-2.6">°</tspan></text>
<text x="903.2" y="623.91">−90<tspan font-size="8.26" dx="1.8" dy="-2.6">°</tspan></text>
</g>
<g id="radiants" clip-path="url(#skyclip)" fill="none">
<path d="M462.3 225.3 L461.43 225.32 L460.52 225.36 L459.56 225.44 L458.58 225.55 L457.55 225.69 L456.49 225.87 L455.39 226.07 L454.27 226.3 L453.11 226.57 L451.92 226.86 L450.71 227.18 L449.48 227.54 L448.22 227.92 L446.93 228.32 L445.64 228.76 L444.32 229.22 L442.99 229.71 L441.65 230.22 L440.3 230.76 L438.94 231.32 L437.57 231.9 L436.2 232.5 L434.84 233.13 L433.47 233.78 L432.11 234.44 L430.75 235.13 L429.41 235.83 L428.07 236.55 L426.75 237.29 L425.44 238.04 L424.15 238.8 L422.88 239.58 L421.63 240.37 L420.4 241.17 L419.2 241.97 L418.03 242.79 L416.89 243.62 L415.77 244.45 L414.69 245.29 L413.65 246.13 L412.63 246.98 L411.66 247.83 L410.72 248.68 L409.82 249.53 L408.96 250.38 L408.15 251.23 L407.37 252.07 L406.64 252.91 L405.95 253.75 L405.31 254.58 L404.71 255.41 L404.15 256.23 L403.64 257.04 L403.18 257.84 L402.77 258.63 L402.4 259.41 L402.07 260.18 L401.79 260.93 L401.56 261.68 L401.38 262.4 L401.24 263.11 L401.14 263.81 L401.09 264.49 L401.08 265.15 L401.12 265.79 L401.2 266.41 L401.32 267.02 L401.49 267.6 L401.69 268.16 L401.94 268.7 L402.22 269.22 L402.55 269.71 L402.91 270.18 L403.31 270.63 L403.74 271.05 L404.21 271.45 L404.71 271.82 L405.24 272.16 L405.81 272.48 L406.4 272.77 L407.03 273.04 L407.68 273.28 L408.36 273.49 L409.07 273.67 L409.8 273.83 L410.56 273.96 L411.34 274.06 L412.14 274.13 L412.96 274.17 L413.8 274.19 L414.66 274.17 L415.54 274.13 L416.43 274.06 L417.34 273.96 L418.27 273.83 L419.2 273.67 L420.16 273.49 L421.12 273.28 L422.1 273.04 L423.08 272.77 L424.08 272.48 L425.08 272.16 L426.09 271.82 L427.11 271.45 L428.13 271.05 L429.16 270.63 L430.19 270.18 L431.23 269.71 L432.27 269.22 L433.31 268.7 L434.36 268.16 L435.4 267.6 L436.44 267.02 L437.49 266.41 L438.53 265.79 L439.57 265.15 L440.61 264.49 L441.64 263.81 L442.67 263.11 L443.69 262.4 L444.71 261.68 L445.72 260.93 L446.72 260.18 L447.72 259.41 L448.7 258.63 L449.68 257.84 L450.64 257.04 L451.59 256.23 L452.54 255.41 L453.46 254.58 L454.38 253.75 L455.27 252.91 L456.16 252.07 L457.02 251.23 L457.87 250.38 L458.7 249.53 L459.51 248.68 L460.3 247.83 L461.06 246.98 L461.81 246.13 L462.53 245.29 L463.22 244.45 L463.89 243.62 L464.53 242.79 L465.15 241.97 L465.73 241.17 L466.29 240.37 L466.81 239.58 L467.31 238.8 L467.77 238.04 L468.19 237.29 L468.58 236.55 L468.93 235.83 L469.25 235.13 L469.53 234.44 L469.77 233.78 L469.97 233.13 L470.13 232.5 L470.24 231.9 L470.32 231.32 L470.35 230.76 L470.34 230.22 L470.28 229.71 L470.18 229.22 L470.03 228.76 L469.84 228.32 L469.6 227.92 L469.31 227.54 L468.98 227.18 L468.6 226.86 L468.18 226.57 L467.71 226.3 L467.19 226.07 L466.63 225.87 L466.02 225.69 L465.36 225.55 L464.66 225.44 L463.92 225.36 L463.13 225.32Z" stroke="#2e6f8e" stroke-width="2.08" stroke-linejoin="round"/>
<path d="M723.5 215.33 L722.64 215.34 L721.76 215.39 L720.87 215.47 L719.96 215.58 L719.03 215.72 L718.09 215.9 L717.14 216.1 L716.17 216.34 L715.2 216.61 L714.22 216.9 L713.23 217.23 L712.24 217.58 L711.24 217.96 L710.24 218.38 L709.23 218.81 L708.23 219.28 L707.23 219.77 L706.23 220.28 L705.24 220.82 L704.25 221.39 L703.27 221.98 L702.3 222.59 L701.34 223.22 L700.39 223.87 L699.46 224.54 L698.54 225.22 L697.64 225.93 L696.75 226.65 L695.88 227.39 L695.04 228.14 L694.21 228.91 L693.41 229.69 L692.63 230.48 L691.88 231.28 L691.15 232.09 L690.46 232.91 L689.78 233.74 L689.14 234.57 L688.53 235.41 L687.95 236.26 L687.4 237.1 L686.89 237.95 L686.4 238.8 L685.95 239.65 L685.54 240.5 L685.16 241.35 L684.81 242.2 L684.51 243.04 L684.23 243.88 L684 244.71 L683.79 245.53 L683.63 246.35 L683.5 247.16 L683.41 247.96 L683.35 248.75 L683.34 249.52 L683.35 250.29 L683.4 251.04 L683.49 251.78 L683.62 252.5 L683.78 253.21 L683.97 253.9 L684.2 254.58 L684.46 255.23 L684.75 255.87 L685.07 256.49 L685.43 257.09 L685.82 257.67 L686.24 258.23 L686.69 258.76 L687.16 259.28 L687.67 259.77 L688.2 260.24 L688.76 260.68 L689.34 261.1 L689.95 261.49 L690.58 261.86 L691.23 262.21 L691.9 262.52 L692.6 262.81 L693.32 263.08 L694.05 263.31 L694.8 263.52 L695.57 263.71 L696.35 263.86 L697.15 263.99 L697.96 264.09 L698.78 264.16 L699.62 264.2 L700.47 264.21 L701.32 264.2 L702.18 264.16 L703.06 264.09 L703.93 263.99 L704.82 263.86 L705.7 263.71 L706.59 263.52 L707.49 263.31 L708.38 263.08 L709.28 262.81 L710.17 262.52 L711.07 262.21 L711.96 261.86 L712.85 261.49 L713.73 261.1 L714.61 260.68 L715.48 260.24 L716.35 259.77 L717.21 259.28 L718.06 258.76 L718.9 258.23 L719.73 257.67 L720.55 257.09 L721.36 256.49 L722.16 255.87 L722.95 255.23 L723.72 254.58 L724.47 253.9 L725.21 253.21 L725.94 252.5 L726.64 251.78 L727.33 251.04 L728.01 250.29 L728.66 249.52 L729.29 248.75 L729.91 247.96 L730.5 247.16 L731.08 246.35 L731.63 245.53 L732.16 244.71 L732.66 243.88 L733.15 243.04 L733.61 242.2 L734.04 241.35 L734.45 240.5 L734.84 239.65 L735.2 238.8 L735.53 237.95 L735.84 237.1 L736.12 236.26 L736.37 235.41 L736.6 234.57 L736.8 233.74 L736.97 232.91 L737.11 232.09 L737.22 231.28 L737.3 230.48 L737.35 229.69 L737.38 228.91 L737.37 228.14 L737.33 227.39 L737.27 226.65 L737.17 225.93 L737.04 225.22 L736.88 224.54 L736.69 223.87 L736.48 223.22 L736.23 222.59 L735.95 221.98 L735.63 221.39 L735.29 220.82 L734.92 220.28 L734.52 219.77 L734.09 219.28 L733.63 218.81 L733.14 218.38 L732.62 217.96 L732.08 217.58 L731.5 217.23 L730.9 216.9 L730.27 216.61 L729.61 216.34 L728.93 216.1 L728.23 215.9 L727.49 215.72 L726.74 215.58 L725.96 215.47 L725.16 215.39 L724.34 215.34Z" stroke="#86d549" stroke-width="2.08" stroke-linejoin="round"/>
<path d="M655.58 242.8 L654.72 242.82 L653.85 242.86 L652.95 242.94 L652.05 243.05 L651.12 243.19 L650.19 243.36 L649.25 243.56 L648.29 243.79 L647.33 244.05 L646.36 244.34 L645.38 244.66 L644.4 245.01 L643.41 245.38 L642.43 245.78 L641.44 246.21 L640.46 246.67 L639.48 247.15 L638.5 247.66 L637.53 248.19 L636.56 248.74 L635.61 249.32 L634.66 249.92 L633.73 250.54 L632.81 251.18 L631.91 251.84 L631.02 252.52 L630.15 253.22 L629.3 253.93 L628.47 254.66 L627.66 255.41 L626.87 256.17 L626.11 256.94 L625.37 257.72 L624.66 258.52 L623.98 259.32 L623.33 260.14 L622.7 260.96 L622.11 261.79 L621.55 262.63 L621.02 263.47 L620.52 264.31 L620.06 265.16 L619.63 266.01 L619.24 266.86 L618.88 267.71 L618.55 268.56 L618.27 269.41 L618.02 270.25 L617.8 271.09 L617.63 271.93 L617.49 272.75 L617.38 273.58 L617.32 274.39 L617.29 275.19 L617.3 275.99 L617.34 276.77 L617.42 277.55 L617.54 278.31 L617.69 279.05 L617.87 279.78 L618.09 280.5 L618.35 281.2 L618.64 281.88 L618.96 282.55 L619.31 283.2 L619.69 283.83 L620.11 284.43 L620.55 285.02 L621.02 285.59 L621.52 286.13 L622.05 286.66 L622.6 287.16 L623.18 287.63 L623.78 288.08 L624.41 288.51 L625.06 288.91 L625.73 289.29 L626.42 289.64 L627.13 289.96 L627.85 290.26 L628.59 290.53 L629.35 290.77 L630.13 290.98 L630.91 291.17 L631.71 291.33 L632.53 291.46 L633.35 291.56 L634.18 291.63 L635.02 291.67 L635.87 291.69 L636.72 291.67 L637.58 291.63 L638.44 291.56 L639.31 291.46 L640.18 291.33 L641.05 291.17 L641.92 290.98 L642.79 290.77 L643.66 290.53 L644.53 290.26 L645.39 289.96 L646.25 289.64 L647.11 289.29 L647.96 288.91 L648.8 288.51 L649.64 288.08 L650.46 287.63 L651.28 287.16 L652.09 286.66 L652.89 286.13 L653.68 285.59 L654.46 285.02 L655.22 284.43 L655.98 283.83 L656.71 283.2 L657.44 282.55 L658.15 281.88 L658.84 281.2 L659.52 280.5 L660.18 279.78 L660.83 279.05 L661.45 278.31 L662.06 277.55 L662.65 276.77 L663.22 275.99 L663.78 275.19 L664.31 274.39 L664.82 273.58 L665.31 272.75 L665.77 271.93 L666.22 271.09 L666.64 270.25 L667.04 269.41 L667.42 268.56 L667.77 267.71 L668.1 266.86 L668.41 266.01 L668.69 265.16 L668.94 264.31 L669.17 263.47 L669.37 262.63 L669.55 261.79 L669.7 260.96 L669.82 260.14 L669.92 259.32 L669.98 258.52 L670.02 257.72 L670.04 256.94 L670.02 256.17 L669.97 255.41 L669.9 254.66 L669.8 253.93 L669.67 253.22 L669.51 252.52 L669.32 251.84 L669.1 251.18 L668.86 250.54 L668.58 249.92 L668.27 249.32 L667.94 248.74 L667.58 248.19 L667.18 247.66 L666.76 247.15 L666.31 246.67 L665.84 246.21 L665.33 245.78 L664.8 245.38 L664.24 245.01 L663.65 244.66 L663.03 244.34 L662.39 244.05 L661.73 243.79 L661.04 243.56 L660.33 243.36 L659.59 243.19 L658.83 243.05 L658.05 242.94 L657.25 242.86 L656.42 242.82Z" stroke="#50c46a" stroke-width="2.08" stroke-linejoin="round"/>
<path d="M534.08 291.2 L533.22 291.21 L532.36 291.26 L531.49 291.33 L530.61 291.44 L529.73 291.57 L528.85 291.74 L527.96 291.93 L527.07 292.15 L526.18 292.4 L525.29 292.68 L524.41 292.99 L523.53 293.33 L522.65 293.69 L521.78 294.08 L520.92 294.5 L520.07 294.94 L519.23 295.41 L518.4 295.9 L517.59 296.41 L516.79 296.95 L516 297.52 L515.24 298.1 L514.49 298.71 L513.77 299.33 L513.07 299.98 L512.39 300.64 L511.73 301.33 L511.1 302.03 L510.5 302.74 L509.92 303.47 L509.38 304.22 L508.86 304.98 L508.37 305.76 L507.92 306.54 L507.5 307.34 L507.11 308.14 L506.76 308.96 L506.44 309.78 L506.16 310.61 L505.91 311.45 L505.7 312.29 L505.53 313.13 L505.39 313.98 L505.3 314.83 L505.24 315.68 L505.21 316.53 L505.23 317.38 L505.28 318.23 L505.37 319.07 L505.5 319.91 L505.66 320.75 L505.86 321.57 L506.1 322.4 L506.37 323.21 L506.68 324.01 L507.02 324.81 L507.39 325.59 L507.8 326.36 L508.24 327.12 L508.72 327.86 L509.22 328.59 L509.75 329.31 L510.31 330.01 L510.9 330.69 L511.51 331.35 L512.15 331.99 L512.82 332.61 L513.5 333.22 L514.21 333.8 L514.93 334.36 L515.68 334.89 L516.44 335.41 L517.22 335.9 L518.02 336.36 L518.82 336.8 L519.64 337.22 L520.47 337.6 L521.31 337.97 L522.16 338.3 L523.01 338.61 L523.87 338.88 L524.74 339.13 L525.6 339.35 L526.47 339.55 L527.34 339.71 L528.21 339.84 L529.08 339.95 L529.94 340.02 L530.8 340.07 L531.65 340.08 L532.5 340.07 L533.34 340.02 L534.17 339.95 L534.99 339.84 L535.81 339.71 L536.61 339.55 L537.4 339.35 L538.18 339.13 L538.94 338.88 L539.69 338.61 L540.43 338.3 L541.15 337.97 L541.85 337.6 L542.54 337.22 L543.21 336.8 L543.87 336.36 L544.5 335.9 L545.12 335.41 L545.72 334.89 L546.3 334.36 L546.87 333.8 L547.41 333.22 L547.93 332.61 L548.43 331.99 L548.92 331.35 L549.38 330.69 L549.82 330.01 L550.24 329.31 L550.64 328.59 L551.02 327.86 L551.38 327.12 L551.72 326.36 L552.03 325.59 L552.33 324.81 L552.6 324.01 L552.85 323.21 L553.08 322.4 L553.28 321.57 L553.47 320.75 L553.63 319.91 L553.78 319.07 L553.89 318.23 L553.99 317.38 L554.07 316.53 L554.12 315.68 L554.15 314.83 L554.16 313.98 L554.15 313.13 L554.11 312.29 L554.05 311.45 L553.97 310.61 L553.87 309.78 L553.74 308.96 L553.59 308.14 L553.42 307.34 L553.23 306.54 L553.01 305.76 L552.77 304.98 L552.51 304.22 L552.23 303.47 L551.92 302.74 L551.59 302.03 L551.24 301.33 L550.87 300.64 L550.47 299.98 L550.05 299.33 L549.61 298.71 L549.15 298.1 L548.66 297.52 L548.16 296.95 L547.63 296.41 L547.08 295.9 L546.51 295.41 L545.92 294.94 L545.31 294.5 L544.68 294.08 L544.03 293.69 L543.36 293.33 L542.67 292.99 L541.97 292.68 L541.25 292.4 L540.51 292.15 L539.75 291.93 L538.98 291.74 L538.2 291.57 L537.4 291.44 L536.59 291.33 L535.76 291.26 L534.93 291.21Z" stroke="#2ab07f" stroke-width="2.08" stroke-linejoin="round"/>
<path d="M432.13 248.2H439.07M435.6 244.73V251.67M431.28 250H438.22M434.75 246.53V253.47M431.03 249.5H437.97M434.5 246.03V252.97M428.33 248.6H435.27M431.8 245.13V252.07M431.03 248.5H437.97M434.5 245.03V251.97M434.93 248.6H441.87M438.4 245.13V252.07M432.13 252.6H439.07M435.6 249.13V256.07M431.78 250H438.72M435.25 246.53V253.47M432.28 249H439.22M435.75 245.53V252.47M430.53 252H437.47M434 248.53V255.47M703.08 245.6H710.02M706.55 242.13V249.07M634.1 278.6H641.04M637.57 275.13V282.07M526.03 318.65H532.97M529.5 315.18V322.12" stroke="#f00" stroke-width="1.39"/>
</g>
<g id="radlabels" font-family="'DejaVu Sans','Liberation Sans',sans-serif" font-size="10.42" fill="#fff" text-anchor="middle">
<text x="433.64" y="252.74">LEO</text>
<text x="709.94" y="242.77">NTA</text>
<text x="643.11" y="270.24">NOO</text>
<text x="529.28" y="318.64">AMO</text>
</g>
<g id="info" font-family="'DejaVu Sans Mono','Liberation Mono',monospace" font-size="13.89" fill="#fff" xml:space="preserve">
<text x="316" y="30">USL016</text>
<text x="316" y="43.2">Beg: 20251118 03:42:32 (sol = 235.69°)</text>
<text x="316" y="57.2">End: 20251118 12:30:32 (sol = 236.06°)</text>
<text x="316" y="68.6">--------------------------------------</text>
<text x="316" y="82.3">LEO: 10</text>
<text x="316" y="94.9">...: 9</text>
<text x="316" y="108.3">AMO: 1</text>
<text x="316" y="122.2">NOO: 1</text>
<text x="316" y="135.4">NTA: 1</text>
</g>
<g id="months" font-family="'DejaVu Sans','Liberation Sans',sans-serif" font-size="27.78" fill="#484848" text-anchor="end">
<text transform="translate(148.8 644.5) rotate(-90)" x="0" y="0">APR</text>
<text transform="translate(295 644.5) rotate(-90)" x="0" y="0">MAY</text>
<text transform="translate(436.3 644.5) rotate(-90)" x="0" y="0">JUN</text>
<text transform="translate(577.3 644.5) rotate(-90)" x="0" y="0">JUL</text>
<text transform="translate(724.7 644.5) rotate(-90)" x="0" y="0">AUG</text>
<text transform="translate(872.2 644.5) rotate(-90)" x="0" y="0">SEP</text>
<text transform="translate(1017.3 644.5) rotate(-90)" x="0" y="0">OCT</text>
<text transform="translate(1170.3 644.5) rotate(-90)" x="0" y="0">NOV</text>
<text transform="translate(1319 644.5) rotate(-90)" x="0" y="0">DEC</text>
<text transform="translate(1469.8 644.5) rotate(-90)" x="0" y="0">JAN</text>
<text transform="translate(1628 644.5) rotate(-90)" x="0" y="0">FEB</text>
<text transform="translate(1765.8 644.5) rotate(-90)" x="0" y="0">MAR</text>
</g>
<g id="bars" fill="none" stroke-width="4.17">
<path d="M106 834H130" stroke="#bddf26"/>
<path d="M165 834H345" stroke="#bddf26"/>
<path d="M366 834H625" stroke="#bddf26"/>
<path d="M636 834H787" stroke="#bddf26"/>
<path d="M807 834H900" stroke="#bddf26"/>
<path d="M920 834H973" stroke="#bddf26"/>
<path d="M984 834H1066" stroke="#bddf26"/>
<path d="M1082 834H1204" stroke="#bddf26"/>
<path d="M1244 834H1326" stroke="#bddf26"/>
<path d="M1337 834H1356" stroke="#bddf26"/>
<path d="M1381 834H1444" stroke="#bddf26"/>
<path d="M1459 834H1512" stroke="#bddf26"/>
<path d="M1523 834H1547" stroke="#bddf26"/>
<path d="M1723.9 834H1748.1" stroke="#bddf26"/>
<path d="M1757.9 834H1782.1" stroke="#bddf26"/>
<path d="M165 818H189" stroke="#81d34c"/>
<path d="M224 818H287" stroke="#81d34c"/>
<path d="M312 818H341" stroke="#81d34c"/>
<path d="M366 818H493" stroke="#81d34c"/>
<path d="M508 818H654" stroke="#81d34c"/>
<path d="M704 818H738" stroke="#81d34c"/>
<path d="M773 818H846" stroke="#81d34c"/>
<path d="M871 818H988" stroke="#81d34c"/>
<path d="M1003 818H1017" stroke="#81d34c"/>
<path d="M1062 818H1213" stroke="#81d34c"/>
<path d="M1244 818H1267" stroke="#81d34c"/>
<path d="M1293 818H1316" stroke="#81d34c"/>
<path d="M1342 818H1365" stroke="#81d34c"/>
<path d="M1386 818H1429" stroke="#81d34c"/>
<path d="M1459 818H1483" stroke="#81d34c"/>
<path d="M1548 818H1571" stroke="#81d34c"/>
<path d="M165 801.8H189" stroke="#50c36a"/>
<path d="M258 801.8H488" stroke="#50c36a"/>
<path d="M508 801.8H615" stroke="#50c36a"/>
<path d="M626 801.8H718" stroke="#50c36a"/>
<path d="M729 801.8H826" stroke="#50c36a"/>
<path d="M949 801.8H1150" stroke="#50c36a"/>
<path d="M1160 801.8H1248" stroke="#50c36a"/>
<path d="M1258 801.8H1444" stroke="#50c36a"/>
<path d="M1459 801.8H1483" stroke="#50c36a"/>
<path d="M1553 801.8H1576" stroke="#50c36a"/>
<path d="M194 785H218" stroke="#2bb07f"/>
<path d="M322 785H507" stroke="#2bb07f"/>
<path d="M518 785H542" stroke="#2bb07f"/>
<path d="M557 785H684" stroke="#2bb07f"/>
<path d="M807 785H831" stroke="#2bb07f"/>
<path d="M954 785H973" stroke="#2bb07f"/>
<path d="M989 785H1125" stroke="#2bb07f"/>
<path d="M1155 785H1218" stroke="#2bb07f"/>
<path d="M1244 785H1267" stroke="#2bb07f"/>
<path d="M1317 785H1341" stroke="#2bb07f"/>
<path d="M1396 785H1419" stroke="#2bb07f"/>
<path d="M1464 785H1650" stroke="#2bb07f"/>
<path d="M341 768.8H370" stroke="#1e9b89"/>
<path d="M410 768.8H448" stroke="#1e9b89"/>
<path d="M469 768.8H493" stroke="#1e9b89"/>
<path d="M528 768.8H546" stroke="#1e9b89"/>
<path d="M562 768.8H591" stroke="#1e9b89"/>
<path d="M616 768.8H649" stroke="#1e9b89"/>
<path d="M959 768.8H988" stroke="#1e9b89"/>
<path d="M1062 768.8H1086" stroke="#1e9b89"/>
<path d="M1101 768.8H1125" stroke="#1e9b89"/>
<path d="M1160 768.8H1194" stroke="#1e9b89"/>
<path d="M1249 768.8H1272" stroke="#1e9b89"/>
<path d="M1425 768.8H1512" stroke="#1e9b89"/>
<path d="M420 752H444" stroke="#25858e"/>
<path d="M533 752H556" stroke="#25858e"/>
<path d="M567 752H591" stroke="#25858e"/>
<path d="M621 752H743" stroke="#25858e"/>
<path d="M969 752H1135" stroke="#25858e"/>
<path d="M1185 752H1346" stroke="#25858e"/>
<path d="M1469 752H1493" stroke="#25858e"/>
<path d="M430 736H453" stroke="#2d708e"/>
<path d="M577 736H733" stroke="#2d708e"/>
<path d="M994 736H1105" stroke="#2d708e"/>
<path d="M1116 736H1223" stroke="#2d708e"/>
<path d="M1263 736H1292" stroke="#2d708e"/>
<path d="M1489 736H1512" stroke="#2d708e"/>
<path d="M592 719.8H615" stroke="#38598c"/>
<path d="M655 719.8H772" stroke="#38598c"/>
<path d="M1072 719.8H1243" stroke="#38598c"/>
<path d="M1263 719.8H1287" stroke="#38598c"/>
<path d="M596 703.2H733" stroke="#424085"/>
<path d="M1092 703.2H1120" stroke="#424085"/>
<path d="M1200 703.2H1223" stroke="#424085"/>
<path d="M1273 703.2H1326" stroke="#424085"/>
<path d="M1111 687H1135" stroke="#482475"/>
</g>
<g id="monthlines" fill="none" stroke="#c8c8c8" stroke-opacity="0.43" stroke-width="2.08" stroke-dasharray="2.08 3.44">
<path d="M74.7 841.8V641.5"/>
<path d="M219 841.8V641.5"/>
<path d="M365 841.8V641.5"/>
<path d="M506 841.8V641.5"/>
<path d="M651 841.8V641.5"/>
<path d="M797 841.8V641.5"/>
<path d="M940 841.8V641.5"/>
<path d="M1091 841.8V641.5"/>
<path d="M1239 841.8V641.5"/>
<path d="M1394 841.8V641.5"/>
<path d="M1548 841.8V641.5"/>
<path d="M1687 841.8V641.5"/>
</g>
<path id="peaks" d="M113.83 834H122.17M118 829.83V838.17M240.83 834H249.17M245 829.83V838.17M510.83 834H519.17M515 829.83V838.17M706.43 834H714.77M710.6 829.83V838.17M833.83 834H842.17M838 829.83V838.17M961.83 834H970.17M966 829.83V838.17M986.43 834H994.77M990.6 829.83V838.17M1116.83 834H1125.17M1121 829.83V838.17M1295.83 834H1304.17M1300 829.83V838.17M1341.83 834H1350.17M1346 829.83V838.17M1412.83 834H1421.17M1417 829.83V838.17M1481.43 834H1489.77M1485.6 829.83V838.17M1530.83 834H1539.17M1535 829.83V838.17M1731.83 834H1740.17M1736 829.83V838.17M1765.83 834H1774.17M1770 829.83V838.17M172.43 818H180.77M176.6 813.83V822.17M255.43 818H263.77M259.6 813.83V822.17M323.43 818H331.77M327.6 813.83V822.17M437.83 818H446.17M442 813.83V822.17M598.83 818H607.17M603 813.83V822.17M716.83 818H725.17M721 813.83V822.17M793.83 818H802.17M798 813.83V822.17M939.83 818H948.17M944 813.83V822.17M1005.83 818H1014.17M1010 813.83V822.17M1152.83 818H1161.17M1157 813.83V822.17M1250.83 818H1259.17M1255 813.83V822.17M1299.83 818H1308.17M1304 813.83V822.17M1349.43 818H1357.77M1353.6 813.83V822.17M1402.83 818H1411.17M1407 813.83V822.17M1466.83 818H1475.17M1471 813.83V822.17M1554.83 818H1563.17M1559 813.83V822.17M174.83 801.8H183.17M179 797.63V805.97M378.83 801.8H387.17M383 797.63V805.97M544.83 801.8H553.17M549 797.63V805.97M682.83 801.8H691.17M687 797.63V805.97M741.83 801.8H750.17M746 797.63V805.97M1074.83 801.8H1083.17M1079 797.63V805.97M1216.83 801.8H1225.17M1221 797.63V805.97M1304.83 801.8H1313.17M1309 797.63V805.97M1466.83 801.8H1475.17M1471 797.63V805.97M1559.83 801.8H1568.17M1564 797.63V805.97M201.83 785H210.17M206 780.83V789.17M400.43 785H408.77M404.6 780.83V789.17M525.43 785H533.77M529.6 780.83V789.17M638.83 785H647.17M643 780.83V789.17M814.83 785H823.17M819 780.83V789.17M959.83 785H968.17M964 780.83V789.17M1040.83 785H1049.17M1045 780.83V789.17M1187.83 785H1196.17M1192 780.83V789.17M1250.83 785H1259.17M1255 780.83V789.17M1324.83 785H1333.17M1329 780.83V789.17M1402.83 785H1411.17M1407 780.83V789.17M1545.43 785H1553.77M1549.6 780.83V789.17M355.83 768.8H364.17M360 764.63V772.97M426.83 768.8H435.17M431 764.63V772.97M476.83 768.8H485.17M481 764.63V772.97M535.83 768.8H544.17M540 764.63V772.97M570.83 768.8H579.17M575 764.63V772.97M630.83 768.8H639.17M635 764.63V772.97M973.83 768.8H982.17M978 764.63V772.97M1069.43 768.8H1077.77M1073.6 764.63V772.97M1108.43 768.8H1116.77M1112.6 764.63V772.97M1177.43 768.8H1185.77M1181.6 764.63V772.97M1255.43 768.8H1263.77M1259.6 764.63V772.97M1466.83 768.8H1475.17M1471 764.63V772.97M427.83 752H436.17M432 747.83V756.17M539.83 752H548.17M544 747.83V756.17M574.43 752H582.77M578.6 747.83V756.17M703.83 752H712.17M708 747.83V756.17M1094.83 752H1103.17M1099 747.83V756.17M1270.83 752H1279.17M1275 747.83V756.17M1476.83 752H1485.17M1481 747.83V756.17M437.83 736H446.17M442 731.83V740.17M630.83 736H639.17M635 731.83V740.17M1038.83 736H1047.17M1043 731.83V740.17M1167.83 736H1176.17M1172 731.83V740.17M1274.83 736H1283.17M1279 731.83V740.17M1496.83 736H1505.17M1501 731.83V740.17M598.83 719.8H607.17M603 715.63V723.97M726.83 719.8H735.17M731 715.63V723.97M1187.83 719.8H1196.17M1192 715.63V723.97M1270.83 719.8H1279.17M1275 715.63V723.97M687.83 703.2H696.17M692 699.03V707.37M1101.83 703.2H1110.17M1106 699.03V707.37M1206.83 703.2H1215.17M1211 699.03V707.37M1299.83 703.2H1308.17M1304 699.03V707.37M1118.83 687H1127.17M1123 682.83V691.17" fill="none" stroke="#fff" stroke-width="2.08"/>
<g id="barlabels" font-family="'DejaVu Sans','Liberation Sans',sans-serif" font-size="10.42" fill="#fff" text-anchor="middle">
<text x="117.2" y="831.5">KSE</text>
<text x="254.6" y="831.5">ETA</text>
<text x="495.3" y="831.5">NZC</text>
<text x="710.7" y="831.5">NDA</text>
<text x="853.7" y="831.5">SPE</text>
<text x="946.5" y="831.5">ARD</text>
<text x="1025" y="831.5">EGE</text>
<text x="1143" y="831.5">NTA</text>
<text x="1285" y="831.5">MON</text>
<text x="1343.4" y="831.5">URS</text>
<text x="1412" y="831.5">AHY</text>
<text x="1485.5" y="831.5">GUM</text>
<text x="1535.5" y="831.5">OHY</text>
<text x="1736" y="831.5">XHE</text>
<text x="1769.7" y="831.5">EVI</text>
<text x="176.3" y="814.6">AVB</text>
<text x="254.9" y="814.6">ELY</text>
<text x="324.1" y="814.6">CAM</text>
<text x="432.1" y="814.6">SSG</text>
<text x="578.5" y="814.6">PCA</text>
<text x="720.7" y="814.6">AUD</text>
<text x="809.5" y="814.6">AUR</text>
<text x="930.7" y="814.6">DSX</text>
<text x="1010.9" y="814.6">OCU</text>
<text x="1138.3" y="814.6">OER</text>
<text x="1254.7" y="814.6">DKD</text>
<text x="1304.2" y="814.6">DSV</text>
<text x="1352.9" y="814.6">ALY</text>
<text x="1407.5" y="814.6">JLE</text>
<text x="1471.6" y="814.6">SCC</text>
<text x="1559.1" y="814.6">FEV</text>
<text x="176.2" y="799.3">LYR</text>
<text x="373" y="799.3">JMC</text>
<text x="559.5" y="799.3">JPE</text>
<text x="671.6" y="799.3">PAU</text>
<text x="774.5" y="799.3">NIA</text>
<text x="1050.2" y="799.3">STA</text>
<text x="1206.3" y="799.3">NOO</text>
<text x="1353.6" y="799.3">COM</text>
<text x="1471" y="799.3">NCC</text>
<text x="1564.5" y="799.3">FED</text>
<text x="206.3" y="782.5">HVI</text>
<text x="412.1" y="782.5">ARI</text>
<text x="530" y="782.5">SZC</text>
<text x="618.5" y="782.5">CAP</text>
<text x="818.3" y="782.5">NUE</text>
<text x="961.4" y="782.5">OCT</text>
<text x="1059.1" y="782.5">ORI</text>
<text x="1186.3" y="782.5">AMO</text>
<text x="1255.2" y="782.5">DPC</text>
<text x="1329" y="782.5">XVI</text>
<text x="1407.5" y="782.5">QUA</text>
<text x="1559.9" y="782.5">AAN</text>
<text x="352.8" y="766.3">TAH</text>
<text x="431.8" y="766.3">JEA</text>
<text x="481.2" y="766.3">JIP</text>
<text x="539" y="766.3">PPS</text>
<text x="579" y="766.3">ZCS</text>
<text x="632.7" y="766.3">GDR</text>
<text x="971.5" y="766.3">DRA</text>
<text x="1073.2" y="766.3">LUM</text>
<text x="1113" y="766.3">RPU</text>
<text x="1177.5" y="766.3">THA</text>
<text x="1259.5" y="766.3">PSU</text>
<text x="1470.8" y="766.3">XCB</text>
<text x="432" y="749.5">JRC</text>
<text x="544.3" y="749.5">CAN</text>
<text x="578.2" y="749.5">FAN</text>
<text x="681.2" y="749.5">PER</text>
<text x="1050.2" y="749.5">CTA</text>
<text x="1265.5" y="749.5">HYD</text>
<text x="1481" y="749.5">XUM</text>
<text x="441.5" y="732.8">COR</text>
<text x="658" y="732.8">SDA</text>
<text x="1049.5" y="732.8">LMI</text>
<text x="1166.7" y="732.8">LEO</text>
<text x="1274.7" y="732.8">EHY</text>
<text x="1500.5" y="732.8">ECV</text>
<text x="603.7" y="717.3">JXA</text>
<text x="716" y="717.3">KCG</text>
<text x="1156.5" y="717.3">AND</text>
<text x="1275" y="717.3">DAD</text>
<text x="666.5" y="700.7">ERI</text>
<text x="1108.5" y="700.7">SLD</text>
<text x="1211.5" y="700.7">ORS</text>
<text x="1300.2" y="700.7">GEM</text>
<text x="1123" y="683.6">KUM</text>
</g>
<path d="M1177 842.3V641.5" fill="none" stroke="#f00" stroke-width="2.08" stroke-dasharray="7.71 3.33"/>
<rect x="20.3" y="641.5" width="1765" height="200.8" fill="none" stroke="#fff" stroke-width="1.11"/>
<path d="M20.3 842.3V847.16M265.44 842.3V847.16M510.58 842.3V847.16M755.72 842.3V847.16M1000.86 842.3V847.16M1245.99 842.3V847.16M1491.13 842.3V847.16M1736.27 842.3V847.16" fill="none" stroke="#fff" stroke-width="1.11"/>
<g id="ticklabels" font-family="'DejaVu Sans','Liberation Sans',sans-serif" font-size="13.89" fill="#fff" text-anchor="middle">
<text x="20.3" y="862.2">0</text>
<text x="265.44" y="862.2">50</text>
<text x="510.58" y="862.2">100</text>
<text x="755.72" y="862.2">150</text>
<text x="1000.86" y="862.2">200</text>
<text x="1245.99" y="862.2">250</text>
<text x="1491.13" y="862.2">300</text>
<text x="1736.27" y="862.2">350</text>
<text x="902.8" y="882">Solar longitude (deg)</text>
</g>
</svg>
</body>
</html>
